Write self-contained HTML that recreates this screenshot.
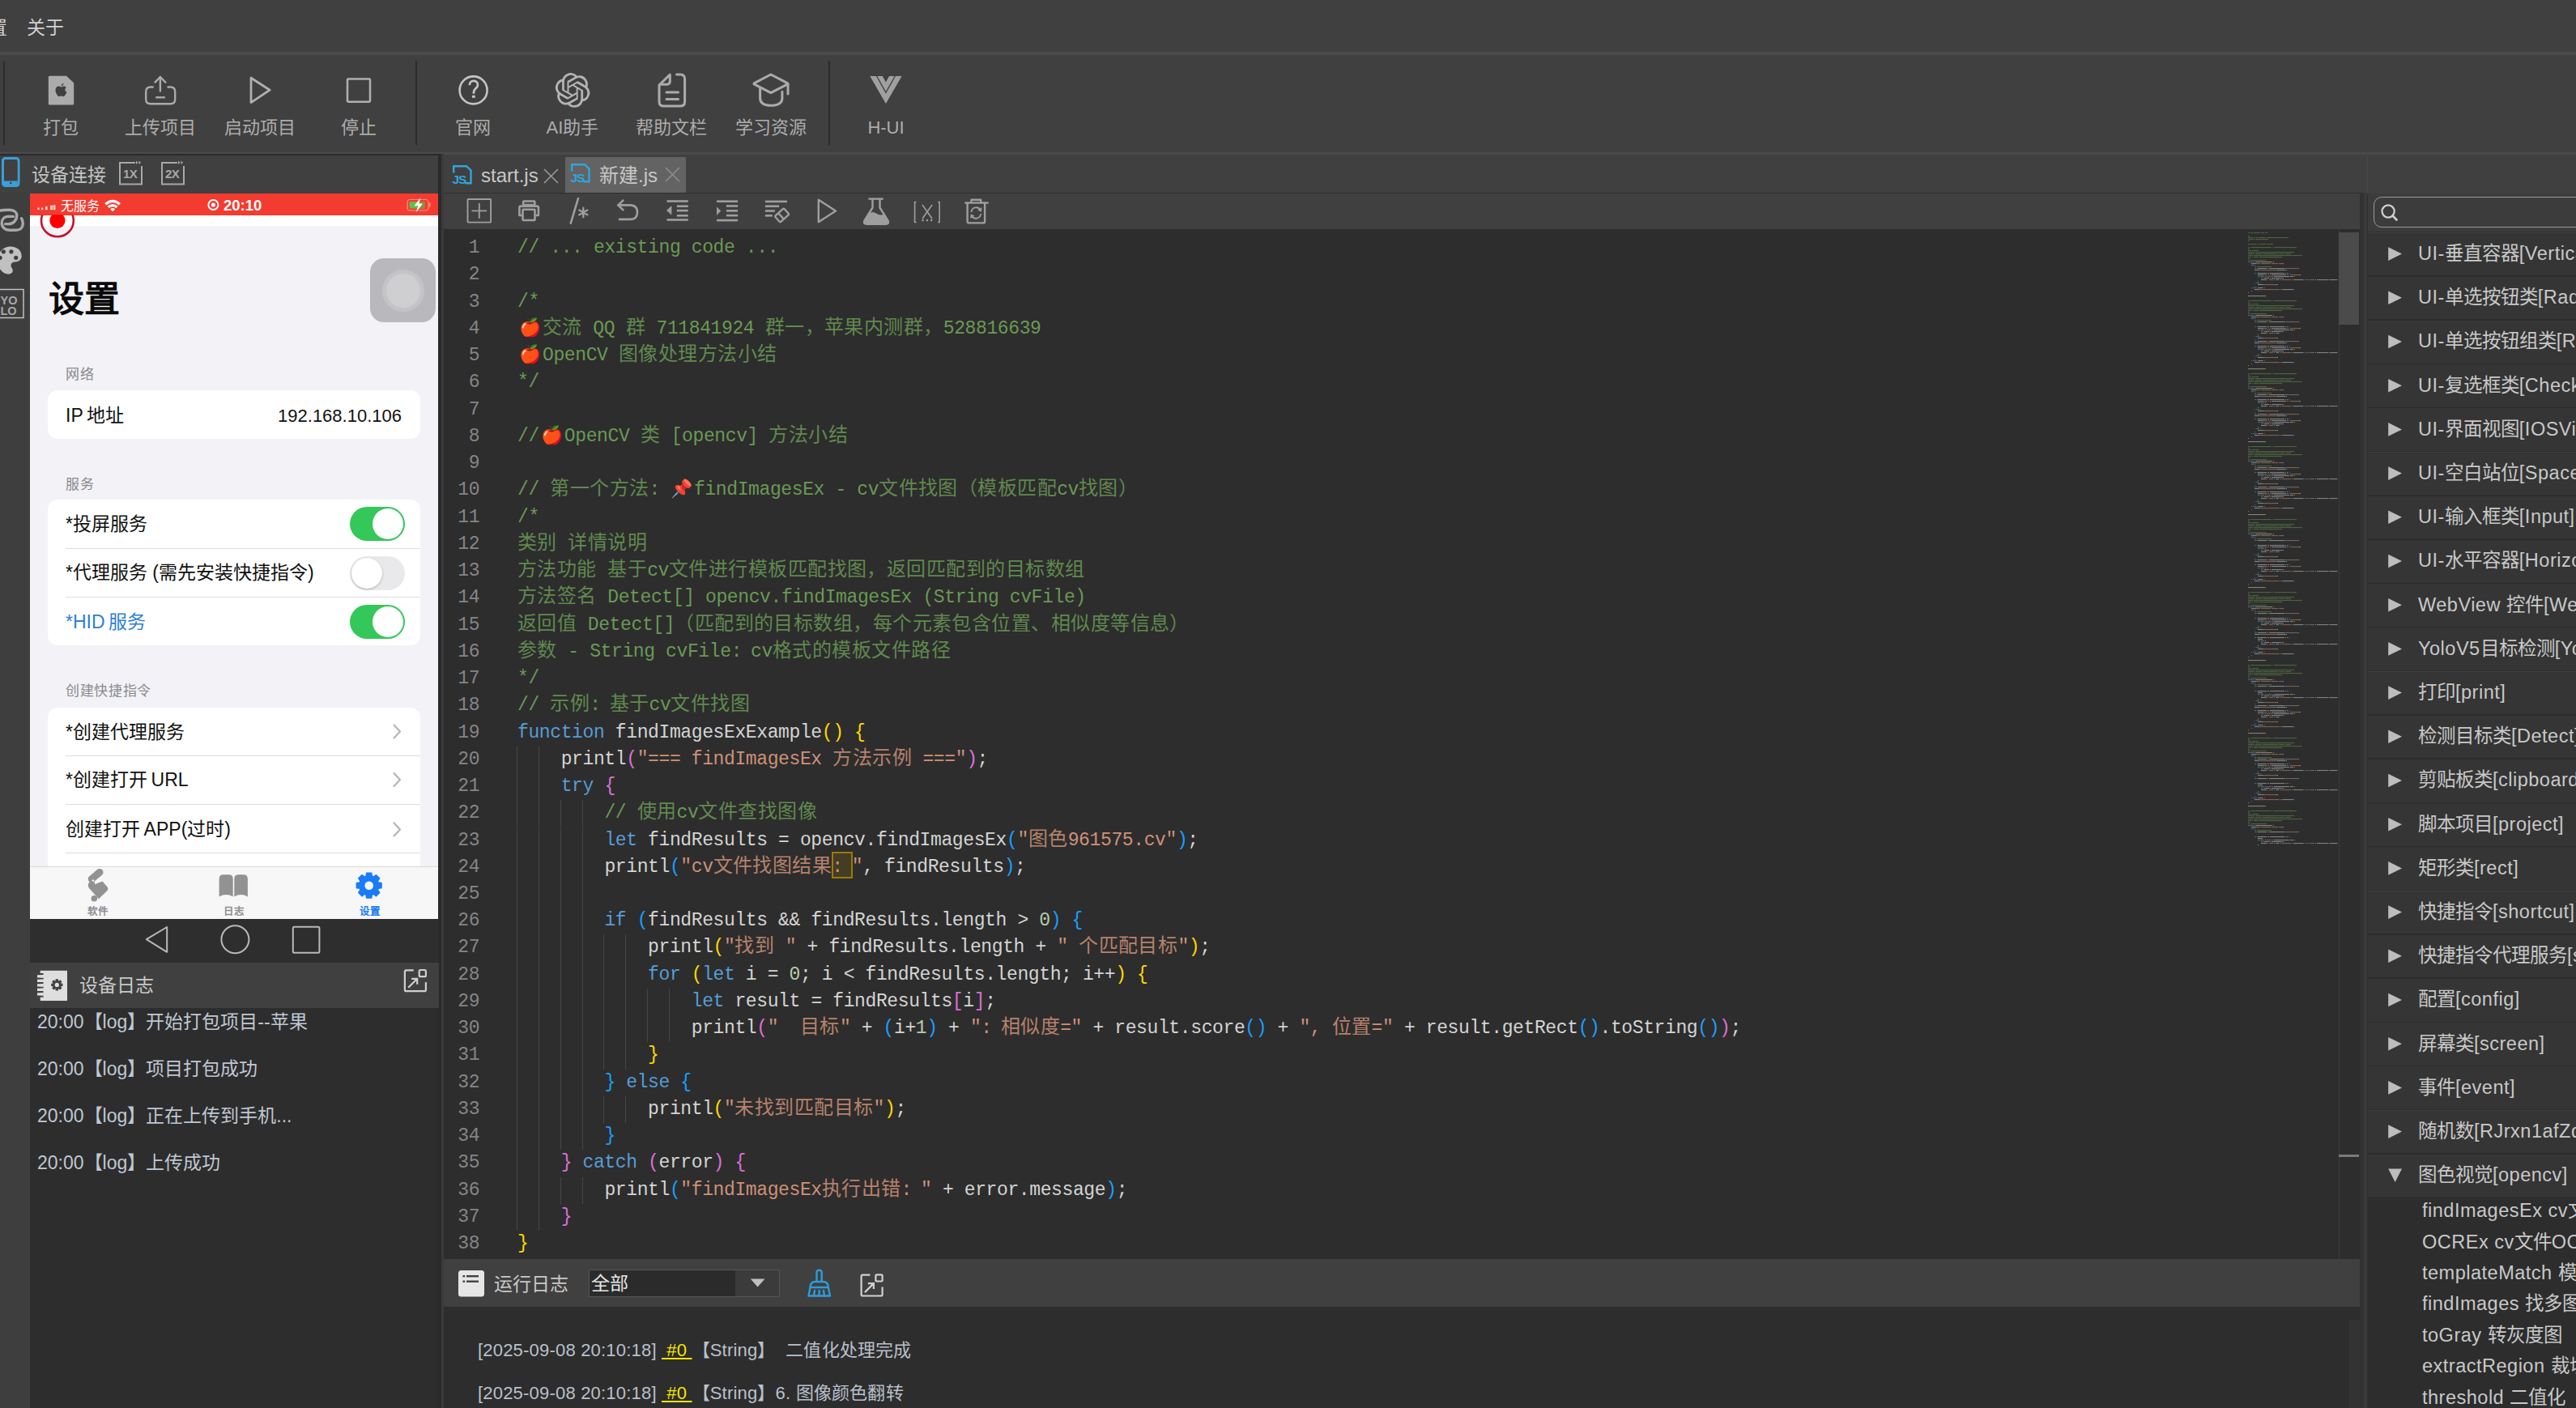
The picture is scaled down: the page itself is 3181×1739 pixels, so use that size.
<!DOCTYPE html>
<html lang="zh-CN"><head><meta charset="utf-8"><style>
*{margin:0;padding:0;box-sizing:border-box}
html,body{width:3181px;height:1739px;overflow:hidden;background:#404040}
body{position:relative;font-family:"Liberation Sans",sans-serif;color:#c8c8c8}
.a{position:absolute}
.cl{position:absolute;left:639px;height:33.2px;line-height:33.2px;white-space:pre;font-family:"Liberation Mono",monospace;font-size:23px;letter-spacing:-0.382px}
.cj{font-size:24px;letter-spacing:0.45px;font-family:"Liberation Sans",sans-serif;line-height:0;opacity:.85}
.fc{display:inline-block;width:24.45px;letter-spacing:0}
.em{display:inline-block;width:31px;font-size:22px;text-align:center;line-height:0}
.ln{position:absolute;left:541px;width:51px;text-align:right;height:33.2px;line-height:33.2px;font-family:"Liberation Mono",monospace;font-size:23px;letter-spacing:-0.48px;color:#858585}
.ig{position:absolute;width:1px;background:#464646}
.tb{position:absolute;text-align:center;font-size:22px;color:#adadad;line-height:30px;white-space:nowrap}
svg{position:absolute;overflow:visible}
</style></head>
<body>
<div class="a" style="left:0.0px;top:0.0px;width:3181.0px;height:64.0px;background:#404040;"></div>
<div class="a" style="left:-14.0px;top:23.2px;font-size:23.0px;color:#d0d0d0;white-space:nowrap;line-height:1;">置</div>
<div class="a" style="left:33.0px;top:23.2px;font-size:23.0px;color:#d0d0d0;white-space:nowrap;line-height:1;">关于</div>
<div class="a" style="left:0.0px;top:64.0px;width:3181.0px;height:4.0px;background:#4a4a4a;"></div>
<div class="a" style="left:0.0px;top:68.0px;width:3181.0px;height:120.0px;background:#404040;"></div>
<div class="a" style="left:4.0px;top:75.0px;width:2.0px;height:104.0px;background:#2c2c2c;"></div>
<div class="a" style="left:513.0px;top:75.0px;width:2.0px;height:104.0px;background:#2c2c2c;"></div>
<div class="a" style="left:1023.0px;top:75.0px;width:2.0px;height:104.0px;background:#2c2c2c;"></div>
<div class="a" style="left:0.0px;top:188.0px;width:3181.0px;height:3.0px;background:#4a4a4a;"></div>
<div class="tb" style="left:-5px;top:143px;width:160px">打包</div>
<div class="tb" style="left:118px;top:143px;width:160px">上传项目</div>
<div class="tb" style="left:241px;top:143px;width:160px">启动项目</div>
<div class="tb" style="left:363px;top:143px;width:160px">停止</div>
<div class="tb" style="left:504px;top:143px;width:160px">官网</div>
<div class="tb" style="left:627px;top:143px;width:160px">AI助手</div>
<div class="tb" style="left:749px;top:143px;width:160px">帮助文栏</div>
<div class="tb" style="left:872px;top:143px;width:160px">学习资源</div>
<div class="tb" style="left:1014px;top:143px;width:160px">H-UI</div>
<div class="a" style="left:0.0px;top:191.0px;width:541.0px;height:47.0px;background:#404040;"></div>
<div class="a" style="left:541.0px;top:190.0px;width:4.0px;height:1549.0px;background:#2a2a2a;"></div>
<div class="a" style="left:0.0px;top:190.0px;width:541.0px;height:2.0px;background:#2a2a2a;"></div>
<div class="a" style="left:545.0px;top:190.0px;width:3.0px;height:1549.0px;background:#3a3a3a;"></div>
<div class="a" style="left:0.0px;top:238.0px;width:37.0px;height:1501.0px;background:#3e3e3e;"></div>
<div class="a" style="left:39.0px;top:205.0px;font-size:23.0px;color:#c4c4c4;white-space:nowrap;line-height:1;">设备连接</div>
<div class="a" style="left:37.0px;top:239.0px;width:504.0px;height:831.0px;background:#f2f2f7;"></div>
<div class="a" style="left:37.0px;top:265.5px;width:504.0px;height:13.0px;background:#ffffff;"></div>
<div class="a" style="left:37.0px;top:239.0px;width:504.0px;height:26.5px;background:#f43b2f;"></div>
<div class="a" style="left:60.0px;top:348.0px;font-size:44.0px;color:#0a0a0a;white-space:nowrap;line-height:1;font-weight:bold">设置</div>
<div class="a" style="left:457px;top:319px;width:81px;height:79px;border-radius:17px;background:#b9b9bd"></div>
<div class="a" style="left:477px;top:338px;width:42px;height:42px;border-radius:50%;background:#cfcfd2;box-shadow:0 0 0 5px #c4c4c8"></div>
<div class="a" style="left:81.0px;top:454.0px;font-size:17.0px;color:#8a8a8e;white-space:nowrap;line-height:1;letter-spacing:0.7px">网络</div>
<div class="a" style="left:81.0px;top:589.5px;font-size:17.0px;color:#8a8a8e;white-space:nowrap;line-height:1;letter-spacing:0.7px">服务</div>
<div class="a" style="left:81.0px;top:845.0px;font-size:17.0px;color:#8a8a8e;white-space:nowrap;line-height:1;letter-spacing:0.7px">创建快捷指令</div>
<div class="a" style="left:59px;top:482px;width:460px;height:60px;border-radius:12px;background:#fff"></div>
<div class="a" style="left:81.0px;top:502.0px;font-size:23.0px;color:#111;white-space:nowrap;line-height:1;">IP&thinsp;地址</div>
<div class="a" style="left:200px;top:503px;width:296px;text-align:right;font-size:22px;color:#111;line-height:1">192.168.10.106</div>
<div class="a" style="left:59px;top:617px;width:460px;height:180px;border-radius:12px;background:#fff"></div>
<div class="a" style="left:81.0px;top:676.5px;width:438.0px;height:1.0px;background:#dcdcdc;"></div>
<div class="a" style="left:81.0px;top:736.5px;width:438.0px;height:1.0px;background:#dcdcdc;"></div>
<div class="a" style="left:81.0px;top:636.0px;font-size:23.0px;color:#111;white-space:nowrap;line-height:1;">*投屏服务</div>
<div class="a" style="left:81.0px;top:695.5px;font-size:23.0px;color:#111;white-space:nowrap;line-height:1;">*代理服务 (需先安装快捷指令)</div>
<div class="a" style="left:81.0px;top:756.5px;font-size:23.0px;color:#2d7fd9;white-space:nowrap;line-height:1;">*HID&thinsp;服务</div>
<div class="a" style="left:432px;top:626.0px;width:68px;height:42px;border-radius:21px;background:#34c759"></div>
<div class="a" style="left:460px;top:628.0px;width:38px;height:38px;border-radius:50%;background:#fff"></div>
<div class="a" style="left:432px;top:686.6px;width:68px;height:42px;border-radius:21px;background:#e9e9eb"></div>
<div class="a" style="left:434px;top:688.6px;width:38px;height:38px;border-radius:50%;background:#fff;box-shadow:0 1px 3px rgba(0,0,0,.25)"></div>
<div class="a" style="left:432px;top:747.0px;width:68px;height:42px;border-radius:21px;background:#34c759"></div>
<div class="a" style="left:460px;top:749.0px;width:38px;height:38px;border-radius:50%;background:#fff"></div>
<div class="a" style="left:59px;top:874px;width:460px;height:250px;border-radius:12px;background:#fff"></div>
<div class="a" style="left:81.0px;top:932.5px;width:438.0px;height:1.0px;background:#dcdcdc;"></div>
<div class="a" style="left:81.0px;top:993.0px;width:438.0px;height:1.0px;background:#dcdcdc;"></div>
<div class="a" style="left:81.0px;top:1053.0px;width:438.0px;height:1.0px;background:#dcdcdc;"></div>
<div class="a" style="left:81.0px;top:892.5px;font-size:23.0px;color:#111;white-space:nowrap;line-height:1;">*创建代理服务</div>
<div class="a" style="left:81.0px;top:952.0px;font-size:23.0px;color:#111;white-space:nowrap;line-height:1;">*创建打开&thinsp;URL</div>
<div class="a" style="left:81.0px;top:1012.5px;font-size:23.0px;color:#111;white-space:nowrap;line-height:1;">创建打开&thinsp;APP(过时)</div>
<div class="a" style="left:37.0px;top:1069.6px;width:504.0px;height:65.4px;background:#f7f7f7;"></div>
<div class="a" style="left:37.0px;top:1069.6px;width:504.0px;height:1.0px;background:#d8d8d8;"></div>
<div class="a" style="left:108.0px;top:1119.5px;font-size:12.5px;color:#8e8e93;white-space:nowrap;line-height:1;font-weight:bold">软件</div>
<div class="a" style="left:276.0px;top:1119.5px;font-size:12.5px;color:#8e8e93;white-space:nowrap;line-height:1;font-weight:bold">日志</div>
<div class="a" style="left:444.0px;top:1119.5px;font-size:12.5px;color:#1a7cf5;white-space:nowrap;line-height:1;font-weight:bold">设置</div>
<div class="a" style="left:37.0px;top:1135.0px;width:504.0px;height:54.0px;background:#2e2e2e;"></div>
<div class="a" style="left:38.0px;top:1190.0px;width:504.0px;height:55.0px;background:#404040;"></div>
<div class="a" style="left:98.0px;top:1206.0px;font-size:23.0px;color:#c8c8c8;white-space:nowrap;line-height:1;">设备日志</div>
<div class="a" style="left:37.0px;top:1245.0px;width:504.0px;height:494.0px;background:#2d2d2d;"></div>
<div class="a" style="left:46.0px;top:1250.5px;font-size:23.0px;color:#bfc7d2;white-space:nowrap;line-height:1;">20:00【log】开始打包项目--苹果</div>
<div class="a" style="left:46.0px;top:1308.6px;font-size:23.0px;color:#bfc7d2;white-space:nowrap;line-height:1;">20:00【log】项目打包成功</div>
<div class="a" style="left:46.0px;top:1366.7px;font-size:23.0px;color:#bfc7d2;white-space:nowrap;line-height:1;">20:00【log】正在上传到手机...</div>
<div class="a" style="left:46.0px;top:1424.8px;font-size:23.0px;color:#bfc7d2;white-space:nowrap;line-height:1;">20:00【log】上传成功</div>
<div class="a" style="left:548.0px;top:191.0px;width:2370.0px;height:47.0px;background:#404040;"></div>
<div class="a" style="left:548.0px;top:237.8px;width:2370.0px;height:1.5px;background:#2e2e2e;"></div>
<div class="a" style="left:698.0px;top:194.0px;width:149.0px;height:44.0px;background:#636363;"></div>
<div class="a" style="left:594.0px;top:205.0px;font-size:24.0px;color:#c8c8c8;white-space:nowrap;line-height:1;">start.js</div>
<div class="a" style="left:740.0px;top:205.0px;font-size:24.0px;color:#c8c8c8;white-space:nowrap;line-height:1;">新建.js</div>
<div class="a" style="left:548.0px;top:239.3px;width:2365.0px;height:43.5px;background:#404040;"></div>
<div class="a" style="left:548.0px;top:282.8px;width:2370.0px;height:1272.0px;background:#2d2d2d;"></div>
<div class="a" style="left:1027.3px;top:1051.8px;width:25.4px;height:33px;border:2px solid #9a7c00;background:#433d26"></div>
<div class="ln" style="top:290.2px">1</div>
<div class="ln" style="top:323.4px">2</div>
<div class="ln" style="top:356.7px">3</div>
<div class="ln" style="top:389.9px">4</div>
<div class="ln" style="top:423.2px">5</div>
<div class="ln" style="top:456.4px">6</div>
<div class="ln" style="top:489.6px">7</div>
<div class="ln" style="top:522.9px">8</div>
<div class="ln" style="top:556.1px">9</div>
<div class="ln" style="top:589.4px">10</div>
<div class="ln" style="top:622.6px">11</div>
<div class="ln" style="top:655.8px">12</div>
<div class="ln" style="top:689.1px">13</div>
<div class="ln" style="top:722.3px">14</div>
<div class="ln" style="top:755.6px">15</div>
<div class="ln" style="top:788.8px">16</div>
<div class="ln" style="top:822.0px">17</div>
<div class="ln" style="top:855.3px">18</div>
<div class="ln" style="top:888.5px">19</div>
<div class="ln" style="top:921.8px">20</div>
<div class="ln" style="top:955.0px">21</div>
<div class="ln" style="top:988.2px">22</div>
<div class="ln" style="top:1021.5px">23</div>
<div class="ln" style="top:1054.7px">24</div>
<div class="ln" style="top:1088.0px">25</div>
<div class="ln" style="top:1121.2px">26</div>
<div class="ln" style="top:1154.4px">27</div>
<div class="ln" style="top:1187.7px">28</div>
<div class="ln" style="top:1220.9px">29</div>
<div class="ln" style="top:1254.2px">30</div>
<div class="ln" style="top:1287.4px">31</div>
<div class="ln" style="top:1320.6px">32</div>
<div class="ln" style="top:1353.9px">33</div>
<div class="ln" style="top:1387.1px">34</div>
<div class="ln" style="top:1420.4px">35</div>
<div class="ln" style="top:1453.6px">36</div>
<div class="ln" style="top:1486.8px">37</div>
<div class="ln" style="top:1520.1px">38</div>
<div class="cl" style="top:290.2px"><span style="color:#6a9955">// ... existing code ...</span></div>
<div class="cl" style="top:323.4px"></div>
<div class="cl" style="top:356.7px"><span style="color:#6a9955">/*</span></div>
<div class="cl" style="top:389.9px"><span style="color:#6a9955"><span class="em">🍎</span><span class="cj">交流</span> QQ <span class="cj">群</span> 711841924 <span class="cj">群一，苹果内测群，</span>528816639</span></div>
<div class="cl" style="top:423.2px"><span style="color:#6a9955"><span class="em">🍎</span>OpenCV <span class="cj">图像处理方法小结</span></span></div>
<div class="cl" style="top:456.4px"><span style="color:#6a9955">*/</span></div>
<div class="cl" style="top:489.6px"></div>
<div class="cl" style="top:522.9px"><span style="color:#6a9955">//<span class="em">🍎</span>OpenCV <span class="cj">类</span> [opencv] <span class="cj">方法小结</span></span></div>
<div class="cl" style="top:556.1px"></div>
<div class="cl" style="top:589.4px"><span style="color:#6a9955">// <span class="cj">第一个方法</span><span class="fc">:</span><span class="em">📌</span>findImagesEx - cv<span class="cj">文件找图（模板匹配</span>cv<span class="cj">找图）</span></span></div>
<div class="cl" style="top:622.6px"><span style="color:#6a9955">/*</span></div>
<div class="cl" style="top:655.8px"><span style="color:#6a9955"><span class="cj">类别</span> <span class="cj">详情说明</span></span></div>
<div class="cl" style="top:689.1px"><span style="color:#6a9955"><span class="cj">方法功能</span> <span class="cj">基于</span>cv<span class="cj">文件进行模板匹配找图，返回匹配到的目标数组</span></span></div>
<div class="cl" style="top:722.3px"><span style="color:#6a9955"><span class="cj">方法签名</span> Detect[] opencv.findImagesEx (String cvFile)</span></div>
<div class="cl" style="top:755.6px"><span style="color:#6a9955"><span class="cj">返回值</span> Detect[]<span class="cj">（匹配到的目标数组，每个元素包含位置、相似度等信息）</span></span></div>
<div class="cl" style="top:788.8px"><span style="color:#6a9955"><span class="cj">参数</span> - String cvFile<span class="fc">:</span>cv<span class="cj">格式的模板文件路径</span></span></div>
<div class="cl" style="top:822.0px"><span style="color:#6a9955">*/</span></div>
<div class="cl" style="top:855.3px"><span style="color:#6a9955">// <span class="cj">示例</span><span class="fc">:</span><span class="cj">基于</span>cv<span class="cj">文件找图</span></span></div>
<div class="cl" style="top:888.5px"><span style="color:#569cd6">function</span><span style="color:#d4d4d4"> </span><span style="color:#d4d4d4">findImagesExExample</span><span style="color:#ffd700">(</span><span style="color:#ffd700">)</span><span style="color:#d4d4d4"> </span><span style="color:#ffd700">{</span></div>
<div class="cl" style="top:921.8px"><span style="color:#d4d4d4"> </span><span style="color:#d4d4d4"> </span><span style="color:#d4d4d4"> </span><span style="color:#d4d4d4"> </span><span style="color:#d4d4d4">printl</span><span style="color:#da70d6">(</span><span style="color:#ce9178">&quot;=== findImagesEx <span class="cj">方法示例</span> ===&quot;</span><span style="color:#da70d6">)</span><span style="color:#d4d4d4">;</span></div>
<div class="cl" style="top:955.0px"><span style="color:#d4d4d4"> </span><span style="color:#d4d4d4"> </span><span style="color:#d4d4d4"> </span><span style="color:#d4d4d4"> </span><span style="color:#569cd6">try</span><span style="color:#d4d4d4"> </span><span style="color:#da70d6">{</span></div>
<div class="cl" style="top:988.2px"><span style="color:#d4d4d4"> </span><span style="color:#d4d4d4"> </span><span style="color:#d4d4d4"> </span><span style="color:#d4d4d4"> </span><span style="color:#d4d4d4"> </span><span style="color:#d4d4d4"> </span><span style="color:#d4d4d4"> </span><span style="color:#d4d4d4"> </span><span style="color:#6a9955">// <span class="cj">使用</span>cv<span class="cj">文件查找图像</span></span></div>
<div class="cl" style="top:1021.5px"><span style="color:#d4d4d4"> </span><span style="color:#d4d4d4"> </span><span style="color:#d4d4d4"> </span><span style="color:#d4d4d4"> </span><span style="color:#d4d4d4"> </span><span style="color:#d4d4d4"> </span><span style="color:#d4d4d4"> </span><span style="color:#d4d4d4"> </span><span style="color:#569cd6">let</span><span style="color:#d4d4d4"> </span><span style="color:#d4d4d4">findResults</span><span style="color:#d4d4d4"> </span><span style="color:#d4d4d4">=</span><span style="color:#d4d4d4"> </span><span style="color:#d4d4d4">opencv</span><span style="color:#d4d4d4">.</span><span style="color:#d4d4d4">findImagesEx</span><span style="color:#179fff">(</span><span style="color:#ce9178">&quot;<span class="cj">图色</span>961575.cv&quot;</span><span style="color:#179fff">)</span><span style="color:#d4d4d4">;</span></div>
<div class="cl" style="top:1054.7px"><span style="color:#d4d4d4"> </span><span style="color:#d4d4d4"> </span><span style="color:#d4d4d4"> </span><span style="color:#d4d4d4"> </span><span style="color:#d4d4d4"> </span><span style="color:#d4d4d4"> </span><span style="color:#d4d4d4"> </span><span style="color:#d4d4d4"> </span><span style="color:#d4d4d4">printl</span><span style="color:#179fff">(</span><span style="color:#ce9178">&quot;cv<span class="cj">文件找图结果</span><span class="fc">:</span>&quot;</span><span style="color:#d4d4d4">,</span><span style="color:#d4d4d4"> </span><span style="color:#d4d4d4">findResults</span><span style="color:#179fff">)</span><span style="color:#d4d4d4">;</span></div>
<div class="cl" style="top:1088.0px"></div>
<div class="cl" style="top:1121.2px"><span style="color:#d4d4d4"> </span><span style="color:#d4d4d4"> </span><span style="color:#d4d4d4"> </span><span style="color:#d4d4d4"> </span><span style="color:#d4d4d4"> </span><span style="color:#d4d4d4"> </span><span style="color:#d4d4d4"> </span><span style="color:#d4d4d4"> </span><span style="color:#569cd6">if</span><span style="color:#d4d4d4"> </span><span style="color:#179fff">(</span><span style="color:#d4d4d4">findResults</span><span style="color:#d4d4d4"> </span><span style="color:#d4d4d4">&amp;</span><span style="color:#d4d4d4">&amp;</span><span style="color:#d4d4d4"> </span><span style="color:#d4d4d4">findResults</span><span style="color:#d4d4d4">.</span><span style="color:#d4d4d4">length</span><span style="color:#d4d4d4"> </span><span style="color:#d4d4d4">&gt;</span><span style="color:#d4d4d4"> </span><span style="color:#b5cea8">0</span><span style="color:#179fff">)</span><span style="color:#d4d4d4"> </span><span style="color:#179fff">{</span></div>
<div class="cl" style="top:1154.4px"><span style="color:#d4d4d4"> </span><span style="color:#d4d4d4"> </span><span style="color:#d4d4d4"> </span><span style="color:#d4d4d4"> </span><span style="color:#d4d4d4"> </span><span style="color:#d4d4d4"> </span><span style="color:#d4d4d4"> </span><span style="color:#d4d4d4"> </span><span style="color:#d4d4d4"> </span><span style="color:#d4d4d4"> </span><span style="color:#d4d4d4"> </span><span style="color:#d4d4d4"> </span><span style="color:#d4d4d4">printl</span><span style="color:#ffd700">(</span><span style="color:#ce9178">&quot;<span class="cj">找到</span> &quot;</span><span style="color:#d4d4d4"> </span><span style="color:#d4d4d4">+</span><span style="color:#d4d4d4"> </span><span style="color:#d4d4d4">findResults</span><span style="color:#d4d4d4">.</span><span style="color:#d4d4d4">length</span><span style="color:#d4d4d4"> </span><span style="color:#d4d4d4">+</span><span style="color:#d4d4d4"> </span><span style="color:#ce9178">&quot; <span class="cj">个匹配目标</span>&quot;</span><span style="color:#ffd700">)</span><span style="color:#d4d4d4">;</span></div>
<div class="cl" style="top:1187.7px"><span style="color:#d4d4d4"> </span><span style="color:#d4d4d4"> </span><span style="color:#d4d4d4"> </span><span style="color:#d4d4d4"> </span><span style="color:#d4d4d4"> </span><span style="color:#d4d4d4"> </span><span style="color:#d4d4d4"> </span><span style="color:#d4d4d4"> </span><span style="color:#d4d4d4"> </span><span style="color:#d4d4d4"> </span><span style="color:#d4d4d4"> </span><span style="color:#d4d4d4"> </span><span style="color:#569cd6">for</span><span style="color:#d4d4d4"> </span><span style="color:#ffd700">(</span><span style="color:#569cd6">let</span><span style="color:#d4d4d4"> </span><span style="color:#d4d4d4">i</span><span style="color:#d4d4d4"> </span><span style="color:#d4d4d4">=</span><span style="color:#d4d4d4"> </span><span style="color:#b5cea8">0</span><span style="color:#d4d4d4">;</span><span style="color:#d4d4d4"> </span><span style="color:#d4d4d4">i</span><span style="color:#d4d4d4"> </span><span style="color:#d4d4d4">&lt;</span><span style="color:#d4d4d4"> </span><span style="color:#d4d4d4">findResults</span><span style="color:#d4d4d4">.</span><span style="color:#d4d4d4">length</span><span style="color:#d4d4d4">;</span><span style="color:#d4d4d4"> </span><span style="color:#d4d4d4">i</span><span style="color:#d4d4d4">+</span><span style="color:#d4d4d4">+</span><span style="color:#ffd700">)</span><span style="color:#d4d4d4"> </span><span style="color:#ffd700">{</span></div>
<div class="cl" style="top:1220.9px"><span style="color:#d4d4d4"> </span><span style="color:#d4d4d4"> </span><span style="color:#d4d4d4"> </span><span style="color:#d4d4d4"> </span><span style="color:#d4d4d4"> </span><span style="color:#d4d4d4"> </span><span style="color:#d4d4d4"> </span><span style="color:#d4d4d4"> </span><span style="color:#d4d4d4"> </span><span style="color:#d4d4d4"> </span><span style="color:#d4d4d4"> </span><span style="color:#d4d4d4"> </span><span style="color:#d4d4d4"> </span><span style="color:#d4d4d4"> </span><span style="color:#d4d4d4"> </span><span style="color:#d4d4d4"> </span><span style="color:#569cd6">let</span><span style="color:#d4d4d4"> </span><span style="color:#d4d4d4">result</span><span style="color:#d4d4d4"> </span><span style="color:#d4d4d4">=</span><span style="color:#d4d4d4"> </span><span style="color:#d4d4d4">findResults</span><span style="color:#da70d6">[</span><span style="color:#d4d4d4">i</span><span style="color:#da70d6">]</span><span style="color:#d4d4d4">;</span></div>
<div class="cl" style="top:1254.2px"><span style="color:#d4d4d4"> </span><span style="color:#d4d4d4"> </span><span style="color:#d4d4d4"> </span><span style="color:#d4d4d4"> </span><span style="color:#d4d4d4"> </span><span style="color:#d4d4d4"> </span><span style="color:#d4d4d4"> </span><span style="color:#d4d4d4"> </span><span style="color:#d4d4d4"> </span><span style="color:#d4d4d4"> </span><span style="color:#d4d4d4"> </span><span style="color:#d4d4d4"> </span><span style="color:#d4d4d4"> </span><span style="color:#d4d4d4"> </span><span style="color:#d4d4d4"> </span><span style="color:#d4d4d4"> </span><span style="color:#d4d4d4">printl</span><span style="color:#da70d6">(</span><span style="color:#ce9178">&quot;  <span class="cj">目标</span>&quot;</span><span style="color:#d4d4d4"> </span><span style="color:#d4d4d4">+</span><span style="color:#d4d4d4"> </span><span style="color:#179fff">(</span><span style="color:#d4d4d4">i</span><span style="color:#d4d4d4">+</span><span style="color:#b5cea8">1</span><span style="color:#179fff">)</span><span style="color:#d4d4d4"> </span><span style="color:#d4d4d4">+</span><span style="color:#d4d4d4"> </span><span style="color:#ce9178">&quot;<span class="fc">:</span><span class="cj">相似度</span>=&quot;</span><span style="color:#d4d4d4"> </span><span style="color:#d4d4d4">+</span><span style="color:#d4d4d4"> </span><span style="color:#d4d4d4">result</span><span style="color:#d4d4d4">.</span><span style="color:#d4d4d4">score</span><span style="color:#179fff">(</span><span style="color:#179fff">)</span><span style="color:#d4d4d4"> </span><span style="color:#d4d4d4">+</span><span style="color:#d4d4d4"> </span><span style="color:#ce9178">&quot;, <span class="cj">位置</span>=&quot;</span><span style="color:#d4d4d4"> </span><span style="color:#d4d4d4">+</span><span style="color:#d4d4d4"> </span><span style="color:#d4d4d4">result</span><span style="color:#d4d4d4">.</span><span style="color:#d4d4d4">getRect</span><span style="color:#179fff">(</span><span style="color:#179fff">)</span><span style="color:#d4d4d4">.</span><span style="color:#d4d4d4">toString</span><span style="color:#179fff">(</span><span style="color:#179fff">)</span><span style="color:#da70d6">)</span><span style="color:#d4d4d4">;</span></div>
<div class="cl" style="top:1287.4px"><span style="color:#d4d4d4"> </span><span style="color:#d4d4d4"> </span><span style="color:#d4d4d4"> </span><span style="color:#d4d4d4"> </span><span style="color:#d4d4d4"> </span><span style="color:#d4d4d4"> </span><span style="color:#d4d4d4"> </span><span style="color:#d4d4d4"> </span><span style="color:#d4d4d4"> </span><span style="color:#d4d4d4"> </span><span style="color:#d4d4d4"> </span><span style="color:#d4d4d4"> </span><span style="color:#ffd700">}</span></div>
<div class="cl" style="top:1320.6px"><span style="color:#d4d4d4"> </span><span style="color:#d4d4d4"> </span><span style="color:#d4d4d4"> </span><span style="color:#d4d4d4"> </span><span style="color:#d4d4d4"> </span><span style="color:#d4d4d4"> </span><span style="color:#d4d4d4"> </span><span style="color:#d4d4d4"> </span><span style="color:#179fff">}</span><span style="color:#d4d4d4"> </span><span style="color:#569cd6">else</span><span style="color:#d4d4d4"> </span><span style="color:#179fff">{</span></div>
<div class="cl" style="top:1353.9px"><span style="color:#d4d4d4"> </span><span style="color:#d4d4d4"> </span><span style="color:#d4d4d4"> </span><span style="color:#d4d4d4"> </span><span style="color:#d4d4d4"> </span><span style="color:#d4d4d4"> </span><span style="color:#d4d4d4"> </span><span style="color:#d4d4d4"> </span><span style="color:#d4d4d4"> </span><span style="color:#d4d4d4"> </span><span style="color:#d4d4d4"> </span><span style="color:#d4d4d4"> </span><span style="color:#d4d4d4">printl</span><span style="color:#ffd700">(</span><span style="color:#ce9178">&quot;<span class="cj">未找到匹配目标</span>&quot;</span><span style="color:#ffd700">)</span><span style="color:#d4d4d4">;</span></div>
<div class="cl" style="top:1387.1px"><span style="color:#d4d4d4"> </span><span style="color:#d4d4d4"> </span><span style="color:#d4d4d4"> </span><span style="color:#d4d4d4"> </span><span style="color:#d4d4d4"> </span><span style="color:#d4d4d4"> </span><span style="color:#d4d4d4"> </span><span style="color:#d4d4d4"> </span><span style="color:#179fff">}</span></div>
<div class="cl" style="top:1420.4px"><span style="color:#d4d4d4"> </span><span style="color:#d4d4d4"> </span><span style="color:#d4d4d4"> </span><span style="color:#d4d4d4"> </span><span style="color:#da70d6">}</span><span style="color:#d4d4d4"> </span><span style="color:#569cd6">catch</span><span style="color:#d4d4d4"> </span><span style="color:#da70d6">(</span><span style="color:#d4d4d4">error</span><span style="color:#da70d6">)</span><span style="color:#d4d4d4"> </span><span style="color:#da70d6">{</span></div>
<div class="cl" style="top:1453.6px"><span style="color:#d4d4d4"> </span><span style="color:#d4d4d4"> </span><span style="color:#d4d4d4"> </span><span style="color:#d4d4d4"> </span><span style="color:#d4d4d4"> </span><span style="color:#d4d4d4"> </span><span style="color:#d4d4d4"> </span><span style="color:#d4d4d4"> </span><span style="color:#d4d4d4">printl</span><span style="color:#179fff">(</span><span style="color:#ce9178">&quot;findImagesEx<span class="cj">执行出错</span><span class="fc">:</span>&quot;</span><span style="color:#d4d4d4"> </span><span style="color:#d4d4d4">+</span><span style="color:#d4d4d4"> </span><span style="color:#d4d4d4">error</span><span style="color:#d4d4d4">.</span><span style="color:#d4d4d4">message</span><span style="color:#179fff">)</span><span style="color:#d4d4d4">;</span></div>
<div class="cl" style="top:1486.8px"><span style="color:#d4d4d4"> </span><span style="color:#d4d4d4"> </span><span style="color:#d4d4d4"> </span><span style="color:#d4d4d4"> </span><span style="color:#da70d6">}</span></div>
<div class="cl" style="top:1520.1px"><span style="color:#ffd700">}</span></div>
<div class="ig" style="left:638.0px;top:921.8px;height:33.2px"></div>
<div class="ig" style="left:664.8px;top:921.8px;height:33.2px"></div>
<div class="ig" style="left:638.0px;top:955.0px;height:33.2px"></div>
<div class="ig" style="left:664.8px;top:955.0px;height:33.2px"></div>
<div class="ig" style="left:638.0px;top:988.2px;height:33.2px"></div>
<div class="ig" style="left:664.8px;top:988.2px;height:33.2px"></div>
<div class="ig" style="left:691.7px;top:988.2px;height:33.2px"></div>
<div class="ig" style="left:718.5px;top:988.2px;height:33.2px"></div>
<div class="ig" style="left:638.0px;top:1021.5px;height:33.2px"></div>
<div class="ig" style="left:664.8px;top:1021.5px;height:33.2px"></div>
<div class="ig" style="left:691.7px;top:1021.5px;height:33.2px"></div>
<div class="ig" style="left:718.5px;top:1021.5px;height:33.2px"></div>
<div class="ig" style="left:638.0px;top:1054.7px;height:33.2px"></div>
<div class="ig" style="left:664.8px;top:1054.7px;height:33.2px"></div>
<div class="ig" style="left:691.7px;top:1054.7px;height:33.2px"></div>
<div class="ig" style="left:718.5px;top:1054.7px;height:33.2px"></div>
<div class="ig" style="left:638.0px;top:1088.0px;height:33.2px"></div>
<div class="ig" style="left:664.8px;top:1088.0px;height:33.2px"></div>
<div class="ig" style="left:691.7px;top:1088.0px;height:33.2px"></div>
<div class="ig" style="left:718.5px;top:1088.0px;height:33.2px"></div>
<div class="ig" style="left:638.0px;top:1121.2px;height:33.2px"></div>
<div class="ig" style="left:664.8px;top:1121.2px;height:33.2px"></div>
<div class="ig" style="left:691.7px;top:1121.2px;height:33.2px"></div>
<div class="ig" style="left:718.5px;top:1121.2px;height:33.2px"></div>
<div class="ig" style="left:638.0px;top:1154.4px;height:33.2px"></div>
<div class="ig" style="left:664.8px;top:1154.4px;height:33.2px"></div>
<div class="ig" style="left:691.7px;top:1154.4px;height:33.2px"></div>
<div class="ig" style="left:718.5px;top:1154.4px;height:33.2px"></div>
<div class="ig" style="left:745.4px;top:1154.4px;height:33.2px"></div>
<div class="ig" style="left:772.2px;top:1154.4px;height:33.2px"></div>
<div class="ig" style="left:638.0px;top:1187.7px;height:33.2px"></div>
<div class="ig" style="left:664.8px;top:1187.7px;height:33.2px"></div>
<div class="ig" style="left:691.7px;top:1187.7px;height:33.2px"></div>
<div class="ig" style="left:718.5px;top:1187.7px;height:33.2px"></div>
<div class="ig" style="left:745.4px;top:1187.7px;height:33.2px"></div>
<div class="ig" style="left:772.2px;top:1187.7px;height:33.2px"></div>
<div class="ig" style="left:638.0px;top:1220.9px;height:33.2px"></div>
<div class="ig" style="left:664.8px;top:1220.9px;height:33.2px"></div>
<div class="ig" style="left:691.7px;top:1220.9px;height:33.2px"></div>
<div class="ig" style="left:718.5px;top:1220.9px;height:33.2px"></div>
<div class="ig" style="left:745.4px;top:1220.9px;height:33.2px"></div>
<div class="ig" style="left:772.2px;top:1220.9px;height:33.2px"></div>
<div class="ig" style="left:799.0px;top:1220.9px;height:33.2px"></div>
<div class="ig" style="left:825.9px;top:1220.9px;height:33.2px"></div>
<div class="ig" style="left:638.0px;top:1254.2px;height:33.2px"></div>
<div class="ig" style="left:664.8px;top:1254.2px;height:33.2px"></div>
<div class="ig" style="left:691.7px;top:1254.2px;height:33.2px"></div>
<div class="ig" style="left:718.5px;top:1254.2px;height:33.2px"></div>
<div class="ig" style="left:745.4px;top:1254.2px;height:33.2px"></div>
<div class="ig" style="left:772.2px;top:1254.2px;height:33.2px"></div>
<div class="ig" style="left:799.0px;top:1254.2px;height:33.2px"></div>
<div class="ig" style="left:825.9px;top:1254.2px;height:33.2px"></div>
<div class="ig" style="left:638.0px;top:1287.4px;height:33.2px"></div>
<div class="ig" style="left:664.8px;top:1287.4px;height:33.2px"></div>
<div class="ig" style="left:691.7px;top:1287.4px;height:33.2px"></div>
<div class="ig" style="left:718.5px;top:1287.4px;height:33.2px"></div>
<div class="ig" style="left:745.4px;top:1287.4px;height:33.2px"></div>
<div class="ig" style="left:772.2px;top:1287.4px;height:33.2px"></div>
<div class="ig" style="left:638.0px;top:1320.6px;height:33.2px"></div>
<div class="ig" style="left:664.8px;top:1320.6px;height:33.2px"></div>
<div class="ig" style="left:691.7px;top:1320.6px;height:33.2px"></div>
<div class="ig" style="left:718.5px;top:1320.6px;height:33.2px"></div>
<div class="ig" style="left:638.0px;top:1353.9px;height:33.2px"></div>
<div class="ig" style="left:664.8px;top:1353.9px;height:33.2px"></div>
<div class="ig" style="left:691.7px;top:1353.9px;height:33.2px"></div>
<div class="ig" style="left:718.5px;top:1353.9px;height:33.2px"></div>
<div class="ig" style="left:745.4px;top:1353.9px;height:33.2px"></div>
<div class="ig" style="left:772.2px;top:1353.9px;height:33.2px"></div>
<div class="ig" style="left:638.0px;top:1387.1px;height:33.2px"></div>
<div class="ig" style="left:664.8px;top:1387.1px;height:33.2px"></div>
<div class="ig" style="left:691.7px;top:1387.1px;height:33.2px"></div>
<div class="ig" style="left:718.5px;top:1387.1px;height:33.2px"></div>
<div class="ig" style="left:638.0px;top:1420.4px;height:33.2px"></div>
<div class="ig" style="left:664.8px;top:1420.4px;height:33.2px"></div>
<div class="ig" style="left:638.0px;top:1453.6px;height:33.2px"></div>
<div class="ig" style="left:664.8px;top:1453.6px;height:33.2px"></div>
<div class="ig" style="left:691.7px;top:1453.6px;height:33.2px"></div>
<div class="ig" style="left:718.5px;top:1453.6px;height:33.2px"></div>
<div class="ig" style="left:638.0px;top:1486.8px;height:33.2px"></div>
<div class="ig" style="left:664.8px;top:1486.8px;height:33.2px"></div>
<div class="a" style="left:2887.5px;top:283.0px;width:1.0px;height:1272.0px;background:#3a3a3a;"></div>
<div class="a" style="left:2888.0px;top:287.0px;width:25.0px;height:114.0px;background:#4b4b4b;"></div>
<div class="a" style="left:2888.0px;top:1426.0px;width:25.0px;height:2.5px;background:#7a7a7a;"></div>
<div class="a" style="left:548.0px;top:1554.6px;width:2367.0px;height:59.4px;background:#404040;"></div>
<div class="a" style="left:610.0px;top:1575.0px;font-size:23.0px;color:#c8c8c8;white-space:nowrap;line-height:1;">运行日志</div>
<div class="a" style="left:726.5px;top:1567.5px;width:236px;height:34px;border:1px solid #555;background:#2b2b2b"></div>
<div class="a" style="left:908.0px;top:1568.5px;width:53.5px;height:32.0px;background:#3b3b3b;"></div>
<div class="a" style="left:730.0px;top:1574.0px;font-size:23.0px;color:#e6e6e6;white-space:nowrap;line-height:1;">全部</div>
<div class="a" style="left:548.0px;top:1614.0px;width:2367.0px;height:125.0px;background:#2d2d2d;"></div>
<div class="a" style="left:2901.0px;top:1630.0px;width:14.0px;height:109.0px;background:#333333;"></div>
<div class="a" style="left:590px;top:1657px;font-size:22px;color:#b8c0cb;white-space:nowrap;line-height:1;letter-spacing:0.2px">[2025-09-08 20:10:18] <span style="color:#f5e400;text-decoration:underline">&nbsp;#0&nbsp;</span>【String】&nbsp;&nbsp;二值化处理完成</div>
<div class="a" style="left:590px;top:1710px;font-size:22px;color:#b8c0cb;white-space:nowrap;line-height:1;letter-spacing:0.2px">[2025-09-08 20:10:18] <span style="color:#f5e400;text-decoration:underline">&nbsp;#0&nbsp;</span>【String】6. 图像颜色翻转</div>
<div class="a" style="left:2913.8px;top:239.0px;width:5.0px;height:1500.0px;background:#323232;"></div>
<div class="a" style="left:2918.8px;top:191.0px;width:3.8px;height:1548.0px;background:#3a3a3a;"></div>
<div class="a" style="left:2922.6px;top:239.0px;width:1.4px;height:1500.0px;background:#2e2e2e;"></div>
<div class="a" style="left:2918.0px;top:191.0px;width:263.0px;height:46.5px;background:#404040;"></div>
<div class="a" style="left:2922.7px;top:191.0px;width:1.0px;height:46.5px;background:#474747;"></div>
<div class="a" style="left:2924.0px;top:239.0px;width:257.0px;height:47.5px;background:#3c3c3c;"></div>
<div class="a" style="left:2924.0px;top:286.4px;width:257.0px;height:1.1px;background:#2e2e2e;"></div>
<div class="a" style="left:2931.2px;top:242.6px;width:300px;height:38.3px;border:1.6px solid #9a9a9a;border-radius:10px"></div>
<div class="a" style="left:2924.0px;top:287.5px;width:257.0px;height:54.2px;background:#353535;"></div>
<div class="a" style="left:2924.0px;top:340.1px;width:257.0px;height:1.6px;background:#2c2c2c;"></div>
<div class="a" style="left:2986.0px;top:302.0px;font-size:23.5px;color:#c8c8c8;white-space:nowrap;line-height:1;"><span style="letter-spacing:0.5px">UI-</span>垂直容器<span style="letter-spacing:0.5px">[VerticalLayout]</span></div>
<div class="a" style="left:2924.0px;top:341.7px;width:257.0px;height:54.2px;background:#353535;"></div>
<div class="a" style="left:2924.0px;top:394.3px;width:257.0px;height:1.6px;background:#2c2c2c;"></div>
<div class="a" style="left:2986.0px;top:356.2px;font-size:23.5px;color:#c8c8c8;white-space:nowrap;line-height:1;"><span style="letter-spacing:0.5px">UI-</span>单选按钮类<span style="letter-spacing:0.5px">[RadioButton]</span></div>
<div class="a" style="left:2924.0px;top:395.9px;width:257.0px;height:54.2px;background:#353535;"></div>
<div class="a" style="left:2924.0px;top:448.5px;width:257.0px;height:1.6px;background:#2c2c2c;"></div>
<div class="a" style="left:2986.0px;top:410.4px;font-size:23.5px;color:#c8c8c8;white-space:nowrap;line-height:1;"><span style="letter-spacing:0.5px">UI-</span>单选按钮组类<span style="letter-spacing:0.5px">[RadioGroup]</span></div>
<div class="a" style="left:2924.0px;top:450.1px;width:257.0px;height:54.2px;background:#353535;"></div>
<div class="a" style="left:2924.0px;top:502.7px;width:257.0px;height:1.6px;background:#2c2c2c;"></div>
<div class="a" style="left:2986.0px;top:464.6px;font-size:23.5px;color:#c8c8c8;white-space:nowrap;line-height:1;"><span style="letter-spacing:0.5px">UI-</span>复选框类<span style="letter-spacing:0.5px">[CheckBox]</span></div>
<div class="a" style="left:2924.0px;top:504.3px;width:257.0px;height:54.2px;background:#353535;"></div>
<div class="a" style="left:2924.0px;top:556.9px;width:257.0px;height:1.6px;background:#2c2c2c;"></div>
<div class="a" style="left:2986.0px;top:518.8px;font-size:23.5px;color:#c8c8c8;white-space:nowrap;line-height:1;"><span style="letter-spacing:0.5px">UI-</span>界面视图<span style="letter-spacing:0.5px">[IOSView]</span></div>
<div class="a" style="left:2924.0px;top:558.5px;width:257.0px;height:54.2px;background:#353535;"></div>
<div class="a" style="left:2924.0px;top:611.1px;width:257.0px;height:1.6px;background:#2c2c2c;"></div>
<div class="a" style="left:2986.0px;top:573.0px;font-size:23.5px;color:#c8c8c8;white-space:nowrap;line-height:1;"><span style="letter-spacing:0.5px">UI-</span>空白站位<span style="letter-spacing:0.5px">[Spacer]</span></div>
<div class="a" style="left:2924.0px;top:612.7px;width:257.0px;height:54.2px;background:#353535;"></div>
<div class="a" style="left:2924.0px;top:665.3px;width:257.0px;height:1.6px;background:#2c2c2c;"></div>
<div class="a" style="left:2986.0px;top:627.2px;font-size:23.5px;color:#c8c8c8;white-space:nowrap;line-height:1;"><span style="letter-spacing:0.5px">UI-</span>输入框类<span style="letter-spacing:0.5px">[Input]</span></div>
<div class="a" style="left:2924.0px;top:666.9px;width:257.0px;height:54.2px;background:#353535;"></div>
<div class="a" style="left:2924.0px;top:719.5px;width:257.0px;height:1.6px;background:#2c2c2c;"></div>
<div class="a" style="left:2986.0px;top:681.4px;font-size:23.5px;color:#c8c8c8;white-space:nowrap;line-height:1;"><span style="letter-spacing:0.5px">UI-</span>水平容器<span style="letter-spacing:0.5px">[HorizontalLayout]</span></div>
<div class="a" style="left:2924.0px;top:721.1px;width:257.0px;height:54.2px;background:#353535;"></div>
<div class="a" style="left:2924.0px;top:773.7px;width:257.0px;height:1.6px;background:#2c2c2c;"></div>
<div class="a" style="left:2986.0px;top:735.6px;font-size:23.5px;color:#c8c8c8;white-space:nowrap;line-height:1;"><span style="letter-spacing:0.5px">WebView </span>控件<span style="letter-spacing:0.5px">[WebView]</span></div>
<div class="a" style="left:2924.0px;top:775.3px;width:257.0px;height:54.2px;background:#353535;"></div>
<div class="a" style="left:2924.0px;top:827.9px;width:257.0px;height:1.6px;background:#2c2c2c;"></div>
<div class="a" style="left:2986.0px;top:789.8px;font-size:23.5px;color:#c8c8c8;white-space:nowrap;line-height:1;"><span style="letter-spacing:0.5px">YoloV5</span>目标检测<span style="letter-spacing:0.5px">[YoloV5]</span></div>
<div class="a" style="left:2924.0px;top:829.5px;width:257.0px;height:54.2px;background:#353535;"></div>
<div class="a" style="left:2924.0px;top:882.1px;width:257.0px;height:1.6px;background:#2c2c2c;"></div>
<div class="a" style="left:2986.0px;top:844.0px;font-size:23.5px;color:#c8c8c8;white-space:nowrap;line-height:1;">打印<span style="letter-spacing:0.5px">[print]</span></div>
<div class="a" style="left:2924.0px;top:883.7px;width:257.0px;height:54.2px;background:#353535;"></div>
<div class="a" style="left:2924.0px;top:936.3px;width:257.0px;height:1.6px;background:#2c2c2c;"></div>
<div class="a" style="left:2986.0px;top:898.2px;font-size:23.5px;color:#c8c8c8;white-space:nowrap;line-height:1;">检测目标类<span style="letter-spacing:0.5px">[Detect]</span></div>
<div class="a" style="left:2924.0px;top:937.9px;width:257.0px;height:54.2px;background:#353535;"></div>
<div class="a" style="left:2924.0px;top:990.5px;width:257.0px;height:1.6px;background:#2c2c2c;"></div>
<div class="a" style="left:2986.0px;top:952.4px;font-size:23.5px;color:#c8c8c8;white-space:nowrap;line-height:1;">剪贴板类<span style="letter-spacing:0.5px">[clipboard]</span></div>
<div class="a" style="left:2924.0px;top:992.1px;width:257.0px;height:54.2px;background:#353535;"></div>
<div class="a" style="left:2924.0px;top:1044.7px;width:257.0px;height:1.6px;background:#2c2c2c;"></div>
<div class="a" style="left:2986.0px;top:1006.6px;font-size:23.5px;color:#c8c8c8;white-space:nowrap;line-height:1;">脚本项目<span style="letter-spacing:0.5px">[project]</span></div>
<div class="a" style="left:2924.0px;top:1046.3px;width:257.0px;height:54.2px;background:#353535;"></div>
<div class="a" style="left:2924.0px;top:1098.9px;width:257.0px;height:1.6px;background:#2c2c2c;"></div>
<div class="a" style="left:2986.0px;top:1060.8px;font-size:23.5px;color:#c8c8c8;white-space:nowrap;line-height:1;">矩形类<span style="letter-spacing:0.5px">[rect]</span></div>
<div class="a" style="left:2924.0px;top:1100.5px;width:257.0px;height:54.2px;background:#353535;"></div>
<div class="a" style="left:2924.0px;top:1153.1px;width:257.0px;height:1.6px;background:#2c2c2c;"></div>
<div class="a" style="left:2986.0px;top:1115.0px;font-size:23.5px;color:#c8c8c8;white-space:nowrap;line-height:1;">快捷指令<span style="letter-spacing:0.5px">[shortcut]</span></div>
<div class="a" style="left:2924.0px;top:1154.7px;width:257.0px;height:54.2px;background:#353535;"></div>
<div class="a" style="left:2924.0px;top:1207.3px;width:257.0px;height:1.6px;background:#2c2c2c;"></div>
<div class="a" style="left:2986.0px;top:1169.2px;font-size:23.5px;color:#c8c8c8;white-space:nowrap;line-height:1;">快捷指令代理服务<span style="letter-spacing:0.5px">[shortcutAgent]</span></div>
<div class="a" style="left:2924.0px;top:1208.9px;width:257.0px;height:54.2px;background:#353535;"></div>
<div class="a" style="left:2924.0px;top:1261.5px;width:257.0px;height:1.6px;background:#2c2c2c;"></div>
<div class="a" style="left:2986.0px;top:1223.4px;font-size:23.5px;color:#c8c8c8;white-space:nowrap;line-height:1;">配置<span style="letter-spacing:0.5px">[config]</span></div>
<div class="a" style="left:2924.0px;top:1263.1px;width:257.0px;height:54.2px;background:#353535;"></div>
<div class="a" style="left:2924.0px;top:1315.7px;width:257.0px;height:1.6px;background:#2c2c2c;"></div>
<div class="a" style="left:2986.0px;top:1277.6px;font-size:23.5px;color:#c8c8c8;white-space:nowrap;line-height:1;">屏幕类<span style="letter-spacing:0.5px">[screen]</span></div>
<div class="a" style="left:2924.0px;top:1317.3px;width:257.0px;height:54.2px;background:#353535;"></div>
<div class="a" style="left:2924.0px;top:1369.9px;width:257.0px;height:1.6px;background:#2c2c2c;"></div>
<div class="a" style="left:2986.0px;top:1331.8px;font-size:23.5px;color:#c8c8c8;white-space:nowrap;line-height:1;">事件<span style="letter-spacing:0.5px">[event]</span></div>
<div class="a" style="left:2924.0px;top:1371.5px;width:257.0px;height:54.2px;background:#353535;"></div>
<div class="a" style="left:2924.0px;top:1424.1px;width:257.0px;height:1.6px;background:#2c2c2c;"></div>
<div class="a" style="left:2986.0px;top:1386.0px;font-size:23.5px;color:#c8c8c8;white-space:nowrap;line-height:1;">随机数<span style="letter-spacing:0.5px">[RJrxn1afZqW7yjr2]</span></div>
<div class="a" style="left:2924.0px;top:1425.7px;width:257.0px;height:54.2px;background:#353535;"></div>
<div class="a" style="left:2986.0px;top:1440.2px;font-size:23.5px;color:#c8c8c8;white-space:nowrap;line-height:1;">图色视觉<span style="letter-spacing:0.5px">[opencv]</span></div>
<div class="a" style="left:2924.0px;top:1477.5px;width:257.0px;height:261.5px;background:#2d2d2d;"></div>
<div class="a" style="left:2991.0px;top:1484.2px;font-size:23.5px;color:#c8c8c8;white-space:nowrap;line-height:1;"><span style="letter-spacing:0.5px">findImagesEx cv</span>文件找图</div>
<div class="a" style="left:2991.0px;top:1522.6px;font-size:23.5px;color:#c8c8c8;white-space:nowrap;line-height:1;"><span style="letter-spacing:0.5px">OCREx cv</span>文件<span style="letter-spacing:0.5px">OCR</span>识别</div>
<div class="a" style="left:2991.0px;top:1561.0px;font-size:23.5px;color:#c8c8c8;white-space:nowrap;line-height:1;"><span style="letter-spacing:0.5px">templateMatch </span>模板匹配</div>
<div class="a" style="left:2991.0px;top:1599.4px;font-size:23.5px;color:#c8c8c8;white-space:nowrap;line-height:1;"><span style="letter-spacing:0.5px">findImages </span>找多图</div>
<div class="a" style="left:2991.0px;top:1637.8px;font-size:23.5px;color:#c8c8c8;white-space:nowrap;line-height:1;"><span style="letter-spacing:0.5px">toGray </span>转灰度图</div>
<div class="a" style="left:2991.0px;top:1676.2px;font-size:23.5px;color:#c8c8c8;white-space:nowrap;line-height:1;"><span style="letter-spacing:0.5px">extractRegion </span>裁切区域</div>
<div class="a" style="left:2991.0px;top:1714.6px;font-size:23.5px;color:#c8c8c8;white-space:nowrap;line-height:1;"><span style="letter-spacing:0.5px">threshold </span>二值化</div>
<svg class="a" style="left:0;top:0" width="3181" height="1739" viewBox="0 0 3181 1739"><path d="M61.3,93.7 L82,93.7 L91.2,102.6 L91.2,127.9 Q91.2,129.4 89.7,129.4 L61.3,129.4 Q59.8,129.4 59.8,127.9 L59.8,95.2 Q59.8,93.7 61.3,93.7Z" fill="#ababab"/>
<g fill="#404040"><path d="M75.6,107.6 C73.6,106.3 71.5,106.3 70.2,107.3 C68.2,108.8 68,112.2 69.4,115.3 C70.4,117.5 71.8,119.3 73.2,119.2 C74.2,119.1 74.6,118.6 75.6,118.6 C76.6,118.6 77,119.1 78,119.2 C79.5,119.3 80.8,117.4 81.7,115.6 C82.1,114.8 82.3,114.4 82.5,113.8 C80.2,112.9 79.5,109.7 81.8,108.1 C80.6,106.5 78.6,106.2 77.4,106.9 C76.6,107.3 76.2,107.6 75.6,107.6Z"/>
<path d="M75.6,106.4 C75.6,104.6 76.9,103.1 78.5,102.7 C78.6,104.5 77.2,106.1 75.6,106.4Z"/></g>
<g fill="none" stroke="#ababab" stroke-width="2.4" stroke-linecap="round" stroke-linejoin="round">
<path d="M188.7,107.5 L186,107.5 Q180.2,107.5 180.2,113.3 L180.2,122.4 Q180.2,128.2 186,128.2 L210.4,128.2 Q216.2,128.2 216.2,122.4 L216.2,113.3 Q216.2,107.5 210.4,107.5 L207.5,107.5"/>
<path d="M197.9,112.6 L197.9,95"/><path d="M191.5,101.6 L197.9,95 L204.3,101.6"/>
<path d="M192.2,120.3 L203.8,120.3" stroke-linecap="butt"/></g>
<path d="M310,96.2 L333.2,111.2 L310,126.6 Z" fill="none" stroke="#b0b0b0" stroke-width="2.8" stroke-linejoin="round"/>
<rect x="429" y="97.4" width="28" height="28.3" rx="1.2" fill="none" stroke="#b0b0b0" stroke-width="2.5"/>
<circle cx="584.6" cy="111.4" r="17" fill="none" stroke="#c4c4c4" stroke-width="2.6"/>
<path d="M579.8,105.2 C579.8,101.8 582,99.9 584.9,99.9 C587.9,99.9 590,102 590,104.8 C590,107.5 588.2,108.6 586.7,110 C585.3,111.3 584.9,112.4 584.9,115.8" fill="none" stroke="#c4c4c4" stroke-width="2.7"/>
<rect x="583" y="117.8" width="3.8" height="3" fill="#c4c4c4"/>
<g transform="translate(685.7,90.1) scale(1.78)"><path fill="#b4b4b4" d="M22.2819 9.8211a5.9847 5.9847 0 0 0-.5157-4.9108 6.0462 6.0462 0 0 0-6.5098-2.9A6.0651 6.0651 0 0 0 4.9807 4.1818a5.9847 5.9847 0 0 0-3.9977 2.9 6.0462 6.0462 0 0 0 .7427 7.0966 5.98 5.98 0 0 0 .511 4.9107 6.051 6.051 0 0 0 6.5146 2.9001A5.9847 5.9847 0 0 0 13.2599 24a6.0557 6.0557 0 0 0 5.7718-4.2058 5.9894 5.9894 0 0 0 3.9977-2.9001 6.0557 6.0557 0 0 0-.7475-7.0729zm-9.022 12.6081a4.4755 4.4755 0 0 1-2.8764-1.0408l.1419-.0804 4.7783-2.7582a.7948.7948 0 0 0 .3927-.6813v-6.7369l2.02 1.1686a.071.071 0 0 1 .038.052v5.5826a4.504 4.504 0 0 1-4.4945 4.4944zm-9.6607-4.1254a4.4708 4.4708 0 0 1-.5346-3.0137l.142.0852 4.783 2.7582a.7712.7712 0 0 0 .7806 0l5.8428-3.3685v2.3324a.0804.0804 0 0 1-.0332.0615L9.74 19.9502a4.4992 4.4992 0 0 1-6.1408-1.6464zM2.3408 7.8956a4.485 4.485 0 0 1 2.3655-1.9728V11.6a.7664.7664 0 0 0 .3879.6765l5.8144 3.3543-2.0201 1.1685a.0757.0757 0 0 1-.071 0l-4.8303-2.7865A4.504 4.504 0 0 1 2.3408 7.872zm16.5963 3.8558L13.1038 8.364 15.1192 7.2a.0757.0757 0 0 1 .071 0l4.8303 2.7913a4.4944 4.4944 0 0 1-.6765 8.1042v-5.6772a.79.79 0 0 0-.407-.667zm2.0107-3.0231l-.142-.0852-4.7735-2.7818a.7759.7759 0 0 0-.7854 0L9.409 9.2297V6.8974a.0662.0662 0 0 1 .0284-.0615l4.8303-2.7866a4.4992 4.4992 0 0 1 6.6802 4.66zM8.3065 12.863l-2.02-1.1638a.0804.0804 0 0 1-.038-.0567V6.0742a4.4992 4.4992 0 0 1 7.3757-3.4537l-.142.0805L8.704 5.459a.7948.7948 0 0 0-.3927.6813zm1.0976-2.3654l2.602-1.4998 2.6069 1.4998v2.9994l-2.5974 1.4997-2.6067-1.4997Z"/></g>
<g fill="none" stroke="#ababab" stroke-width="3" stroke-linecap="round" stroke-linejoin="round">
<path d="M835.5,92 L840,92 Q845.6,92 845.6,97.6 L845.6,125.4 Q845.6,131 840,131 L819.6,131 Q814,131 814,125.4 L814,105 L827.3,92.2 L827.3,100.6 Q827.3,104.2 823.7,104.2 L815,104.2"/>
<path d="M823,114.1 L837.5,114.1"/><path d="M823,122.4 L837.5,122.4"/></g>
<g fill="none" stroke="#ababab" stroke-width="3" stroke-linecap="round" stroke-linejoin="round">
<path d="M951.9,92 L972.2,102.6 Q973.5,103.4 972.2,104.2 L951.9,114.6 L931.6,104.2 Q930.3,103.4 931.6,102.6 Z"/>
<path d="M973,104 L973,116"/><path d="M938.6,109 L938.6,121 Q938.6,130.3 951.9,130.3 Q965.9,130.3 965.9,121 L965.9,113.3"/></g>
<path d="M1074.3,94.1 L1113.6,94.1 L1093.9,128.1 Z" fill="#a0a0a0"/>
<path d="M1082.3,93.5 L1093.9,114.3 L1105.6,93.5" fill="none" stroke="#404040" stroke-width="1.3"/>
<path d="M1089.6,93.8 L1098.2,93.8 L1093.9,101.4 Z" fill="#404040"/>
<rect x="3.5" y="195.5" width="19.5" height="34" rx="3" fill="none" stroke="#3a9fd8" stroke-width="3"/>
<rect x="5" y="199.5" width="16.5" height="24" fill="#404040"/><rect x="5" y="223.5" width="16.5" height="5" fill="#3a9fd8"/><circle cx="13.2" cy="226" r="1.3" fill="#404040"/>

<path d="M167.0,201 L148.0,201 L148.0,227.5 L175.0,227.5 L175.0,205" fill="none" stroke="#a8a8a8" stroke-width="2"/>
<path d="M168.0,198.5 L170.5,200.8 L168.0,203 Z M171.5,198.5 L174.0,200.8 L171.5,203 Z" fill="#a8a8a8"/>
<text x="152.0" y="220" font-family="Liberation Sans" font-size="15" font-weight="bold" fill="#a8a8a8" letter-spacing="-0.5">1X</text>

<path d="M219.0,201 L200.0,201 L200.0,227.5 L227.0,227.5 L227.0,205" fill="none" stroke="#a8a8a8" stroke-width="2"/>
<path d="M220.0,198.5 L222.5,200.8 L220.0,203 Z M223.5,198.5 L226.0,200.8 L223.5,203 Z" fill="#a8a8a8"/>
<text x="204.0" y="220" font-family="Liberation Sans" font-size="15" font-weight="bold" fill="#a8a8a8" letter-spacing="-0.5">2X</text>
<g fill="none" stroke="#a8a8a8" stroke-width="3.4" stroke-linecap="round">
<path d="M-2,260.5 C3,259.2 8,259.2 12,259.3 C17.5,259.5 20.8,262.2 20.8,266.2 C20.8,271.2 17,276.6 10.5,276.6 L6.6,276.6"/>
<path d="M16.5,267.4 L10,267.4 C5,267.4 2.2,271 2.2,275.6 C2.2,280.6 6,284.3 12,284.3 L20,284.3 C25,284.3 28.3,281 28.3,276 C28.3,273.5 27.6,271.5 26.6,269.8"/></g>
<path d="M13,304.5 C21,304.5 26.7,309.5 26.7,316 C26.7,321.5 22.5,323.5 18.5,323.5 C15.5,323.5 13.5,325 13.5,328 C13.5,330.5 15.8,331.5 15.8,334 C15.8,336.8 13.5,338.5 10,338.5 C3,338.5 -3,331 -3,321.5 C-3,311.5 4,304.5 13,304.5Z" fill="#c0c0c0"/>
<g fill="#3e3e3e"><circle cx="4.3" cy="310.8" r="2.6"/><circle cx="13.9" cy="310.8" r="2.6"/><circle cx="19.7" cy="318.3" r="2.6"/><circle cx="0" cy="318.3" r="2.6"/></g>
<rect x="-2" y="357.5" width="31" height="35" fill="none" stroke="#c0c0c0" stroke-width="1.5"/>
<text x="0.5" y="375.5" font-family="Liberation Sans" font-weight="bold" font-size="14.5" fill="#a8a8a8">YO</text><text x="0.5" y="388.5" font-family="Liberation Sans" font-weight="bold" font-size="14.5" fill="#a8a8a8">LO</text>
<defs><clipPath id="clipbelow"><rect x="37" y="265.3" width="504" height="200"/></clipPath></defs>
<g clip-path="url(#clipbelow)"><circle cx="70.9" cy="272.4" r="19.9" fill="none" stroke="#c8102e" stroke-width="2.6"/><circle cx="70.9" cy="272.4" r="9.6" fill="#ff0000"/></g>
<g fill="#ffd6d2"><rect x="46.3" y="256.5" width="2.2" height="2.6"/><rect x="51" y="256.5" width="2.2" height="2.6"/><rect x="56" y="255" width="2.6" height="4.2"/><rect x="62" y="253.7" width="3" height="5.5"/><rect x="65.8" y="253.2" width="2.6" height="6"/></g>
<text x="74.5" y="259.5" font-family="Liberation Sans" font-size="16" fill="#fff">无服务</text>
<g fill="#fff"><path d="M129.3,251 Q139.1,242.5 149,251 L146.8,253.4 Q139.1,246.6 131.5,253.4Z"/><path d="M132.6,254.6 Q139.1,249.5 145.6,254.6 L143.4,256.9 Q139.1,253.6 134.8,256.9Z"/><path d="M136.1,258.2 Q139.1,255.8 142.1,258.2 L139.1,261.2Z"/></g>
<circle cx="263.4" cy="253" r="6" fill="none" stroke="#fff" stroke-width="2"/><circle cx="263.4" cy="253" r="2.6" fill="#fff"/>
<text x="276" y="259.8" font-family="Liberation Sans" font-size="18.5" font-weight="bold" fill="#fff">20:10</text>
<rect x="503" y="246.5" width="26" height="13.5" rx="3.5" fill="none" stroke="#ff8f86" stroke-width="1.2"/><rect x="505.5" y="249" width="19" height="8.5" rx="1.5" fill="#5fbf48"/><rect x="515" y="249" width="9.5" height="8.5" fill="#8b8f40"/><rect x="530" y="250.5" width="1.5" height="5" fill="#ff8f86"/>
<path d="M519.5,244 L511.5,254.2 L516.3,254.2 L513.5,262.5 L522,251.5 L517.3,251.5 Z" fill="#fff"/>
<path d="M486.5,895.6 L494,903.6 L486.5,911.6" fill="none" stroke="#b5b5b5" stroke-width="2.2" stroke-linecap="round" stroke-linejoin="round"/>
<path d="M486.5,955.0 L494,963.0 L486.5,971.0" fill="none" stroke="#b5b5b5" stroke-width="2.2" stroke-linecap="round" stroke-linejoin="round"/>
<path d="M486.5,1016.4 L494,1024.4 L486.5,1032.4" fill="none" stroke="#b5b5b5" stroke-width="2.2" stroke-linecap="round" stroke-linejoin="round"/>
<g fill="#929292"><path d="M113.2,1085.6 L123,1077.4" stroke="#929292" stroke-width="9" stroke-linecap="round"/><path d="M108.8,1093.5 C108.8,1089.5 111.5,1087.6 114.5,1088.3 C116.5,1088.8 117.5,1090.6 117,1092.3 L126.5,1088.4 L132.6,1095.5 C133.8,1097 133.6,1098.8 132.3,1100.2 L121.8,1110.3 L110.3,1097.2 C109.3,1096 108.8,1094.8 108.8,1093.5Z"/><circle cx="116.3" cy="1109.8" r="3.8"/></g>
<rect x="113.8" y="1086.4" width="2.2" height="2.2" fill="#f7f7f7" transform="rotate(-40 115 1087.5)"/>
<g fill="#929292"><path d="M270.6,1107.4 L270.6,1085.5 Q270.6,1080.2 276,1080.2 L282.3,1080.2 Q287.7,1080.2 287.7,1085.5 L287.7,1107.4 Q279.2,1102.8 270.6,1107.4Z"/><path d="M289.3,1107.4 L289.3,1085.5 Q289.3,1080.2 294.7,1080.2 L300.5,1080.2 Q305.9,1080.2 305.9,1085.5 L305.9,1107.4 Q297.6,1102.8 289.3,1107.4Z"/></g>
<path d="M467.40,1089.30 L471.80,1090.10 L471.80,1097.30 L467.40,1098.10 L467.09,1098.86 L469.63,1102.54 L464.54,1107.63 L460.86,1105.09 L460.10,1105.40 L459.30,1109.80 L452.10,1109.80 L451.30,1105.40 L450.54,1105.09 L446.86,1107.63 L441.77,1102.54 L444.31,1098.86 L444.00,1098.10 L439.60,1097.30 L439.60,1090.10 L444.00,1089.30 L444.31,1088.54 L441.77,1084.86 L446.86,1079.77 L450.54,1082.31 L451.30,1082.00 L452.10,1077.60 L459.30,1077.60 L460.10,1082.00 L460.86,1082.31 L464.54,1079.77 L469.63,1084.86 L467.09,1088.54Z" fill="#1a7cf7"/><circle cx="455.7" cy="1093.7" r="12.6" fill="#1a7cf7"/><circle cx="455.7" cy="1093.7" r="5.3" fill="#f7f7f7"/>
<g fill="none" stroke="#b8b8b8" stroke-width="2"><path d="M180.8,1160.2 L206.2,1145 L206.2,1175.8 Z" stroke-linejoin="round"/><circle cx="290.4" cy="1160.2" r="17"/><rect x="361.8" y="1144.7" width="32.6" height="32.1" rx="1.5"/></g>
<rect x="49.7" y="1198.8" width="33.3" height="37.2" fill="#dedede"/>
<g fill="#404040"><rect x="45.5" y="1202" width="8" height="2.2"/><rect x="45.5" y="1207.5" width="8" height="2.2"/><rect x="45.5" y="1213" width="8" height="2.2"/><rect x="45.5" y="1218.5" width="8" height="2.2"/><rect x="45.5" y="1224" width="8" height="2.2"/><rect x="45.5" y="1229.5" width="8" height="2.2"/></g>
<g fill="#dedede"><rect x="46" y="1204.2" width="7" height="3.3"/><rect x="46" y="1209.7" width="7" height="3.3"/><rect x="46" y="1215.2" width="7" height="3.3"/><rect x="46" y="1220.7" width="7" height="3.3"/><rect x="46" y="1226.2" width="7" height="3.3"/></g>
<path d="M75.17,1214.57 L77.42,1214.81 L77.42,1217.99 L75.17,1218.23 L75.04,1218.55 L76.46,1220.31 L74.21,1222.56 L72.45,1221.14 L72.13,1221.27 L71.89,1223.52 L68.71,1223.52 L68.47,1221.27 L68.15,1221.14 L66.39,1222.56 L64.14,1220.31 L65.56,1218.55 L65.43,1218.23 L63.18,1217.99 L63.18,1214.81 L65.43,1214.57 L65.56,1214.25 L64.14,1212.49 L66.39,1210.24 L68.15,1211.66 L68.47,1211.53 L68.71,1209.28 L71.89,1209.28 L72.13,1211.53 L72.45,1211.66 L74.21,1210.24 L76.46,1212.49 L75.04,1214.25Z" fill="#404040"/><circle cx="70.3" cy="1216.4" r="2.6" fill="#dedede"/>
<g fill="none" stroke="#d0d0d0" stroke-width="2.2" transform="translate(498.7,1196.8) scale(1.000)"><path d="M12,1.5 L3,1.5 Q1.2,1.5 1.2,3.3 L1.2,25.6 Q1.2,27.4 3,27.4 L25.4,27.4 Q27.2,27.4 27.2,25.6 L27.2,16.5"/><rect x="19" y="1.2" width="8.2" height="8.2" rx="1.5"/><path d="M5.5,23 L16.5,12 M9.5,12 L16.5,12 L16.5,19"/></g>
<g transform="translate(559.0,204.0)"><path d="M1.2,9.5 L1.2,1.2 L17,1.2 L22.5,6.5 L22.5,22.3 L15.5,22.3" fill="none" stroke="#2ea6de" stroke-width="2.4"/><text x="-0.5" y="22.5" font-family="Liberation Sans" font-weight="bold" font-size="15.5" fill="#2ea6de" letter-spacing="-1">JS</text></g>
<g transform="translate(705.0,202.0)"><path d="M1.2,9.5 L1.2,1.2 L17,1.2 L22.5,6.5 L22.5,22.3 L15.5,22.3" fill="none" stroke="#2ea6de" stroke-width="2.4"/><text x="-0.5" y="22.5" font-family="Liberation Sans" font-weight="bold" font-size="15.5" fill="#2ea6de" letter-spacing="-1">JS</text></g>
<path d="M672,209 L689,226 M689,209 L672,226" stroke="#9a9a9a" stroke-width="1.6"/>
<path d="M822,207 L839,224 M839,207 L822,224" stroke="#8e8e8e" stroke-width="1.6"/>
<g fill="none" stroke="#9e9e9e" stroke-width="1.9">
<rect x="577.5" y="246" width="28.6" height="28.6" rx="0.8"/><path d="M582.5,260.4 L601.1,260.4 M591.8,251 L591.8,269.7"/></g>
<g fill="none" stroke="#9e9e9e" stroke-width="2.6" stroke-linejoin="round">
<rect x="646.1" y="248.5" width="14.3" height="4.5" rx="0.8"/><path d="M644.5,266 L641.4,266 L641.4,256.3 Q641.4,254.6 643,254.6 L663.3,254.6 Q664.9,254.6 664.9,256.3 L664.9,266 L661.7,266"/><rect x="645.5" y="258.8" width="15" height="13.2" rx="0.8"/></g>
<path d="M714,245 L704.8,275.7" stroke="#9e9e9e" stroke-width="2.6" stroke-linecap="round"/>
<g stroke="#9e9e9e" stroke-width="2.3" stroke-linecap="round"><path d="M720.3,256.6 L720.3,268.2 M715.3,259.5 L725.3,265.3 M715.3,265.3 L725.3,259.5"/></g>
<g fill="none" stroke="#9e9e9e" stroke-width="2.6" stroke-linecap="round" stroke-linejoin="round"><path d="M763.5,253.4 L778,253.4 Q787,253.4 787,262.2 Q787,270.9 778,270.9 L765,270.9"/><path d="M769.4,247.6 L763.3,253.4 L769.4,259.2"/></g>
<g fill="#9e9e9e"><rect x="823.5" y="247.2" width="26.2" height="2.6"/><rect x="835.8" y="253.4" width="13.9" height="2.6"/><rect x="835.8" y="258.8" width="13.9" height="2.6"/><rect x="835.8" y="265" width="13.9" height="2.6"/><rect x="823.5" y="270.2" width="26.2" height="2.6"/><path d="M823,260 L829.4,254 L829.4,265.6Z"/></g>
<g fill="#9e9e9e"><rect x="885" y="247.4" width="26.1" height="2.6"/><rect x="896.9" y="253.1" width="14.2" height="2.6"/><rect x="896.9" y="259" width="14.2" height="2.6"/><rect x="896.9" y="264.8" width="14.2" height="2.6"/><rect x="885" y="270.8" width="26.1" height="2.6"/><path d="M885,255.4 L890.2,260.6 L885,265.9Z"/></g>
<g fill="#9e9e9e"><rect x="944.9" y="247.6" width="27" height="2.6"/><rect x="944.9" y="253.4" width="17.2" height="2.6"/><rect x="944.9" y="259.2" width="12" height="2.6"/><rect x="944.9" y="265" width="9" height="2.6"/></g>
<g transform="translate(965.6,265.9) rotate(-42)"><rect x="-7.5" y="-5" width="15" height="10" rx="1.5" fill="#404040" stroke="#9e9e9e" stroke-width="2.4"/><path d="M-1.5,-5 L-1.5,5" stroke="#9e9e9e" stroke-width="2.4"/></g>
<path d="M1010.8,246.8 L1032,260.5 L1010.8,274.2 Z" fill="none" stroke="#9e9e9e" stroke-width="2.4" stroke-linejoin="round"/>
<path d="M1072.5,245.6 L1090.7,245.6" stroke="#9e9e9e" stroke-width="2.4"/>
<path d="M1077.5,246 L1077.5,256.5 L1067.5,272.5 Q1065.8,276.8 1070.2,276.8 L1093.8,276.8 Q1098.2,276.8 1096.5,272.5 L1086.5,256.5 L1086.5,246" fill="none" stroke="#9e9e9e" stroke-width="2.4" stroke-linejoin="round"/>
<path d="M1072.2,264.5 Q1077,260 1082,263.5 Q1087,267 1091.8,264.5 L1096.5,272.5 Q1098.2,276.8 1093.8,276.8 L1070.2,276.8 Q1065.8,276.8 1067.5,272.5Z" fill="#9e9e9e"/>
<g fill="none" stroke="#9e9e9e" stroke-width="1.6"><path d="M1131.5,249.5 L1129.6,249.5 L1129.6,274.5 L1131.5,274.5"/><path d="M1158.2,249.5 L1160.1,249.5 L1160.1,274.5 L1158.2,274.5"/><path d="M1139,253 L1151,270 M1151,253 L1139,270"/></g>
<g fill="#9e9e9e"><rect x="1138.5" y="271" width="2.2" height="2.2"/><rect x="1143.8" y="271" width="2.2" height="2.2"/><rect x="1149" y="271" width="2.2" height="2.2"/></g>
<g fill="none" stroke="#9e9e9e" stroke-width="2.4" stroke-linejoin="round"><path d="M1191.3,250.5 L1220.6,250.5"/><path d="M1199.5,250 L1199.5,246.8 L1211.2,246.8 L1211.2,250"/><path d="M1194.6,250.5 L1194.6,273.5 Q1194.6,275.4 1196.5,275.4 L1214.2,275.4 Q1216.1,275.4 1216.1,273.5 L1216.1,250.5"/></g>
<g fill="none" stroke="#9e9e9e" stroke-width="1.8"><path d="M1199.5,262 A6,6 0 0 1 1210.8,259.5"/><path d="M1211.1,264 A6,6 0 0 1 1199.8,266.5"/></g><path d="M1212.5,256 L1211.8,261.8 L1207.2,259.5Z M1198.1,270 L1198.8,264.2 L1203.4,266.5Z" fill="#9e9e9e"/>
<rect x="566" y="1568.9" width="32" height="32.6" rx="3.5" fill="#e6e6e6"/>
<g fill="#404040"><rect x="571.5" y="1575" width="2.6" height="2.4"/><rect x="576" y="1575" width="15" height="2.4"/><rect x="571.5" y="1581.5" width="2.6" height="2.4"/><rect x="576" y="1581.5" width="15" height="2.4"/></g>
<path d="M926.8,1579.6 L944.5,1579.6 L935.6,1589.6Z" fill="#c0c0c0"/>
<g fill="none" stroke="#2f9ad8" stroke-width="2.4" stroke-linejoin="round" stroke-linecap="round"><path d="M1008.5,1583 L1008.5,1571.5 Q1008.5,1568.8 1011.6,1568.8 Q1014.7,1568.8 1014.7,1571.5 L1014.7,1583"/><path d="M1000.5,1590 Q1000.5,1583 1007,1583 L1016.2,1583 Q1022.8,1583 1022.8,1590 Z"/><path d="M1000.5,1590 L998.5,1600.5 L1025,1600.5 L1022.8,1590"/><path d="M1006,1594 L1005,1600.5 M1011.6,1594 L1011.6,1600.5 M1017,1594 L1018,1600.5"/></g>
<g fill="none" stroke="#d0d0d0" stroke-width="2.2" transform="translate(1062.4,1573.1) scale(1.000)"><path d="M12,1.5 L3,1.5 Q1.2,1.5 1.2,3.3 L1.2,25.6 Q1.2,27.4 3,27.4 L25.4,27.4 Q27.2,27.4 27.2,25.6 L27.2,16.5"/><rect x="19" y="1.2" width="8.2" height="8.2" rx="1.5"/><path d="M5.5,23 L16.5,12 M9.5,12 L16.5,12 L16.5,19"/></g>
<circle cx="2949.1" cy="261" r="7.6" fill="none" stroke="#d0d0d0" stroke-width="2.2"/><path d="M2954.6,266.5 L2959.5,271.5" stroke="#d0d0d0" stroke-width="2.6" stroke-linecap="round"/><path d="M2949.2,305.3 L2966,313.6 L2949.2,321.9 Z" fill="#bdbdbd"/><path d="M2949.2,359.5 L2966,367.8 L2949.2,376.1 Z" fill="#bdbdbd"/><path d="M2949.2,413.7 L2966,422.0 L2949.2,430.3 Z" fill="#bdbdbd"/><path d="M2949.2,467.9 L2966,476.2 L2949.2,484.5 Z" fill="#bdbdbd"/><path d="M2949.2,522.1 L2966,530.4 L2949.2,538.7 Z" fill="#bdbdbd"/><path d="M2949.2,576.3 L2966,584.6 L2949.2,592.9 Z" fill="#bdbdbd"/><path d="M2949.2,630.5 L2966,638.8 L2949.2,647.1 Z" fill="#bdbdbd"/><path d="M2949.2,684.7 L2966,693.0 L2949.2,701.3 Z" fill="#bdbdbd"/><path d="M2949.2,738.9 L2966,747.2 L2949.2,755.5 Z" fill="#bdbdbd"/><path d="M2949.2,793.1 L2966,801.4 L2949.2,809.7 Z" fill="#bdbdbd"/><path d="M2949.2,847.3 L2966,855.6 L2949.2,863.9 Z" fill="#bdbdbd"/><path d="M2949.2,901.5 L2966,909.8 L2949.2,918.1 Z" fill="#bdbdbd"/><path d="M2949.2,955.7 L2966,964.0 L2949.2,972.3 Z" fill="#bdbdbd"/><path d="M2949.2,1009.9 L2966,1018.2 L2949.2,1026.5 Z" fill="#bdbdbd"/><path d="M2949.2,1064.1 L2966,1072.4 L2949.2,1080.7 Z" fill="#bdbdbd"/><path d="M2949.2,1118.3 L2966,1126.6 L2949.2,1134.9 Z" fill="#bdbdbd"/><path d="M2949.2,1172.5 L2966,1180.8 L2949.2,1189.1 Z" fill="#bdbdbd"/><path d="M2949.2,1226.7 L2966,1235.0 L2949.2,1243.3 Z" fill="#bdbdbd"/><path d="M2949.2,1280.9 L2966,1289.2 L2949.2,1297.5 Z" fill="#bdbdbd"/><path d="M2949.2,1335.1 L2966,1343.4 L2949.2,1351.7 Z" fill="#bdbdbd"/><path d="M2949.2,1389.3 L2966,1397.6 L2949.2,1405.9 Z" fill="#bdbdbd"/><path d="M2949.2,1443.5 L2966,1443.5 L2957.6,1460.1 Z" fill="#bdbdbd"/><g opacity="0.5"><rect x="2776.0" y="287.0" width="2.0" height="1.1" fill="#6a9955"/><rect x="2779.0" y="287.0" width="3.0" height="1.1" fill="#6a9955"/><rect x="2783.0" y="287.0" width="8.0" height="1.1" fill="#6a9955"/><rect x="2792.0" y="287.0" width="4.0" height="1.1" fill="#6a9955"/><rect x="2797.0" y="287.0" width="3.0" height="1.1" fill="#6a9955"/><rect x="2776.0" y="291.0" width="2.0" height="1.1" fill="#6a9955"/><rect x="2776.0" y="293.0" width="6.0" height="1.1" fill="#6a9955"/><rect x="2783.0" y="293.0" width="2.0" height="1.1" fill="#6a9955"/><rect x="2786.0" y="293.0" width="2.0" height="1.1" fill="#6a9955"/><rect x="2789.0" y="293.0" width="9.0" height="1.1" fill="#6a9955"/><rect x="2799.0" y="293.0" width="27.0" height="1.1" fill="#6a9955"/><rect x="2776.0" y="295.0" width="8.0" height="1.1" fill="#6a9955"/><rect x="2785.0" y="295.0" width="16.0" height="1.1" fill="#6a9955"/><rect x="2776.0" y="297.0" width="2.0" height="1.1" fill="#6a9955"/><rect x="2776.0" y="301.0" width="10.0" height="1.1" fill="#6a9955"/><rect x="2787.0" y="301.0" width="2.0" height="1.1" fill="#6a9955"/><rect x="2790.0" y="301.0" width="8.0" height="1.1" fill="#6a9955"/><rect x="2799.0" y="301.0" width="8.0" height="1.1" fill="#6a9955"/><rect x="2776.0" y="305.0" width="2.0" height="1.1" fill="#6a9955"/><rect x="2779.0" y="305.0" width="26.0" height="1.1" fill="#6a9955"/><rect x="2806.0" y="305.0" width="1.0" height="1.1" fill="#6a9955"/><rect x="2808.0" y="305.0" width="28.0" height="1.1" fill="#6a9955"/><rect x="2776.0" y="307.0" width="2.0" height="1.1" fill="#6a9955"/><rect x="2776.0" y="309.0" width="4.0" height="1.1" fill="#6a9955"/><rect x="2781.0" y="309.0" width="8.0" height="1.1" fill="#6a9955"/><rect x="2776.0" y="311.0" width="8.0" height="1.1" fill="#6a9955"/><rect x="2785.0" y="311.0" width="48.0" height="1.1" fill="#6a9955"/><rect x="2776.0" y="313.0" width="8.0" height="1.1" fill="#6a9955"/><rect x="2785.0" y="313.0" width="8.0" height="1.1" fill="#6a9955"/><rect x="2794.0" y="313.0" width="19.0" height="1.1" fill="#6a9955"/><rect x="2814.0" y="313.0" width="7.0" height="1.1" fill="#6a9955"/><rect x="2822.0" y="313.0" width="7.0" height="1.1" fill="#6a9955"/><rect x="2776.0" y="315.0" width="6.0" height="1.1" fill="#6a9955"/><rect x="2783.0" y="315.0" width="60.0" height="1.1" fill="#6a9955"/><rect x="2776.0" y="317.0" width="4.0" height="1.1" fill="#6a9955"/><rect x="2781.0" y="317.0" width="1.0" height="1.1" fill="#6a9955"/><rect x="2783.0" y="317.0" width="6.0" height="1.1" fill="#6a9955"/><rect x="2790.0" y="317.0" width="28.0" height="1.1" fill="#6a9955"/><rect x="2776.0" y="319.0" width="2.0" height="1.1" fill="#6a9955"/><rect x="2776.0" y="321.0" width="2.0" height="1.1" fill="#6a9955"/><rect x="2779.0" y="321.0" width="20.0" height="1.1" fill="#6a9955"/><rect x="2776.0" y="323.0" width="8.0" height="1.1" fill="#569cd6"/><rect x="2785.0" y="323.0" width="19.0" height="1.1" fill="#d4d4d4"/><rect x="2804.0" y="323.0" width="1.0" height="1.1" fill="#ffd700"/><rect x="2805.0" y="323.0" width="1.0" height="1.1" fill="#ffd700"/><rect x="2807.0" y="323.0" width="1.0" height="1.1" fill="#ffd700"/><rect x="2780.0" y="325.0" width="6.0" height="1.1" fill="#d4d4d4"/><rect x="2786.0" y="325.0" width="1.0" height="1.1" fill="#da70d6"/><rect x="2787.0" y="325.0" width="4.0" height="1.1" fill="#ce9178"/><rect x="2792.0" y="325.0" width="12.0" height="1.1" fill="#ce9178"/><rect x="2805.0" y="325.0" width="8.0" height="1.1" fill="#ce9178"/><rect x="2814.0" y="325.0" width="4.0" height="1.1" fill="#ce9178"/><rect x="2818.0" y="325.0" width="1.0" height="1.1" fill="#da70d6"/><rect x="2819.0" y="325.0" width="1.0" height="1.1" fill="#d4d4d4"/><rect x="2780.0" y="327.0" width="3.0" height="1.1" fill="#569cd6"/><rect x="2784.0" y="327.0" width="1.0" height="1.1" fill="#da70d6"/><rect x="2784.0" y="329.0" width="2.0" height="1.1" fill="#6a9955"/><rect x="2787.0" y="329.0" width="18.0" height="1.1" fill="#6a9955"/><rect x="2784.0" y="331.0" width="3.0" height="1.1" fill="#569cd6"/><rect x="2788.0" y="331.0" width="11.0" height="1.1" fill="#d4d4d4"/><rect x="2800.0" y="331.0" width="1.0" height="1.1" fill="#d4d4d4"/><rect x="2802.0" y="331.0" width="6.0" height="1.1" fill="#d4d4d4"/><rect x="2808.0" y="331.0" width="1.0" height="1.1" fill="#d4d4d4"/><rect x="2809.0" y="331.0" width="12.0" height="1.1" fill="#d4d4d4"/><rect x="2821.0" y="331.0" width="1.0" height="1.1" fill="#179fff"/><rect x="2822.0" y="331.0" width="15.0" height="1.1" fill="#ce9178"/><rect x="2837.0" y="331.0" width="1.0" height="1.1" fill="#179fff"/><rect x="2838.0" y="331.0" width="1.0" height="1.1" fill="#d4d4d4"/><rect x="2784.0" y="333.0" width="6.0" height="1.1" fill="#d4d4d4"/><rect x="2790.0" y="333.0" width="1.0" height="1.1" fill="#179fff"/><rect x="2791.0" y="333.0" width="18.0" height="1.1" fill="#ce9178"/><rect x="2809.0" y="333.0" width="1.0" height="1.1" fill="#d4d4d4"/><rect x="2811.0" y="333.0" width="11.0" height="1.1" fill="#d4d4d4"/><rect x="2822.0" y="333.0" width="1.0" height="1.1" fill="#179fff"/><rect x="2823.0" y="333.0" width="1.0" height="1.1" fill="#d4d4d4"/><rect x="2784.0" y="337.0" width="2.0" height="1.1" fill="#569cd6"/><rect x="2787.0" y="337.0" width="1.0" height="1.1" fill="#179fff"/><rect x="2788.0" y="337.0" width="11.0" height="1.1" fill="#d4d4d4"/><rect x="2800.0" y="337.0" width="1.0" height="1.1" fill="#d4d4d4"/><rect x="2801.0" y="337.0" width="1.0" height="1.1" fill="#d4d4d4"/><rect x="2803.0" y="337.0" width="11.0" height="1.1" fill="#d4d4d4"/><rect x="2814.0" y="337.0" width="1.0" height="1.1" fill="#d4d4d4"/><rect x="2815.0" y="337.0" width="6.0" height="1.1" fill="#d4d4d4"/><rect x="2822.0" y="337.0" width="1.0" height="1.1" fill="#d4d4d4"/><rect x="2824.0" y="337.0" width="1.0" height="1.1" fill="#b5cea8"/><rect x="2825.0" y="337.0" width="1.0" height="1.1" fill="#179fff"/><rect x="2827.0" y="337.0" width="1.0" height="1.1" fill="#179fff"/><rect x="2788.0" y="339.0" width="6.0" height="1.1" fill="#d4d4d4"/><rect x="2794.0" y="339.0" width="1.0" height="1.1" fill="#ffd700"/><rect x="2795.0" y="339.0" width="5.0" height="1.1" fill="#ce9178"/><rect x="2801.0" y="339.0" width="1.0" height="1.1" fill="#ce9178"/><rect x="2803.0" y="339.0" width="1.0" height="1.1" fill="#d4d4d4"/><rect x="2805.0" y="339.0" width="11.0" height="1.1" fill="#d4d4d4"/><rect x="2816.0" y="339.0" width="1.0" height="1.1" fill="#d4d4d4"/><rect x="2817.0" y="339.0" width="6.0" height="1.1" fill="#d4d4d4"/><rect x="2824.0" y="339.0" width="1.0" height="1.1" fill="#d4d4d4"/><rect x="2826.0" y="339.0" width="1.0" height="1.1" fill="#ce9178"/><rect x="2828.0" y="339.0" width="11.0" height="1.1" fill="#ce9178"/><rect x="2839.0" y="339.0" width="1.0" height="1.1" fill="#ffd700"/><rect x="2840.0" y="339.0" width="1.0" height="1.1" fill="#d4d4d4"/><rect x="2788.0" y="341.0" width="3.0" height="1.1" fill="#569cd6"/><rect x="2792.0" y="341.0" width="1.0" height="1.1" fill="#ffd700"/><rect x="2793.0" y="341.0" width="3.0" height="1.1" fill="#569cd6"/><rect x="2797.0" y="341.0" width="1.0" height="1.1" fill="#d4d4d4"/><rect x="2799.0" y="341.0" width="1.0" height="1.1" fill="#d4d4d4"/><rect x="2801.0" y="341.0" width="1.0" height="1.1" fill="#b5cea8"/><rect x="2802.0" y="341.0" width="1.0" height="1.1" fill="#d4d4d4"/><rect x="2804.0" y="341.0" width="1.0" height="1.1" fill="#d4d4d4"/><rect x="2806.0" y="341.0" width="1.0" height="1.1" fill="#d4d4d4"/><rect x="2808.0" y="341.0" width="11.0" height="1.1" fill="#d4d4d4"/><rect x="2819.0" y="341.0" width="1.0" height="1.1" fill="#d4d4d4"/><rect x="2820.0" y="341.0" width="6.0" height="1.1" fill="#d4d4d4"/><rect x="2826.0" y="341.0" width="1.0" height="1.1" fill="#d4d4d4"/><rect x="2828.0" y="341.0" width="1.0" height="1.1" fill="#d4d4d4"/><rect x="2829.0" y="341.0" width="1.0" height="1.1" fill="#d4d4d4"/><rect x="2830.0" y="341.0" width="1.0" height="1.1" fill="#d4d4d4"/><rect x="2831.0" y="341.0" width="1.0" height="1.1" fill="#ffd700"/><rect x="2833.0" y="341.0" width="1.0" height="1.1" fill="#ffd700"/><rect x="2792.0" y="343.0" width="3.0" height="1.1" fill="#569cd6"/><rect x="2796.0" y="343.0" width="6.0" height="1.1" fill="#d4d4d4"/><rect x="2803.0" y="343.0" width="1.0" height="1.1" fill="#d4d4d4"/><rect x="2805.0" y="343.0" width="11.0" height="1.1" fill="#d4d4d4"/><rect x="2816.0" y="343.0" width="1.0" height="1.1" fill="#da70d6"/><rect x="2817.0" y="343.0" width="1.0" height="1.1" fill="#d4d4d4"/><rect x="2818.0" y="343.0" width="1.0" height="1.1" fill="#da70d6"/><rect x="2819.0" y="343.0" width="1.0" height="1.1" fill="#d4d4d4"/><rect x="2792.0" y="345.0" width="6.0" height="1.1" fill="#d4d4d4"/><rect x="2798.0" y="345.0" width="1.0" height="1.1" fill="#da70d6"/><rect x="2799.0" y="345.0" width="1.0" height="1.1" fill="#ce9178"/><rect x="2802.0" y="345.0" width="5.0" height="1.1" fill="#ce9178"/><rect x="2808.0" y="345.0" width="1.0" height="1.1" fill="#d4d4d4"/><rect x="2810.0" y="345.0" width="1.0" height="1.1" fill="#179fff"/><rect x="2811.0" y="345.0" width="1.0" height="1.1" fill="#d4d4d4"/><rect x="2812.0" y="345.0" width="1.0" height="1.1" fill="#d4d4d4"/><rect x="2813.0" y="345.0" width="1.0" height="1.1" fill="#b5cea8"/><rect x="2814.0" y="345.0" width="1.0" height="1.1" fill="#179fff"/><rect x="2816.0" y="345.0" width="1.0" height="1.1" fill="#d4d4d4"/><rect x="2818.0" y="345.0" width="11.0" height="1.1" fill="#ce9178"/><rect x="2830.0" y="345.0" width="1.0" height="1.1" fill="#d4d4d4"/><rect x="2832.0" y="345.0" width="6.0" height="1.1" fill="#d4d4d4"/><rect x="2838.0" y="345.0" width="1.0" height="1.1" fill="#d4d4d4"/><rect x="2839.0" y="345.0" width="5.0" height="1.1" fill="#d4d4d4"/><rect x="2844.0" y="345.0" width="1.0" height="1.1" fill="#179fff"/><rect x="2845.0" y="345.0" width="1.0" height="1.1" fill="#179fff"/><rect x="2847.0" y="345.0" width="1.0" height="1.1" fill="#d4d4d4"/><rect x="2849.0" y="345.0" width="2.0" height="1.1" fill="#ce9178"/><rect x="2852.0" y="345.0" width="6.0" height="1.1" fill="#ce9178"/><rect x="2859.0" y="345.0" width="1.0" height="1.1" fill="#d4d4d4"/><rect x="2861.0" y="345.0" width="6.0" height="1.1" fill="#d4d4d4"/><rect x="2867.0" y="345.0" width="1.0" height="1.1" fill="#d4d4d4"/><rect x="2868.0" y="345.0" width="7.0" height="1.1" fill="#d4d4d4"/><rect x="2875.0" y="345.0" width="1.0" height="1.1" fill="#179fff"/><rect x="2876.0" y="345.0" width="1.0" height="1.1" fill="#179fff"/><rect x="2877.0" y="345.0" width="1.0" height="1.1" fill="#d4d4d4"/><rect x="2878.0" y="345.0" width="8.0" height="1.1" fill="#d4d4d4"/><rect x="2886.0" y="345.0" width="1.0" height="1.1" fill="#179fff"/><rect x="2788.0" y="347.0" width="1.0" height="1.1" fill="#ffd700"/><rect x="2784.0" y="349.0" width="1.0" height="1.1" fill="#179fff"/><rect x="2786.0" y="349.0" width="4.0" height="1.1" fill="#569cd6"/><rect x="2791.0" y="349.0" width="1.0" height="1.1" fill="#179fff"/><rect x="2788.0" y="351.0" width="6.0" height="1.1" fill="#d4d4d4"/><rect x="2794.0" y="351.0" width="1.0" height="1.1" fill="#ffd700"/><rect x="2795.0" y="351.0" width="16.0" height="1.1" fill="#ce9178"/><rect x="2811.0" y="351.0" width="1.0" height="1.1" fill="#ffd700"/><rect x="2812.0" y="351.0" width="1.0" height="1.1" fill="#d4d4d4"/><rect x="2784.0" y="353.0" width="1.0" height="1.1" fill="#179fff"/><rect x="2780.0" y="355.0" width="1.0" height="1.1" fill="#da70d6"/><rect x="2782.0" y="355.0" width="5.0" height="1.1" fill="#569cd6"/><rect x="2788.0" y="355.0" width="1.0" height="1.1" fill="#da70d6"/><rect x="2789.0" y="355.0" width="5.0" height="1.1" fill="#d4d4d4"/><rect x="2794.0" y="355.0" width="1.0" height="1.1" fill="#da70d6"/><rect x="2796.0" y="355.0" width="1.0" height="1.1" fill="#da70d6"/><rect x="2784.0" y="357.0" width="6.0" height="1.1" fill="#d4d4d4"/><rect x="2790.0" y="357.0" width="1.0" height="1.1" fill="#179fff"/><rect x="2791.0" y="357.0" width="24.0" height="1.1" fill="#ce9178"/><rect x="2816.0" y="357.0" width="1.0" height="1.1" fill="#d4d4d4"/><rect x="2818.0" y="357.0" width="5.0" height="1.1" fill="#d4d4d4"/><rect x="2823.0" y="357.0" width="1.0" height="1.1" fill="#d4d4d4"/><rect x="2824.0" y="357.0" width="7.0" height="1.1" fill="#d4d4d4"/><rect x="2831.0" y="357.0" width="1.0" height="1.1" fill="#179fff"/><rect x="2832.0" y="357.0" width="1.0" height="1.1" fill="#d4d4d4"/><rect x="2780.0" y="359.0" width="1.0" height="1.1" fill="#da70d6"/><rect x="2776.0" y="361.0" width="1.0" height="1.1" fill="#ffd700"/><rect x="2776.0" y="365.0" width="19.0" height="1.1" fill="#d4d4d4"/><rect x="2795.0" y="365.0" width="1.0" height="1.1" fill="#ffd700"/><rect x="2796.0" y="365.0" width="1.0" height="1.1" fill="#ffd700"/><rect x="2797.0" y="365.0" width="1.0" height="1.1" fill="#d4d4d4"/><rect x="2776.0" y="371.0" width="2.0" height="1.1" fill="#6a9955"/><rect x="2779.0" y="371.0" width="26.0" height="1.1" fill="#6a9955"/><rect x="2806.0" y="371.0" width="1.0" height="1.1" fill="#6a9955"/><rect x="2808.0" y="371.0" width="28.0" height="1.1" fill="#6a9955"/><rect x="2776.0" y="373.0" width="2.0" height="1.1" fill="#6a9955"/><rect x="2776.0" y="375.0" width="4.0" height="1.1" fill="#6a9955"/><rect x="2781.0" y="375.0" width="8.0" height="1.1" fill="#6a9955"/><rect x="2776.0" y="377.0" width="8.0" height="1.1" fill="#6a9955"/><rect x="2785.0" y="377.0" width="48.0" height="1.1" fill="#6a9955"/><rect x="2776.0" y="379.0" width="8.0" height="1.1" fill="#6a9955"/><rect x="2785.0" y="379.0" width="8.0" height="1.1" fill="#6a9955"/><rect x="2794.0" y="379.0" width="19.0" height="1.1" fill="#6a9955"/><rect x="2814.0" y="379.0" width="7.0" height="1.1" fill="#6a9955"/><rect x="2822.0" y="379.0" width="7.0" height="1.1" fill="#6a9955"/><rect x="2776.0" y="381.0" width="6.0" height="1.1" fill="#6a9955"/><rect x="2783.0" y="381.0" width="60.0" height="1.1" fill="#6a9955"/><rect x="2776.0" y="383.0" width="4.0" height="1.1" fill="#6a9955"/><rect x="2781.0" y="383.0" width="1.0" height="1.1" fill="#6a9955"/><rect x="2783.0" y="383.0" width="6.0" height="1.1" fill="#6a9955"/><rect x="2790.0" y="383.0" width="28.0" height="1.1" fill="#6a9955"/><rect x="2776.0" y="385.0" width="2.0" height="1.1" fill="#6a9955"/><rect x="2776.0" y="387.0" width="2.0" height="1.1" fill="#6a9955"/><rect x="2779.0" y="387.0" width="20.0" height="1.1" fill="#6a9955"/><rect x="2776.0" y="389.0" width="8.0" height="1.1" fill="#569cd6"/><rect x="2785.0" y="389.0" width="19.0" height="1.1" fill="#d4d4d4"/><rect x="2804.0" y="389.0" width="1.0" height="1.1" fill="#ffd700"/><rect x="2805.0" y="389.0" width="1.0" height="1.1" fill="#ffd700"/><rect x="2807.0" y="389.0" width="1.0" height="1.1" fill="#ffd700"/><rect x="2780.0" y="391.0" width="6.0" height="1.1" fill="#d4d4d4"/><rect x="2786.0" y="391.0" width="1.0" height="1.1" fill="#da70d6"/><rect x="2787.0" y="391.0" width="4.0" height="1.1" fill="#ce9178"/><rect x="2792.0" y="391.0" width="12.0" height="1.1" fill="#ce9178"/><rect x="2805.0" y="391.0" width="8.0" height="1.1" fill="#ce9178"/><rect x="2814.0" y="391.0" width="4.0" height="1.1" fill="#ce9178"/><rect x="2818.0" y="391.0" width="1.0" height="1.1" fill="#da70d6"/><rect x="2819.0" y="391.0" width="1.0" height="1.1" fill="#d4d4d4"/><rect x="2780.0" y="393.0" width="3.0" height="1.1" fill="#569cd6"/><rect x="2784.0" y="393.0" width="1.0" height="1.1" fill="#da70d6"/><rect x="2784.0" y="395.0" width="2.0" height="1.1" fill="#6a9955"/><rect x="2787.0" y="395.0" width="18.0" height="1.1" fill="#6a9955"/><rect x="2784.0" y="397.0" width="3.0" height="1.1" fill="#569cd6"/><rect x="2788.0" y="397.0" width="11.0" height="1.1" fill="#d4d4d4"/><rect x="2800.0" y="397.0" width="1.0" height="1.1" fill="#d4d4d4"/><rect x="2802.0" y="397.0" width="6.0" height="1.1" fill="#d4d4d4"/><rect x="2808.0" y="397.0" width="1.0" height="1.1" fill="#d4d4d4"/><rect x="2809.0" y="397.0" width="12.0" height="1.1" fill="#d4d4d4"/><rect x="2821.0" y="397.0" width="1.0" height="1.1" fill="#179fff"/><rect x="2822.0" y="397.0" width="15.0" height="1.1" fill="#ce9178"/><rect x="2837.0" y="397.0" width="1.0" height="1.1" fill="#179fff"/><rect x="2838.0" y="397.0" width="1.0" height="1.1" fill="#d4d4d4"/><rect x="2784.0" y="403.0" width="2.0" height="1.1" fill="#569cd6"/><rect x="2787.0" y="403.0" width="1.0" height="1.1" fill="#179fff"/><rect x="2788.0" y="403.0" width="11.0" height="1.1" fill="#d4d4d4"/><rect x="2800.0" y="403.0" width="1.0" height="1.1" fill="#d4d4d4"/><rect x="2801.0" y="403.0" width="1.0" height="1.1" fill="#d4d4d4"/><rect x="2803.0" y="403.0" width="11.0" height="1.1" fill="#d4d4d4"/><rect x="2814.0" y="403.0" width="1.0" height="1.1" fill="#d4d4d4"/><rect x="2815.0" y="403.0" width="6.0" height="1.1" fill="#d4d4d4"/><rect x="2822.0" y="403.0" width="1.0" height="1.1" fill="#d4d4d4"/><rect x="2824.0" y="403.0" width="1.0" height="1.1" fill="#b5cea8"/><rect x="2825.0" y="403.0" width="1.0" height="1.1" fill="#179fff"/><rect x="2827.0" y="403.0" width="1.0" height="1.1" fill="#179fff"/><rect x="2788.0" y="405.0" width="6.0" height="1.1" fill="#d4d4d4"/><rect x="2794.0" y="405.0" width="1.0" height="1.1" fill="#ffd700"/><rect x="2795.0" y="405.0" width="5.0" height="1.1" fill="#ce9178"/><rect x="2801.0" y="405.0" width="1.0" height="1.1" fill="#ce9178"/><rect x="2803.0" y="405.0" width="1.0" height="1.1" fill="#d4d4d4"/><rect x="2805.0" y="405.0" width="11.0" height="1.1" fill="#d4d4d4"/><rect x="2816.0" y="405.0" width="1.0" height="1.1" fill="#d4d4d4"/><rect x="2817.0" y="405.0" width="6.0" height="1.1" fill="#d4d4d4"/><rect x="2824.0" y="405.0" width="1.0" height="1.1" fill="#d4d4d4"/><rect x="2826.0" y="405.0" width="1.0" height="1.1" fill="#ce9178"/><rect x="2828.0" y="405.0" width="11.0" height="1.1" fill="#ce9178"/><rect x="2839.0" y="405.0" width="1.0" height="1.1" fill="#ffd700"/><rect x="2840.0" y="405.0" width="1.0" height="1.1" fill="#d4d4d4"/><rect x="2788.0" y="407.0" width="3.0" height="1.1" fill="#569cd6"/><rect x="2792.0" y="407.0" width="1.0" height="1.1" fill="#ffd700"/><rect x="2793.0" y="407.0" width="3.0" height="1.1" fill="#569cd6"/><rect x="2797.0" y="407.0" width="1.0" height="1.1" fill="#d4d4d4"/><rect x="2799.0" y="407.0" width="1.0" height="1.1" fill="#d4d4d4"/><rect x="2801.0" y="407.0" width="1.0" height="1.1" fill="#b5cea8"/><rect x="2802.0" y="407.0" width="1.0" height="1.1" fill="#d4d4d4"/><rect x="2804.0" y="407.0" width="1.0" height="1.1" fill="#d4d4d4"/><rect x="2806.0" y="407.0" width="1.0" height="1.1" fill="#d4d4d4"/><rect x="2808.0" y="407.0" width="11.0" height="1.1" fill="#d4d4d4"/><rect x="2819.0" y="407.0" width="1.0" height="1.1" fill="#d4d4d4"/><rect x="2820.0" y="407.0" width="6.0" height="1.1" fill="#d4d4d4"/><rect x="2826.0" y="407.0" width="1.0" height="1.1" fill="#d4d4d4"/><rect x="2828.0" y="407.0" width="1.0" height="1.1" fill="#d4d4d4"/><rect x="2829.0" y="407.0" width="1.0" height="1.1" fill="#d4d4d4"/><rect x="2830.0" y="407.0" width="1.0" height="1.1" fill="#d4d4d4"/><rect x="2831.0" y="407.0" width="1.0" height="1.1" fill="#ffd700"/><rect x="2833.0" y="407.0" width="1.0" height="1.1" fill="#ffd700"/><rect x="2792.0" y="409.0" width="3.0" height="1.1" fill="#569cd6"/><rect x="2796.0" y="409.0" width="6.0" height="1.1" fill="#d4d4d4"/><rect x="2803.0" y="409.0" width="1.0" height="1.1" fill="#d4d4d4"/><rect x="2805.0" y="409.0" width="11.0" height="1.1" fill="#d4d4d4"/><rect x="2816.0" y="409.0" width="1.0" height="1.1" fill="#da70d6"/><rect x="2817.0" y="409.0" width="1.0" height="1.1" fill="#d4d4d4"/><rect x="2818.0" y="409.0" width="1.0" height="1.1" fill="#da70d6"/><rect x="2819.0" y="409.0" width="1.0" height="1.1" fill="#d4d4d4"/><rect x="2792.0" y="411.0" width="6.0" height="1.1" fill="#d4d4d4"/><rect x="2798.0" y="411.0" width="1.0" height="1.1" fill="#da70d6"/><rect x="2799.0" y="411.0" width="1.0" height="1.1" fill="#ce9178"/><rect x="2802.0" y="411.0" width="5.0" height="1.1" fill="#ce9178"/><rect x="2808.0" y="411.0" width="1.0" height="1.1" fill="#d4d4d4"/><rect x="2810.0" y="411.0" width="1.0" height="1.1" fill="#179fff"/><rect x="2811.0" y="411.0" width="1.0" height="1.1" fill="#d4d4d4"/><rect x="2812.0" y="411.0" width="1.0" height="1.1" fill="#d4d4d4"/><rect x="2813.0" y="411.0" width="1.0" height="1.1" fill="#b5cea8"/><rect x="2814.0" y="411.0" width="1.0" height="1.1" fill="#179fff"/><rect x="2788.0" y="413.0" width="1.0" height="1.1" fill="#ffd700"/><rect x="2784.0" y="415.0" width="1.0" height="1.1" fill="#179fff"/><rect x="2786.0" y="415.0" width="4.0" height="1.1" fill="#569cd6"/><rect x="2791.0" y="415.0" width="1.0" height="1.1" fill="#179fff"/><rect x="2788.0" y="417.0" width="6.0" height="1.1" fill="#d4d4d4"/><rect x="2794.0" y="417.0" width="1.0" height="1.1" fill="#ffd700"/><rect x="2795.0" y="417.0" width="16.0" height="1.1" fill="#ce9178"/><rect x="2811.0" y="417.0" width="1.0" height="1.1" fill="#ffd700"/><rect x="2812.0" y="417.0" width="1.0" height="1.1" fill="#d4d4d4"/><rect x="2784.0" y="419.0" width="1.0" height="1.1" fill="#179fff"/><rect x="2784.0" y="421.0" width="3.0" height="1.1" fill="#569cd6"/><rect x="2788.0" y="421.0" width="11.0" height="1.1" fill="#d4d4d4"/><rect x="2800.0" y="421.0" width="1.0" height="1.1" fill="#d4d4d4"/><rect x="2802.0" y="421.0" width="6.0" height="1.1" fill="#d4d4d4"/><rect x="2808.0" y="421.0" width="1.0" height="1.1" fill="#d4d4d4"/><rect x="2809.0" y="421.0" width="12.0" height="1.1" fill="#d4d4d4"/><rect x="2821.0" y="421.0" width="1.0" height="1.1" fill="#179fff"/><rect x="2822.0" y="421.0" width="15.0" height="1.1" fill="#ce9178"/><rect x="2837.0" y="421.0" width="1.0" height="1.1" fill="#179fff"/><rect x="2838.0" y="421.0" width="1.0" height="1.1" fill="#d4d4d4"/><rect x="2784.0" y="423.0" width="6.0" height="1.1" fill="#d4d4d4"/><rect x="2790.0" y="423.0" width="1.0" height="1.1" fill="#179fff"/><rect x="2791.0" y="423.0" width="18.0" height="1.1" fill="#ce9178"/><rect x="2809.0" y="423.0" width="1.0" height="1.1" fill="#d4d4d4"/><rect x="2811.0" y="423.0" width="11.0" height="1.1" fill="#d4d4d4"/><rect x="2822.0" y="423.0" width="1.0" height="1.1" fill="#179fff"/><rect x="2823.0" y="423.0" width="1.0" height="1.1" fill="#d4d4d4"/><rect x="2784.0" y="427.0" width="2.0" height="1.1" fill="#569cd6"/><rect x="2787.0" y="427.0" width="1.0" height="1.1" fill="#179fff"/><rect x="2788.0" y="427.0" width="11.0" height="1.1" fill="#d4d4d4"/><rect x="2800.0" y="427.0" width="1.0" height="1.1" fill="#d4d4d4"/><rect x="2801.0" y="427.0" width="1.0" height="1.1" fill="#d4d4d4"/><rect x="2803.0" y="427.0" width="11.0" height="1.1" fill="#d4d4d4"/><rect x="2814.0" y="427.0" width="1.0" height="1.1" fill="#d4d4d4"/><rect x="2815.0" y="427.0" width="6.0" height="1.1" fill="#d4d4d4"/><rect x="2822.0" y="427.0" width="1.0" height="1.1" fill="#d4d4d4"/><rect x="2824.0" y="427.0" width="1.0" height="1.1" fill="#b5cea8"/><rect x="2825.0" y="427.0" width="1.0" height="1.1" fill="#179fff"/><rect x="2827.0" y="427.0" width="1.0" height="1.1" fill="#179fff"/><rect x="2788.0" y="429.0" width="6.0" height="1.1" fill="#d4d4d4"/><rect x="2794.0" y="429.0" width="1.0" height="1.1" fill="#ffd700"/><rect x="2795.0" y="429.0" width="5.0" height="1.1" fill="#ce9178"/><rect x="2801.0" y="429.0" width="1.0" height="1.1" fill="#ce9178"/><rect x="2803.0" y="429.0" width="1.0" height="1.1" fill="#d4d4d4"/><rect x="2805.0" y="429.0" width="11.0" height="1.1" fill="#d4d4d4"/><rect x="2816.0" y="429.0" width="1.0" height="1.1" fill="#d4d4d4"/><rect x="2817.0" y="429.0" width="6.0" height="1.1" fill="#d4d4d4"/><rect x="2824.0" y="429.0" width="1.0" height="1.1" fill="#d4d4d4"/><rect x="2826.0" y="429.0" width="1.0" height="1.1" fill="#ce9178"/><rect x="2828.0" y="429.0" width="11.0" height="1.1" fill="#ce9178"/><rect x="2839.0" y="429.0" width="1.0" height="1.1" fill="#ffd700"/><rect x="2840.0" y="429.0" width="1.0" height="1.1" fill="#d4d4d4"/><rect x="2788.0" y="431.0" width="3.0" height="1.1" fill="#569cd6"/><rect x="2792.0" y="431.0" width="1.0" height="1.1" fill="#ffd700"/><rect x="2793.0" y="431.0" width="3.0" height="1.1" fill="#569cd6"/><rect x="2797.0" y="431.0" width="1.0" height="1.1" fill="#d4d4d4"/><rect x="2799.0" y="431.0" width="1.0" height="1.1" fill="#d4d4d4"/><rect x="2801.0" y="431.0" width="1.0" height="1.1" fill="#b5cea8"/><rect x="2802.0" y="431.0" width="1.0" height="1.1" fill="#d4d4d4"/><rect x="2804.0" y="431.0" width="1.0" height="1.1" fill="#d4d4d4"/><rect x="2806.0" y="431.0" width="1.0" height="1.1" fill="#d4d4d4"/><rect x="2808.0" y="431.0" width="11.0" height="1.1" fill="#d4d4d4"/><rect x="2819.0" y="431.0" width="1.0" height="1.1" fill="#d4d4d4"/><rect x="2820.0" y="431.0" width="6.0" height="1.1" fill="#d4d4d4"/><rect x="2826.0" y="431.0" width="1.0" height="1.1" fill="#d4d4d4"/><rect x="2828.0" y="431.0" width="1.0" height="1.1" fill="#d4d4d4"/><rect x="2829.0" y="431.0" width="1.0" height="1.1" fill="#d4d4d4"/><rect x="2830.0" y="431.0" width="1.0" height="1.1" fill="#d4d4d4"/><rect x="2831.0" y="431.0" width="1.0" height="1.1" fill="#ffd700"/><rect x="2833.0" y="431.0" width="1.0" height="1.1" fill="#ffd700"/><rect x="2792.0" y="433.0" width="3.0" height="1.1" fill="#569cd6"/><rect x="2796.0" y="433.0" width="6.0" height="1.1" fill="#d4d4d4"/><rect x="2803.0" y="433.0" width="1.0" height="1.1" fill="#d4d4d4"/><rect x="2805.0" y="433.0" width="11.0" height="1.1" fill="#d4d4d4"/><rect x="2816.0" y="433.0" width="1.0" height="1.1" fill="#da70d6"/><rect x="2817.0" y="433.0" width="1.0" height="1.1" fill="#d4d4d4"/><rect x="2818.0" y="433.0" width="1.0" height="1.1" fill="#da70d6"/><rect x="2819.0" y="433.0" width="1.0" height="1.1" fill="#d4d4d4"/><rect x="2792.0" y="435.0" width="6.0" height="1.1" fill="#d4d4d4"/><rect x="2798.0" y="435.0" width="1.0" height="1.1" fill="#da70d6"/><rect x="2799.0" y="435.0" width="1.0" height="1.1" fill="#ce9178"/><rect x="2802.0" y="435.0" width="5.0" height="1.1" fill="#ce9178"/><rect x="2808.0" y="435.0" width="1.0" height="1.1" fill="#d4d4d4"/><rect x="2810.0" y="435.0" width="1.0" height="1.1" fill="#179fff"/><rect x="2811.0" y="435.0" width="1.0" height="1.1" fill="#d4d4d4"/><rect x="2812.0" y="435.0" width="1.0" height="1.1" fill="#d4d4d4"/><rect x="2813.0" y="435.0" width="1.0" height="1.1" fill="#b5cea8"/><rect x="2814.0" y="435.0" width="1.0" height="1.1" fill="#179fff"/><rect x="2816.0" y="435.0" width="1.0" height="1.1" fill="#d4d4d4"/><rect x="2818.0" y="435.0" width="11.0" height="1.1" fill="#ce9178"/><rect x="2830.0" y="435.0" width="1.0" height="1.1" fill="#d4d4d4"/><rect x="2832.0" y="435.0" width="6.0" height="1.1" fill="#d4d4d4"/><rect x="2838.0" y="435.0" width="1.0" height="1.1" fill="#d4d4d4"/><rect x="2839.0" y="435.0" width="5.0" height="1.1" fill="#d4d4d4"/><rect x="2844.0" y="435.0" width="1.0" height="1.1" fill="#179fff"/><rect x="2845.0" y="435.0" width="1.0" height="1.1" fill="#179fff"/><rect x="2847.0" y="435.0" width="1.0" height="1.1" fill="#d4d4d4"/><rect x="2849.0" y="435.0" width="2.0" height="1.1" fill="#ce9178"/><rect x="2852.0" y="435.0" width="6.0" height="1.1" fill="#ce9178"/><rect x="2859.0" y="435.0" width="1.0" height="1.1" fill="#d4d4d4"/><rect x="2861.0" y="435.0" width="6.0" height="1.1" fill="#d4d4d4"/><rect x="2867.0" y="435.0" width="1.0" height="1.1" fill="#d4d4d4"/><rect x="2868.0" y="435.0" width="7.0" height="1.1" fill="#d4d4d4"/><rect x="2875.0" y="435.0" width="1.0" height="1.1" fill="#179fff"/><rect x="2876.0" y="435.0" width="1.0" height="1.1" fill="#179fff"/><rect x="2877.0" y="435.0" width="1.0" height="1.1" fill="#d4d4d4"/><rect x="2878.0" y="435.0" width="8.0" height="1.1" fill="#d4d4d4"/><rect x="2886.0" y="435.0" width="1.0" height="1.1" fill="#179fff"/><rect x="2788.0" y="437.0" width="1.0" height="1.1" fill="#ffd700"/><rect x="2784.0" y="439.0" width="1.0" height="1.1" fill="#179fff"/><rect x="2786.0" y="439.0" width="4.0" height="1.1" fill="#569cd6"/><rect x="2791.0" y="439.0" width="1.0" height="1.1" fill="#179fff"/><rect x="2788.0" y="441.0" width="6.0" height="1.1" fill="#d4d4d4"/><rect x="2794.0" y="441.0" width="1.0" height="1.1" fill="#ffd700"/><rect x="2795.0" y="441.0" width="16.0" height="1.1" fill="#ce9178"/><rect x="2811.0" y="441.0" width="1.0" height="1.1" fill="#ffd700"/><rect x="2812.0" y="441.0" width="1.0" height="1.1" fill="#d4d4d4"/><rect x="2784.0" y="443.0" width="1.0" height="1.1" fill="#179fff"/><rect x="2780.0" y="445.0" width="1.0" height="1.1" fill="#da70d6"/><rect x="2782.0" y="445.0" width="5.0" height="1.1" fill="#569cd6"/><rect x="2788.0" y="445.0" width="1.0" height="1.1" fill="#da70d6"/><rect x="2789.0" y="445.0" width="5.0" height="1.1" fill="#d4d4d4"/><rect x="2794.0" y="445.0" width="1.0" height="1.1" fill="#da70d6"/><rect x="2796.0" y="445.0" width="1.0" height="1.1" fill="#da70d6"/><rect x="2784.0" y="447.0" width="6.0" height="1.1" fill="#d4d4d4"/><rect x="2790.0" y="447.0" width="1.0" height="1.1" fill="#179fff"/><rect x="2791.0" y="447.0" width="24.0" height="1.1" fill="#ce9178"/><rect x="2816.0" y="447.0" width="1.0" height="1.1" fill="#d4d4d4"/><rect x="2818.0" y="447.0" width="5.0" height="1.1" fill="#d4d4d4"/><rect x="2823.0" y="447.0" width="1.0" height="1.1" fill="#d4d4d4"/><rect x="2824.0" y="447.0" width="7.0" height="1.1" fill="#d4d4d4"/><rect x="2831.0" y="447.0" width="1.0" height="1.1" fill="#179fff"/><rect x="2832.0" y="447.0" width="1.0" height="1.1" fill="#d4d4d4"/><rect x="2780.0" y="449.0" width="1.0" height="1.1" fill="#da70d6"/><rect x="2776.0" y="451.0" width="1.0" height="1.1" fill="#ffd700"/><rect x="2776.0" y="455.0" width="19.0" height="1.1" fill="#d4d4d4"/><rect x="2795.0" y="455.0" width="1.0" height="1.1" fill="#ffd700"/><rect x="2796.0" y="455.0" width="1.0" height="1.1" fill="#ffd700"/><rect x="2797.0" y="455.0" width="1.0" height="1.1" fill="#d4d4d4"/><rect x="2776.0" y="461.0" width="2.0" height="1.1" fill="#6a9955"/><rect x="2779.0" y="461.0" width="26.0" height="1.1" fill="#6a9955"/><rect x="2806.0" y="461.0" width="1.0" height="1.1" fill="#6a9955"/><rect x="2808.0" y="461.0" width="28.0" height="1.1" fill="#6a9955"/><rect x="2776.0" y="463.0" width="2.0" height="1.1" fill="#6a9955"/><rect x="2776.0" y="465.0" width="4.0" height="1.1" fill="#6a9955"/><rect x="2781.0" y="465.0" width="8.0" height="1.1" fill="#6a9955"/><rect x="2776.0" y="467.0" width="8.0" height="1.1" fill="#6a9955"/><rect x="2785.0" y="467.0" width="48.0" height="1.1" fill="#6a9955"/><rect x="2776.0" y="469.0" width="8.0" height="1.1" fill="#6a9955"/><rect x="2785.0" y="469.0" width="8.0" height="1.1" fill="#6a9955"/><rect x="2794.0" y="469.0" width="19.0" height="1.1" fill="#6a9955"/><rect x="2814.0" y="469.0" width="7.0" height="1.1" fill="#6a9955"/><rect x="2822.0" y="469.0" width="7.0" height="1.1" fill="#6a9955"/><rect x="2776.0" y="471.0" width="6.0" height="1.1" fill="#6a9955"/><rect x="2783.0" y="471.0" width="60.0" height="1.1" fill="#6a9955"/><rect x="2776.0" y="473.0" width="4.0" height="1.1" fill="#6a9955"/><rect x="2781.0" y="473.0" width="1.0" height="1.1" fill="#6a9955"/><rect x="2783.0" y="473.0" width="6.0" height="1.1" fill="#6a9955"/><rect x="2790.0" y="473.0" width="28.0" height="1.1" fill="#6a9955"/><rect x="2776.0" y="475.0" width="2.0" height="1.1" fill="#6a9955"/><rect x="2776.0" y="477.0" width="2.0" height="1.1" fill="#6a9955"/><rect x="2779.0" y="477.0" width="20.0" height="1.1" fill="#6a9955"/><rect x="2776.0" y="479.0" width="8.0" height="1.1" fill="#569cd6"/><rect x="2785.0" y="479.0" width="19.0" height="1.1" fill="#d4d4d4"/><rect x="2804.0" y="479.0" width="1.0" height="1.1" fill="#ffd700"/><rect x="2805.0" y="479.0" width="1.0" height="1.1" fill="#ffd700"/><rect x="2807.0" y="479.0" width="1.0" height="1.1" fill="#ffd700"/><rect x="2780.0" y="481.0" width="6.0" height="1.1" fill="#d4d4d4"/><rect x="2786.0" y="481.0" width="1.0" height="1.1" fill="#da70d6"/><rect x="2787.0" y="481.0" width="4.0" height="1.1" fill="#ce9178"/><rect x="2792.0" y="481.0" width="12.0" height="1.1" fill="#ce9178"/><rect x="2805.0" y="481.0" width="8.0" height="1.1" fill="#ce9178"/><rect x="2814.0" y="481.0" width="4.0" height="1.1" fill="#ce9178"/><rect x="2818.0" y="481.0" width="1.0" height="1.1" fill="#da70d6"/><rect x="2819.0" y="481.0" width="1.0" height="1.1" fill="#d4d4d4"/><rect x="2780.0" y="483.0" width="3.0" height="1.1" fill="#569cd6"/><rect x="2784.0" y="483.0" width="1.0" height="1.1" fill="#da70d6"/><rect x="2784.0" y="485.0" width="2.0" height="1.1" fill="#6a9955"/><rect x="2787.0" y="485.0" width="18.0" height="1.1" fill="#6a9955"/><rect x="2784.0" y="487.0" width="3.0" height="1.1" fill="#569cd6"/><rect x="2788.0" y="487.0" width="11.0" height="1.1" fill="#d4d4d4"/><rect x="2800.0" y="487.0" width="1.0" height="1.1" fill="#d4d4d4"/><rect x="2802.0" y="487.0" width="6.0" height="1.1" fill="#d4d4d4"/><rect x="2808.0" y="487.0" width="1.0" height="1.1" fill="#d4d4d4"/><rect x="2809.0" y="487.0" width="12.0" height="1.1" fill="#d4d4d4"/><rect x="2821.0" y="487.0" width="1.0" height="1.1" fill="#179fff"/><rect x="2822.0" y="487.0" width="15.0" height="1.1" fill="#ce9178"/><rect x="2837.0" y="487.0" width="1.0" height="1.1" fill="#179fff"/><rect x="2838.0" y="487.0" width="1.0" height="1.1" fill="#d4d4d4"/><rect x="2784.0" y="489.0" width="6.0" height="1.1" fill="#d4d4d4"/><rect x="2790.0" y="489.0" width="1.0" height="1.1" fill="#179fff"/><rect x="2791.0" y="489.0" width="18.0" height="1.1" fill="#ce9178"/><rect x="2809.0" y="489.0" width="1.0" height="1.1" fill="#d4d4d4"/><rect x="2811.0" y="489.0" width="11.0" height="1.1" fill="#d4d4d4"/><rect x="2822.0" y="489.0" width="1.0" height="1.1" fill="#179fff"/><rect x="2823.0" y="489.0" width="1.0" height="1.1" fill="#d4d4d4"/><rect x="2784.0" y="493.0" width="2.0" height="1.1" fill="#569cd6"/><rect x="2787.0" y="493.0" width="1.0" height="1.1" fill="#179fff"/><rect x="2788.0" y="493.0" width="11.0" height="1.1" fill="#d4d4d4"/><rect x="2800.0" y="493.0" width="1.0" height="1.1" fill="#d4d4d4"/><rect x="2801.0" y="493.0" width="1.0" height="1.1" fill="#d4d4d4"/><rect x="2803.0" y="493.0" width="11.0" height="1.1" fill="#d4d4d4"/><rect x="2814.0" y="493.0" width="1.0" height="1.1" fill="#d4d4d4"/><rect x="2815.0" y="493.0" width="6.0" height="1.1" fill="#d4d4d4"/><rect x="2822.0" y="493.0" width="1.0" height="1.1" fill="#d4d4d4"/><rect x="2824.0" y="493.0" width="1.0" height="1.1" fill="#b5cea8"/><rect x="2825.0" y="493.0" width="1.0" height="1.1" fill="#179fff"/><rect x="2827.0" y="493.0" width="1.0" height="1.1" fill="#179fff"/><rect x="2788.0" y="495.0" width="6.0" height="1.1" fill="#d4d4d4"/><rect x="2794.0" y="495.0" width="1.0" height="1.1" fill="#ffd700"/><rect x="2795.0" y="495.0" width="5.0" height="1.1" fill="#ce9178"/><rect x="2801.0" y="495.0" width="1.0" height="1.1" fill="#ce9178"/><rect x="2803.0" y="495.0" width="1.0" height="1.1" fill="#d4d4d4"/><rect x="2805.0" y="495.0" width="11.0" height="1.1" fill="#d4d4d4"/><rect x="2816.0" y="495.0" width="1.0" height="1.1" fill="#d4d4d4"/><rect x="2817.0" y="495.0" width="6.0" height="1.1" fill="#d4d4d4"/><rect x="2824.0" y="495.0" width="1.0" height="1.1" fill="#d4d4d4"/><rect x="2826.0" y="495.0" width="1.0" height="1.1" fill="#ce9178"/><rect x="2828.0" y="495.0" width="11.0" height="1.1" fill="#ce9178"/><rect x="2839.0" y="495.0" width="1.0" height="1.1" fill="#ffd700"/><rect x="2840.0" y="495.0" width="1.0" height="1.1" fill="#d4d4d4"/><rect x="2788.0" y="497.0" width="3.0" height="1.1" fill="#569cd6"/><rect x="2792.0" y="497.0" width="1.0" height="1.1" fill="#ffd700"/><rect x="2793.0" y="497.0" width="3.0" height="1.1" fill="#569cd6"/><rect x="2797.0" y="497.0" width="1.0" height="1.1" fill="#d4d4d4"/><rect x="2792.0" y="499.0" width="3.0" height="1.1" fill="#569cd6"/><rect x="2796.0" y="499.0" width="6.0" height="1.1" fill="#d4d4d4"/><rect x="2803.0" y="499.0" width="1.0" height="1.1" fill="#d4d4d4"/><rect x="2805.0" y="499.0" width="11.0" height="1.1" fill="#d4d4d4"/><rect x="2816.0" y="499.0" width="1.0" height="1.1" fill="#da70d6"/><rect x="2817.0" y="499.0" width="1.0" height="1.1" fill="#d4d4d4"/><rect x="2818.0" y="499.0" width="1.0" height="1.1" fill="#da70d6"/><rect x="2819.0" y="499.0" width="1.0" height="1.1" fill="#d4d4d4"/><rect x="2792.0" y="501.0" width="6.0" height="1.1" fill="#d4d4d4"/><rect x="2798.0" y="501.0" width="1.0" height="1.1" fill="#da70d6"/><rect x="2799.0" y="501.0" width="1.0" height="1.1" fill="#ce9178"/><rect x="2802.0" y="501.0" width="5.0" height="1.1" fill="#ce9178"/><rect x="2808.0" y="501.0" width="1.0" height="1.1" fill="#d4d4d4"/><rect x="2810.0" y="501.0" width="1.0" height="1.1" fill="#179fff"/><rect x="2811.0" y="501.0" width="1.0" height="1.1" fill="#d4d4d4"/><rect x="2812.0" y="501.0" width="1.0" height="1.1" fill="#d4d4d4"/><rect x="2813.0" y="501.0" width="1.0" height="1.1" fill="#b5cea8"/><rect x="2814.0" y="501.0" width="1.0" height="1.1" fill="#179fff"/><rect x="2816.0" y="501.0" width="1.0" height="1.1" fill="#d4d4d4"/><rect x="2818.0" y="501.0" width="11.0" height="1.1" fill="#ce9178"/><rect x="2830.0" y="501.0" width="1.0" height="1.1" fill="#d4d4d4"/><rect x="2832.0" y="501.0" width="6.0" height="1.1" fill="#d4d4d4"/><rect x="2838.0" y="501.0" width="1.0" height="1.1" fill="#d4d4d4"/><rect x="2839.0" y="501.0" width="5.0" height="1.1" fill="#d4d4d4"/><rect x="2844.0" y="501.0" width="1.0" height="1.1" fill="#179fff"/><rect x="2845.0" y="501.0" width="1.0" height="1.1" fill="#179fff"/><rect x="2847.0" y="501.0" width="1.0" height="1.1" fill="#d4d4d4"/><rect x="2849.0" y="501.0" width="2.0" height="1.1" fill="#ce9178"/><rect x="2852.0" y="501.0" width="6.0" height="1.1" fill="#ce9178"/><rect x="2859.0" y="501.0" width="1.0" height="1.1" fill="#d4d4d4"/><rect x="2861.0" y="501.0" width="6.0" height="1.1" fill="#d4d4d4"/><rect x="2867.0" y="501.0" width="1.0" height="1.1" fill="#d4d4d4"/><rect x="2868.0" y="501.0" width="7.0" height="1.1" fill="#d4d4d4"/><rect x="2875.0" y="501.0" width="1.0" height="1.1" fill="#179fff"/><rect x="2876.0" y="501.0" width="1.0" height="1.1" fill="#179fff"/><rect x="2877.0" y="501.0" width="1.0" height="1.1" fill="#d4d4d4"/><rect x="2878.0" y="501.0" width="8.0" height="1.1" fill="#d4d4d4"/><rect x="2886.0" y="501.0" width="1.0" height="1.1" fill="#179fff"/><rect x="2788.0" y="503.0" width="1.0" height="1.1" fill="#ffd700"/><rect x="2784.0" y="505.0" width="1.0" height="1.1" fill="#179fff"/><rect x="2786.0" y="505.0" width="4.0" height="1.1" fill="#569cd6"/><rect x="2791.0" y="505.0" width="1.0" height="1.1" fill="#179fff"/><rect x="2788.0" y="507.0" width="6.0" height="1.1" fill="#d4d4d4"/><rect x="2794.0" y="507.0" width="1.0" height="1.1" fill="#ffd700"/><rect x="2795.0" y="507.0" width="16.0" height="1.1" fill="#ce9178"/><rect x="2811.0" y="507.0" width="1.0" height="1.1" fill="#ffd700"/><rect x="2812.0" y="507.0" width="1.0" height="1.1" fill="#d4d4d4"/><rect x="2784.0" y="509.0" width="1.0" height="1.1" fill="#179fff"/><rect x="2784.0" y="511.0" width="3.0" height="1.1" fill="#569cd6"/><rect x="2788.0" y="511.0" width="11.0" height="1.1" fill="#d4d4d4"/><rect x="2800.0" y="511.0" width="1.0" height="1.1" fill="#d4d4d4"/><rect x="2802.0" y="511.0" width="6.0" height="1.1" fill="#d4d4d4"/><rect x="2808.0" y="511.0" width="1.0" height="1.1" fill="#d4d4d4"/><rect x="2809.0" y="511.0" width="12.0" height="1.1" fill="#d4d4d4"/><rect x="2821.0" y="511.0" width="1.0" height="1.1" fill="#179fff"/><rect x="2822.0" y="511.0" width="15.0" height="1.1" fill="#ce9178"/><rect x="2837.0" y="511.0" width="1.0" height="1.1" fill="#179fff"/><rect x="2838.0" y="511.0" width="1.0" height="1.1" fill="#d4d4d4"/><rect x="2784.0" y="513.0" width="6.0" height="1.1" fill="#d4d4d4"/><rect x="2790.0" y="513.0" width="1.0" height="1.1" fill="#179fff"/><rect x="2791.0" y="513.0" width="18.0" height="1.1" fill="#ce9178"/><rect x="2809.0" y="513.0" width="1.0" height="1.1" fill="#d4d4d4"/><rect x="2811.0" y="513.0" width="11.0" height="1.1" fill="#d4d4d4"/><rect x="2822.0" y="513.0" width="1.0" height="1.1" fill="#179fff"/><rect x="2823.0" y="513.0" width="1.0" height="1.1" fill="#d4d4d4"/><rect x="2784.0" y="517.0" width="2.0" height="1.1" fill="#569cd6"/><rect x="2787.0" y="517.0" width="1.0" height="1.1" fill="#179fff"/><rect x="2788.0" y="517.0" width="11.0" height="1.1" fill="#d4d4d4"/><rect x="2800.0" y="517.0" width="1.0" height="1.1" fill="#d4d4d4"/><rect x="2801.0" y="517.0" width="1.0" height="1.1" fill="#d4d4d4"/><rect x="2803.0" y="517.0" width="11.0" height="1.1" fill="#d4d4d4"/><rect x="2814.0" y="517.0" width="1.0" height="1.1" fill="#d4d4d4"/><rect x="2815.0" y="517.0" width="6.0" height="1.1" fill="#d4d4d4"/><rect x="2822.0" y="517.0" width="1.0" height="1.1" fill="#d4d4d4"/><rect x="2824.0" y="517.0" width="1.0" height="1.1" fill="#b5cea8"/><rect x="2825.0" y="517.0" width="1.0" height="1.1" fill="#179fff"/><rect x="2827.0" y="517.0" width="1.0" height="1.1" fill="#179fff"/><rect x="2788.0" y="519.0" width="6.0" height="1.1" fill="#d4d4d4"/><rect x="2794.0" y="519.0" width="1.0" height="1.1" fill="#ffd700"/><rect x="2795.0" y="519.0" width="5.0" height="1.1" fill="#ce9178"/><rect x="2801.0" y="519.0" width="1.0" height="1.1" fill="#ce9178"/><rect x="2803.0" y="519.0" width="1.0" height="1.1" fill="#d4d4d4"/><rect x="2805.0" y="519.0" width="11.0" height="1.1" fill="#d4d4d4"/><rect x="2816.0" y="519.0" width="1.0" height="1.1" fill="#d4d4d4"/><rect x="2817.0" y="519.0" width="6.0" height="1.1" fill="#d4d4d4"/><rect x="2824.0" y="519.0" width="1.0" height="1.1" fill="#d4d4d4"/><rect x="2826.0" y="519.0" width="1.0" height="1.1" fill="#ce9178"/><rect x="2828.0" y="519.0" width="11.0" height="1.1" fill="#ce9178"/><rect x="2839.0" y="519.0" width="1.0" height="1.1" fill="#ffd700"/><rect x="2840.0" y="519.0" width="1.0" height="1.1" fill="#d4d4d4"/><rect x="2788.0" y="521.0" width="3.0" height="1.1" fill="#569cd6"/><rect x="2792.0" y="521.0" width="1.0" height="1.1" fill="#ffd700"/><rect x="2793.0" y="521.0" width="3.0" height="1.1" fill="#569cd6"/><rect x="2797.0" y="521.0" width="1.0" height="1.1" fill="#d4d4d4"/><rect x="2799.0" y="521.0" width="1.0" height="1.1" fill="#d4d4d4"/><rect x="2801.0" y="521.0" width="1.0" height="1.1" fill="#b5cea8"/><rect x="2802.0" y="521.0" width="1.0" height="1.1" fill="#d4d4d4"/><rect x="2804.0" y="521.0" width="1.0" height="1.1" fill="#d4d4d4"/><rect x="2806.0" y="521.0" width="1.0" height="1.1" fill="#d4d4d4"/><rect x="2808.0" y="521.0" width="11.0" height="1.1" fill="#d4d4d4"/><rect x="2819.0" y="521.0" width="1.0" height="1.1" fill="#d4d4d4"/><rect x="2820.0" y="521.0" width="6.0" height="1.1" fill="#d4d4d4"/><rect x="2826.0" y="521.0" width="1.0" height="1.1" fill="#d4d4d4"/><rect x="2828.0" y="521.0" width="1.0" height="1.1" fill="#d4d4d4"/><rect x="2829.0" y="521.0" width="1.0" height="1.1" fill="#d4d4d4"/><rect x="2830.0" y="521.0" width="1.0" height="1.1" fill="#d4d4d4"/><rect x="2831.0" y="521.0" width="1.0" height="1.1" fill="#ffd700"/><rect x="2833.0" y="521.0" width="1.0" height="1.1" fill="#ffd700"/><rect x="2792.0" y="523.0" width="3.0" height="1.1" fill="#569cd6"/><rect x="2796.0" y="523.0" width="6.0" height="1.1" fill="#d4d4d4"/><rect x="2803.0" y="523.0" width="1.0" height="1.1" fill="#d4d4d4"/><rect x="2805.0" y="523.0" width="11.0" height="1.1" fill="#d4d4d4"/><rect x="2816.0" y="523.0" width="1.0" height="1.1" fill="#da70d6"/><rect x="2817.0" y="523.0" width="1.0" height="1.1" fill="#d4d4d4"/><rect x="2818.0" y="523.0" width="1.0" height="1.1" fill="#da70d6"/><rect x="2819.0" y="523.0" width="1.0" height="1.1" fill="#d4d4d4"/><rect x="2792.0" y="525.0" width="6.0" height="1.1" fill="#d4d4d4"/><rect x="2798.0" y="525.0" width="1.0" height="1.1" fill="#da70d6"/><rect x="2799.0" y="525.0" width="1.0" height="1.1" fill="#ce9178"/><rect x="2802.0" y="525.0" width="5.0" height="1.1" fill="#ce9178"/><rect x="2808.0" y="525.0" width="1.0" height="1.1" fill="#d4d4d4"/><rect x="2810.0" y="525.0" width="1.0" height="1.1" fill="#179fff"/><rect x="2811.0" y="525.0" width="1.0" height="1.1" fill="#d4d4d4"/><rect x="2812.0" y="525.0" width="1.0" height="1.1" fill="#d4d4d4"/><rect x="2813.0" y="525.0" width="1.0" height="1.1" fill="#b5cea8"/><rect x="2814.0" y="525.0" width="1.0" height="1.1" fill="#179fff"/><rect x="2788.0" y="527.0" width="1.0" height="1.1" fill="#ffd700"/><rect x="2784.0" y="529.0" width="1.0" height="1.1" fill="#179fff"/><rect x="2786.0" y="529.0" width="4.0" height="1.1" fill="#569cd6"/><rect x="2791.0" y="529.0" width="1.0" height="1.1" fill="#179fff"/><rect x="2788.0" y="531.0" width="6.0" height="1.1" fill="#d4d4d4"/><rect x="2794.0" y="531.0" width="1.0" height="1.1" fill="#ffd700"/><rect x="2795.0" y="531.0" width="16.0" height="1.1" fill="#ce9178"/><rect x="2811.0" y="531.0" width="1.0" height="1.1" fill="#ffd700"/><rect x="2812.0" y="531.0" width="1.0" height="1.1" fill="#d4d4d4"/><rect x="2784.0" y="533.0" width="1.0" height="1.1" fill="#179fff"/><rect x="2780.0" y="535.0" width="1.0" height="1.1" fill="#da70d6"/><rect x="2782.0" y="535.0" width="5.0" height="1.1" fill="#569cd6"/><rect x="2788.0" y="535.0" width="1.0" height="1.1" fill="#da70d6"/><rect x="2789.0" y="535.0" width="5.0" height="1.1" fill="#d4d4d4"/><rect x="2794.0" y="535.0" width="1.0" height="1.1" fill="#da70d6"/><rect x="2796.0" y="535.0" width="1.0" height="1.1" fill="#da70d6"/><rect x="2784.0" y="537.0" width="6.0" height="1.1" fill="#d4d4d4"/><rect x="2790.0" y="537.0" width="1.0" height="1.1" fill="#179fff"/><rect x="2791.0" y="537.0" width="24.0" height="1.1" fill="#ce9178"/><rect x="2816.0" y="537.0" width="1.0" height="1.1" fill="#d4d4d4"/><rect x="2818.0" y="537.0" width="5.0" height="1.1" fill="#d4d4d4"/><rect x="2823.0" y="537.0" width="1.0" height="1.1" fill="#d4d4d4"/><rect x="2824.0" y="537.0" width="7.0" height="1.1" fill="#d4d4d4"/><rect x="2831.0" y="537.0" width="1.0" height="1.1" fill="#179fff"/><rect x="2832.0" y="537.0" width="1.0" height="1.1" fill="#d4d4d4"/><rect x="2780.0" y="539.0" width="1.0" height="1.1" fill="#da70d6"/><rect x="2776.0" y="541.0" width="1.0" height="1.1" fill="#ffd700"/><rect x="2776.0" y="545.0" width="19.0" height="1.1" fill="#d4d4d4"/><rect x="2795.0" y="545.0" width="1.0" height="1.1" fill="#ffd700"/><rect x="2796.0" y="545.0" width="1.0" height="1.1" fill="#ffd700"/><rect x="2797.0" y="545.0" width="1.0" height="1.1" fill="#d4d4d4"/><rect x="2776.0" y="551.0" width="2.0" height="1.1" fill="#6a9955"/><rect x="2779.0" y="551.0" width="26.0" height="1.1" fill="#6a9955"/><rect x="2806.0" y="551.0" width="1.0" height="1.1" fill="#6a9955"/><rect x="2808.0" y="551.0" width="28.0" height="1.1" fill="#6a9955"/><rect x="2776.0" y="553.0" width="2.0" height="1.1" fill="#6a9955"/><rect x="2776.0" y="555.0" width="4.0" height="1.1" fill="#6a9955"/><rect x="2781.0" y="555.0" width="8.0" height="1.1" fill="#6a9955"/><rect x="2776.0" y="557.0" width="8.0" height="1.1" fill="#6a9955"/><rect x="2785.0" y="557.0" width="48.0" height="1.1" fill="#6a9955"/><rect x="2776.0" y="559.0" width="8.0" height="1.1" fill="#6a9955"/><rect x="2785.0" y="559.0" width="8.0" height="1.1" fill="#6a9955"/><rect x="2794.0" y="559.0" width="19.0" height="1.1" fill="#6a9955"/><rect x="2814.0" y="559.0" width="7.0" height="1.1" fill="#6a9955"/><rect x="2822.0" y="559.0" width="7.0" height="1.1" fill="#6a9955"/><rect x="2776.0" y="561.0" width="6.0" height="1.1" fill="#6a9955"/><rect x="2783.0" y="561.0" width="60.0" height="1.1" fill="#6a9955"/><rect x="2776.0" y="563.0" width="4.0" height="1.1" fill="#6a9955"/><rect x="2781.0" y="563.0" width="1.0" height="1.1" fill="#6a9955"/><rect x="2783.0" y="563.0" width="6.0" height="1.1" fill="#6a9955"/><rect x="2790.0" y="563.0" width="28.0" height="1.1" fill="#6a9955"/><rect x="2776.0" y="565.0" width="2.0" height="1.1" fill="#6a9955"/><rect x="2776.0" y="567.0" width="2.0" height="1.1" fill="#6a9955"/><rect x="2779.0" y="567.0" width="20.0" height="1.1" fill="#6a9955"/><rect x="2776.0" y="569.0" width="8.0" height="1.1" fill="#569cd6"/><rect x="2785.0" y="569.0" width="19.0" height="1.1" fill="#d4d4d4"/><rect x="2804.0" y="569.0" width="1.0" height="1.1" fill="#ffd700"/><rect x="2805.0" y="569.0" width="1.0" height="1.1" fill="#ffd700"/><rect x="2807.0" y="569.0" width="1.0" height="1.1" fill="#ffd700"/><rect x="2780.0" y="571.0" width="6.0" height="1.1" fill="#d4d4d4"/><rect x="2786.0" y="571.0" width="1.0" height="1.1" fill="#da70d6"/><rect x="2787.0" y="571.0" width="4.0" height="1.1" fill="#ce9178"/><rect x="2792.0" y="571.0" width="12.0" height="1.1" fill="#ce9178"/><rect x="2805.0" y="571.0" width="8.0" height="1.1" fill="#ce9178"/><rect x="2814.0" y="571.0" width="4.0" height="1.1" fill="#ce9178"/><rect x="2818.0" y="571.0" width="1.0" height="1.1" fill="#da70d6"/><rect x="2819.0" y="571.0" width="1.0" height="1.1" fill="#d4d4d4"/><rect x="2780.0" y="573.0" width="3.0" height="1.1" fill="#569cd6"/><rect x="2784.0" y="573.0" width="1.0" height="1.1" fill="#da70d6"/><rect x="2784.0" y="575.0" width="2.0" height="1.1" fill="#6a9955"/><rect x="2787.0" y="575.0" width="18.0" height="1.1" fill="#6a9955"/><rect x="2784.0" y="577.0" width="3.0" height="1.1" fill="#569cd6"/><rect x="2788.0" y="577.0" width="11.0" height="1.1" fill="#d4d4d4"/><rect x="2800.0" y="577.0" width="1.0" height="1.1" fill="#d4d4d4"/><rect x="2802.0" y="577.0" width="6.0" height="1.1" fill="#d4d4d4"/><rect x="2808.0" y="577.0" width="1.0" height="1.1" fill="#d4d4d4"/><rect x="2809.0" y="577.0" width="12.0" height="1.1" fill="#d4d4d4"/><rect x="2821.0" y="577.0" width="1.0" height="1.1" fill="#179fff"/><rect x="2822.0" y="577.0" width="15.0" height="1.1" fill="#ce9178"/><rect x="2837.0" y="577.0" width="1.0" height="1.1" fill="#179fff"/><rect x="2838.0" y="577.0" width="1.0" height="1.1" fill="#d4d4d4"/><rect x="2784.0" y="579.0" width="6.0" height="1.1" fill="#d4d4d4"/><rect x="2790.0" y="579.0" width="1.0" height="1.1" fill="#179fff"/><rect x="2791.0" y="579.0" width="18.0" height="1.1" fill="#ce9178"/><rect x="2809.0" y="579.0" width="1.0" height="1.1" fill="#d4d4d4"/><rect x="2811.0" y="579.0" width="11.0" height="1.1" fill="#d4d4d4"/><rect x="2822.0" y="579.0" width="1.0" height="1.1" fill="#179fff"/><rect x="2823.0" y="579.0" width="1.0" height="1.1" fill="#d4d4d4"/><rect x="2784.0" y="583.0" width="2.0" height="1.1" fill="#569cd6"/><rect x="2787.0" y="583.0" width="1.0" height="1.1" fill="#179fff"/><rect x="2788.0" y="583.0" width="11.0" height="1.1" fill="#d4d4d4"/><rect x="2800.0" y="583.0" width="1.0" height="1.1" fill="#d4d4d4"/><rect x="2801.0" y="583.0" width="1.0" height="1.1" fill="#d4d4d4"/><rect x="2803.0" y="583.0" width="11.0" height="1.1" fill="#d4d4d4"/><rect x="2814.0" y="583.0" width="1.0" height="1.1" fill="#d4d4d4"/><rect x="2815.0" y="583.0" width="6.0" height="1.1" fill="#d4d4d4"/><rect x="2822.0" y="583.0" width="1.0" height="1.1" fill="#d4d4d4"/><rect x="2824.0" y="583.0" width="1.0" height="1.1" fill="#b5cea8"/><rect x="2825.0" y="583.0" width="1.0" height="1.1" fill="#179fff"/><rect x="2827.0" y="583.0" width="1.0" height="1.1" fill="#179fff"/><rect x="2788.0" y="585.0" width="6.0" height="1.1" fill="#d4d4d4"/><rect x="2794.0" y="585.0" width="1.0" height="1.1" fill="#ffd700"/><rect x="2795.0" y="585.0" width="5.0" height="1.1" fill="#ce9178"/><rect x="2801.0" y="585.0" width="1.0" height="1.1" fill="#ce9178"/><rect x="2803.0" y="585.0" width="1.0" height="1.1" fill="#d4d4d4"/><rect x="2805.0" y="585.0" width="11.0" height="1.1" fill="#d4d4d4"/><rect x="2816.0" y="585.0" width="1.0" height="1.1" fill="#d4d4d4"/><rect x="2817.0" y="585.0" width="6.0" height="1.1" fill="#d4d4d4"/><rect x="2824.0" y="585.0" width="1.0" height="1.1" fill="#d4d4d4"/><rect x="2826.0" y="585.0" width="1.0" height="1.1" fill="#ce9178"/><rect x="2828.0" y="585.0" width="11.0" height="1.1" fill="#ce9178"/><rect x="2839.0" y="585.0" width="1.0" height="1.1" fill="#ffd700"/><rect x="2840.0" y="585.0" width="1.0" height="1.1" fill="#d4d4d4"/><rect x="2788.0" y="587.0" width="3.0" height="1.1" fill="#569cd6"/><rect x="2792.0" y="587.0" width="1.0" height="1.1" fill="#ffd700"/><rect x="2793.0" y="587.0" width="3.0" height="1.1" fill="#569cd6"/><rect x="2797.0" y="587.0" width="1.0" height="1.1" fill="#d4d4d4"/><rect x="2799.0" y="587.0" width="1.0" height="1.1" fill="#d4d4d4"/><rect x="2801.0" y="587.0" width="1.0" height="1.1" fill="#b5cea8"/><rect x="2802.0" y="587.0" width="1.0" height="1.1" fill="#d4d4d4"/><rect x="2804.0" y="587.0" width="1.0" height="1.1" fill="#d4d4d4"/><rect x="2806.0" y="587.0" width="1.0" height="1.1" fill="#d4d4d4"/><rect x="2808.0" y="587.0" width="11.0" height="1.1" fill="#d4d4d4"/><rect x="2819.0" y="587.0" width="1.0" height="1.1" fill="#d4d4d4"/><rect x="2820.0" y="587.0" width="6.0" height="1.1" fill="#d4d4d4"/><rect x="2826.0" y="587.0" width="1.0" height="1.1" fill="#d4d4d4"/><rect x="2828.0" y="587.0" width="1.0" height="1.1" fill="#d4d4d4"/><rect x="2829.0" y="587.0" width="1.0" height="1.1" fill="#d4d4d4"/><rect x="2830.0" y="587.0" width="1.0" height="1.1" fill="#d4d4d4"/><rect x="2831.0" y="587.0" width="1.0" height="1.1" fill="#ffd700"/><rect x="2833.0" y="587.0" width="1.0" height="1.1" fill="#ffd700"/><rect x="2792.0" y="589.0" width="3.0" height="1.1" fill="#569cd6"/><rect x="2796.0" y="589.0" width="6.0" height="1.1" fill="#d4d4d4"/><rect x="2803.0" y="589.0" width="1.0" height="1.1" fill="#d4d4d4"/><rect x="2805.0" y="589.0" width="11.0" height="1.1" fill="#d4d4d4"/><rect x="2816.0" y="589.0" width="1.0" height="1.1" fill="#da70d6"/><rect x="2817.0" y="589.0" width="1.0" height="1.1" fill="#d4d4d4"/><rect x="2818.0" y="589.0" width="1.0" height="1.1" fill="#da70d6"/><rect x="2819.0" y="589.0" width="1.0" height="1.1" fill="#d4d4d4"/><rect x="2792.0" y="591.0" width="6.0" height="1.1" fill="#d4d4d4"/><rect x="2798.0" y="591.0" width="1.0" height="1.1" fill="#da70d6"/><rect x="2799.0" y="591.0" width="1.0" height="1.1" fill="#ce9178"/><rect x="2802.0" y="591.0" width="5.0" height="1.1" fill="#ce9178"/><rect x="2808.0" y="591.0" width="1.0" height="1.1" fill="#d4d4d4"/><rect x="2810.0" y="591.0" width="1.0" height="1.1" fill="#179fff"/><rect x="2811.0" y="591.0" width="1.0" height="1.1" fill="#d4d4d4"/><rect x="2812.0" y="591.0" width="1.0" height="1.1" fill="#d4d4d4"/><rect x="2813.0" y="591.0" width="1.0" height="1.1" fill="#b5cea8"/><rect x="2814.0" y="591.0" width="1.0" height="1.1" fill="#179fff"/><rect x="2816.0" y="591.0" width="1.0" height="1.1" fill="#d4d4d4"/><rect x="2818.0" y="591.0" width="11.0" height="1.1" fill="#ce9178"/><rect x="2830.0" y="591.0" width="1.0" height="1.1" fill="#d4d4d4"/><rect x="2832.0" y="591.0" width="6.0" height="1.1" fill="#d4d4d4"/><rect x="2838.0" y="591.0" width="1.0" height="1.1" fill="#d4d4d4"/><rect x="2839.0" y="591.0" width="5.0" height="1.1" fill="#d4d4d4"/><rect x="2844.0" y="591.0" width="1.0" height="1.1" fill="#179fff"/><rect x="2845.0" y="591.0" width="1.0" height="1.1" fill="#179fff"/><rect x="2847.0" y="591.0" width="1.0" height="1.1" fill="#d4d4d4"/><rect x="2849.0" y="591.0" width="2.0" height="1.1" fill="#ce9178"/><rect x="2852.0" y="591.0" width="6.0" height="1.1" fill="#ce9178"/><rect x="2859.0" y="591.0" width="1.0" height="1.1" fill="#d4d4d4"/><rect x="2861.0" y="591.0" width="6.0" height="1.1" fill="#d4d4d4"/><rect x="2867.0" y="591.0" width="1.0" height="1.1" fill="#d4d4d4"/><rect x="2868.0" y="591.0" width="7.0" height="1.1" fill="#d4d4d4"/><rect x="2875.0" y="591.0" width="1.0" height="1.1" fill="#179fff"/><rect x="2876.0" y="591.0" width="1.0" height="1.1" fill="#179fff"/><rect x="2877.0" y="591.0" width="1.0" height="1.1" fill="#d4d4d4"/><rect x="2878.0" y="591.0" width="8.0" height="1.1" fill="#d4d4d4"/><rect x="2886.0" y="591.0" width="1.0" height="1.1" fill="#179fff"/><rect x="2788.0" y="593.0" width="1.0" height="1.1" fill="#ffd700"/><rect x="2784.0" y="595.0" width="1.0" height="1.1" fill="#179fff"/><rect x="2786.0" y="595.0" width="4.0" height="1.1" fill="#569cd6"/><rect x="2791.0" y="595.0" width="1.0" height="1.1" fill="#179fff"/><rect x="2788.0" y="597.0" width="6.0" height="1.1" fill="#d4d4d4"/><rect x="2794.0" y="597.0" width="1.0" height="1.1" fill="#ffd700"/><rect x="2795.0" y="597.0" width="16.0" height="1.1" fill="#ce9178"/><rect x="2811.0" y="597.0" width="1.0" height="1.1" fill="#ffd700"/><rect x="2812.0" y="597.0" width="1.0" height="1.1" fill="#d4d4d4"/><rect x="2784.0" y="599.0" width="1.0" height="1.1" fill="#179fff"/><rect x="2784.0" y="601.0" width="3.0" height="1.1" fill="#569cd6"/><rect x="2788.0" y="601.0" width="11.0" height="1.1" fill="#d4d4d4"/><rect x="2800.0" y="601.0" width="1.0" height="1.1" fill="#d4d4d4"/><rect x="2802.0" y="601.0" width="6.0" height="1.1" fill="#d4d4d4"/><rect x="2808.0" y="601.0" width="1.0" height="1.1" fill="#d4d4d4"/><rect x="2809.0" y="601.0" width="12.0" height="1.1" fill="#d4d4d4"/><rect x="2821.0" y="601.0" width="1.0" height="1.1" fill="#179fff"/><rect x="2822.0" y="601.0" width="15.0" height="1.1" fill="#ce9178"/><rect x="2837.0" y="601.0" width="1.0" height="1.1" fill="#179fff"/><rect x="2838.0" y="601.0" width="1.0" height="1.1" fill="#d4d4d4"/><rect x="2784.0" y="603.0" width="6.0" height="1.1" fill="#d4d4d4"/><rect x="2790.0" y="603.0" width="1.0" height="1.1" fill="#179fff"/><rect x="2791.0" y="603.0" width="18.0" height="1.1" fill="#ce9178"/><rect x="2809.0" y="603.0" width="1.0" height="1.1" fill="#d4d4d4"/><rect x="2811.0" y="603.0" width="11.0" height="1.1" fill="#d4d4d4"/><rect x="2822.0" y="603.0" width="1.0" height="1.1" fill="#179fff"/><rect x="2823.0" y="603.0" width="1.0" height="1.1" fill="#d4d4d4"/><rect x="2784.0" y="607.0" width="2.0" height="1.1" fill="#569cd6"/><rect x="2787.0" y="607.0" width="1.0" height="1.1" fill="#179fff"/><rect x="2788.0" y="607.0" width="11.0" height="1.1" fill="#d4d4d4"/><rect x="2800.0" y="607.0" width="1.0" height="1.1" fill="#d4d4d4"/><rect x="2801.0" y="607.0" width="1.0" height="1.1" fill="#d4d4d4"/><rect x="2803.0" y="607.0" width="11.0" height="1.1" fill="#d4d4d4"/><rect x="2814.0" y="607.0" width="1.0" height="1.1" fill="#d4d4d4"/><rect x="2815.0" y="607.0" width="6.0" height="1.1" fill="#d4d4d4"/><rect x="2822.0" y="607.0" width="1.0" height="1.1" fill="#d4d4d4"/><rect x="2824.0" y="607.0" width="1.0" height="1.1" fill="#b5cea8"/><rect x="2825.0" y="607.0" width="1.0" height="1.1" fill="#179fff"/><rect x="2827.0" y="607.0" width="1.0" height="1.1" fill="#179fff"/><rect x="2788.0" y="609.0" width="6.0" height="1.1" fill="#d4d4d4"/><rect x="2794.0" y="609.0" width="1.0" height="1.1" fill="#ffd700"/><rect x="2795.0" y="609.0" width="5.0" height="1.1" fill="#ce9178"/><rect x="2801.0" y="609.0" width="1.0" height="1.1" fill="#ce9178"/><rect x="2803.0" y="609.0" width="1.0" height="1.1" fill="#d4d4d4"/><rect x="2805.0" y="609.0" width="11.0" height="1.1" fill="#d4d4d4"/><rect x="2816.0" y="609.0" width="1.0" height="1.1" fill="#d4d4d4"/><rect x="2817.0" y="609.0" width="6.0" height="1.1" fill="#d4d4d4"/><rect x="2824.0" y="609.0" width="1.0" height="1.1" fill="#d4d4d4"/><rect x="2826.0" y="609.0" width="1.0" height="1.1" fill="#ce9178"/><rect x="2828.0" y="609.0" width="11.0" height="1.1" fill="#ce9178"/><rect x="2839.0" y="609.0" width="1.0" height="1.1" fill="#ffd700"/><rect x="2840.0" y="609.0" width="1.0" height="1.1" fill="#d4d4d4"/><rect x="2788.0" y="611.0" width="3.0" height="1.1" fill="#569cd6"/><rect x="2792.0" y="611.0" width="1.0" height="1.1" fill="#ffd700"/><rect x="2793.0" y="611.0" width="3.0" height="1.1" fill="#569cd6"/><rect x="2797.0" y="611.0" width="1.0" height="1.1" fill="#d4d4d4"/><rect x="2799.0" y="611.0" width="1.0" height="1.1" fill="#d4d4d4"/><rect x="2801.0" y="611.0" width="1.0" height="1.1" fill="#b5cea8"/><rect x="2802.0" y="611.0" width="1.0" height="1.1" fill="#d4d4d4"/><rect x="2804.0" y="611.0" width="1.0" height="1.1" fill="#d4d4d4"/><rect x="2806.0" y="611.0" width="1.0" height="1.1" fill="#d4d4d4"/><rect x="2808.0" y="611.0" width="11.0" height="1.1" fill="#d4d4d4"/><rect x="2819.0" y="611.0" width="1.0" height="1.1" fill="#d4d4d4"/><rect x="2820.0" y="611.0" width="6.0" height="1.1" fill="#d4d4d4"/><rect x="2826.0" y="611.0" width="1.0" height="1.1" fill="#d4d4d4"/><rect x="2828.0" y="611.0" width="1.0" height="1.1" fill="#d4d4d4"/><rect x="2829.0" y="611.0" width="1.0" height="1.1" fill="#d4d4d4"/><rect x="2830.0" y="611.0" width="1.0" height="1.1" fill="#d4d4d4"/><rect x="2831.0" y="611.0" width="1.0" height="1.1" fill="#ffd700"/><rect x="2833.0" y="611.0" width="1.0" height="1.1" fill="#ffd700"/><rect x="2792.0" y="613.0" width="3.0" height="1.1" fill="#569cd6"/><rect x="2796.0" y="613.0" width="6.0" height="1.1" fill="#d4d4d4"/><rect x="2803.0" y="613.0" width="1.0" height="1.1" fill="#d4d4d4"/><rect x="2805.0" y="613.0" width="11.0" height="1.1" fill="#d4d4d4"/><rect x="2816.0" y="613.0" width="1.0" height="1.1" fill="#da70d6"/><rect x="2817.0" y="613.0" width="1.0" height="1.1" fill="#d4d4d4"/><rect x="2818.0" y="613.0" width="1.0" height="1.1" fill="#da70d6"/><rect x="2819.0" y="613.0" width="1.0" height="1.1" fill="#d4d4d4"/><rect x="2792.0" y="615.0" width="6.0" height="1.1" fill="#d4d4d4"/><rect x="2798.0" y="615.0" width="1.0" height="1.1" fill="#da70d6"/><rect x="2799.0" y="615.0" width="1.0" height="1.1" fill="#ce9178"/><rect x="2802.0" y="615.0" width="5.0" height="1.1" fill="#ce9178"/><rect x="2808.0" y="615.0" width="1.0" height="1.1" fill="#d4d4d4"/><rect x="2810.0" y="615.0" width="1.0" height="1.1" fill="#179fff"/><rect x="2811.0" y="615.0" width="1.0" height="1.1" fill="#d4d4d4"/><rect x="2812.0" y="615.0" width="1.0" height="1.1" fill="#d4d4d4"/><rect x="2813.0" y="615.0" width="1.0" height="1.1" fill="#b5cea8"/><rect x="2814.0" y="615.0" width="1.0" height="1.1" fill="#179fff"/><rect x="2816.0" y="615.0" width="1.0" height="1.1" fill="#d4d4d4"/><rect x="2818.0" y="615.0" width="11.0" height="1.1" fill="#ce9178"/><rect x="2830.0" y="615.0" width="1.0" height="1.1" fill="#d4d4d4"/><rect x="2832.0" y="615.0" width="6.0" height="1.1" fill="#d4d4d4"/><rect x="2838.0" y="615.0" width="1.0" height="1.1" fill="#d4d4d4"/><rect x="2839.0" y="615.0" width="5.0" height="1.1" fill="#d4d4d4"/><rect x="2844.0" y="615.0" width="1.0" height="1.1" fill="#179fff"/><rect x="2845.0" y="615.0" width="1.0" height="1.1" fill="#179fff"/><rect x="2847.0" y="615.0" width="1.0" height="1.1" fill="#d4d4d4"/><rect x="2849.0" y="615.0" width="2.0" height="1.1" fill="#ce9178"/><rect x="2852.0" y="615.0" width="6.0" height="1.1" fill="#ce9178"/><rect x="2859.0" y="615.0" width="1.0" height="1.1" fill="#d4d4d4"/><rect x="2861.0" y="615.0" width="6.0" height="1.1" fill="#d4d4d4"/><rect x="2867.0" y="615.0" width="1.0" height="1.1" fill="#d4d4d4"/><rect x="2868.0" y="615.0" width="7.0" height="1.1" fill="#d4d4d4"/><rect x="2875.0" y="615.0" width="1.0" height="1.1" fill="#179fff"/><rect x="2876.0" y="615.0" width="1.0" height="1.1" fill="#179fff"/><rect x="2877.0" y="615.0" width="1.0" height="1.1" fill="#d4d4d4"/><rect x="2878.0" y="615.0" width="8.0" height="1.1" fill="#d4d4d4"/><rect x="2886.0" y="615.0" width="1.0" height="1.1" fill="#179fff"/><rect x="2788.0" y="617.0" width="1.0" height="1.1" fill="#ffd700"/><rect x="2784.0" y="619.0" width="1.0" height="1.1" fill="#179fff"/><rect x="2786.0" y="619.0" width="4.0" height="1.1" fill="#569cd6"/><rect x="2791.0" y="619.0" width="1.0" height="1.1" fill="#179fff"/><rect x="2788.0" y="621.0" width="6.0" height="1.1" fill="#d4d4d4"/><rect x="2794.0" y="621.0" width="1.0" height="1.1" fill="#ffd700"/><rect x="2795.0" y="621.0" width="16.0" height="1.1" fill="#ce9178"/><rect x="2811.0" y="621.0" width="1.0" height="1.1" fill="#ffd700"/><rect x="2812.0" y="621.0" width="1.0" height="1.1" fill="#d4d4d4"/><rect x="2784.0" y="623.0" width="1.0" height="1.1" fill="#179fff"/><rect x="2780.0" y="625.0" width="1.0" height="1.1" fill="#da70d6"/><rect x="2782.0" y="625.0" width="5.0" height="1.1" fill="#569cd6"/><rect x="2788.0" y="625.0" width="1.0" height="1.1" fill="#da70d6"/><rect x="2789.0" y="625.0" width="5.0" height="1.1" fill="#d4d4d4"/><rect x="2794.0" y="625.0" width="1.0" height="1.1" fill="#da70d6"/><rect x="2796.0" y="625.0" width="1.0" height="1.1" fill="#da70d6"/><rect x="2784.0" y="627.0" width="6.0" height="1.1" fill="#d4d4d4"/><rect x="2790.0" y="627.0" width="1.0" height="1.1" fill="#179fff"/><rect x="2791.0" y="627.0" width="24.0" height="1.1" fill="#ce9178"/><rect x="2816.0" y="627.0" width="1.0" height="1.1" fill="#d4d4d4"/><rect x="2818.0" y="627.0" width="5.0" height="1.1" fill="#d4d4d4"/><rect x="2823.0" y="627.0" width="1.0" height="1.1" fill="#d4d4d4"/><rect x="2824.0" y="627.0" width="7.0" height="1.1" fill="#d4d4d4"/><rect x="2831.0" y="627.0" width="1.0" height="1.1" fill="#179fff"/><rect x="2832.0" y="627.0" width="1.0" height="1.1" fill="#d4d4d4"/><rect x="2780.0" y="629.0" width="1.0" height="1.1" fill="#da70d6"/><rect x="2776.0" y="631.0" width="1.0" height="1.1" fill="#ffd700"/><rect x="2776.0" y="635.0" width="19.0" height="1.1" fill="#d4d4d4"/><rect x="2795.0" y="635.0" width="1.0" height="1.1" fill="#ffd700"/><rect x="2796.0" y="635.0" width="1.0" height="1.1" fill="#ffd700"/><rect x="2797.0" y="635.0" width="1.0" height="1.1" fill="#d4d4d4"/><rect x="2776.0" y="641.0" width="2.0" height="1.1" fill="#6a9955"/><rect x="2779.0" y="641.0" width="26.0" height="1.1" fill="#6a9955"/><rect x="2806.0" y="641.0" width="1.0" height="1.1" fill="#6a9955"/><rect x="2808.0" y="641.0" width="28.0" height="1.1" fill="#6a9955"/><rect x="2776.0" y="643.0" width="2.0" height="1.1" fill="#6a9955"/><rect x="2776.0" y="645.0" width="4.0" height="1.1" fill="#6a9955"/><rect x="2781.0" y="645.0" width="8.0" height="1.1" fill="#6a9955"/><rect x="2776.0" y="647.0" width="8.0" height="1.1" fill="#6a9955"/><rect x="2785.0" y="647.0" width="48.0" height="1.1" fill="#6a9955"/><rect x="2776.0" y="649.0" width="8.0" height="1.1" fill="#6a9955"/><rect x="2785.0" y="649.0" width="8.0" height="1.1" fill="#6a9955"/><rect x="2794.0" y="649.0" width="19.0" height="1.1" fill="#6a9955"/><rect x="2814.0" y="649.0" width="7.0" height="1.1" fill="#6a9955"/><rect x="2822.0" y="649.0" width="7.0" height="1.1" fill="#6a9955"/><rect x="2776.0" y="651.0" width="6.0" height="1.1" fill="#6a9955"/><rect x="2783.0" y="651.0" width="60.0" height="1.1" fill="#6a9955"/><rect x="2776.0" y="653.0" width="4.0" height="1.1" fill="#6a9955"/><rect x="2781.0" y="653.0" width="1.0" height="1.1" fill="#6a9955"/><rect x="2783.0" y="653.0" width="6.0" height="1.1" fill="#6a9955"/><rect x="2790.0" y="653.0" width="28.0" height="1.1" fill="#6a9955"/><rect x="2776.0" y="655.0" width="2.0" height="1.1" fill="#6a9955"/><rect x="2776.0" y="657.0" width="2.0" height="1.1" fill="#6a9955"/><rect x="2779.0" y="657.0" width="20.0" height="1.1" fill="#6a9955"/><rect x="2776.0" y="659.0" width="8.0" height="1.1" fill="#569cd6"/><rect x="2785.0" y="659.0" width="19.0" height="1.1" fill="#d4d4d4"/><rect x="2804.0" y="659.0" width="1.0" height="1.1" fill="#ffd700"/><rect x="2805.0" y="659.0" width="1.0" height="1.1" fill="#ffd700"/><rect x="2807.0" y="659.0" width="1.0" height="1.1" fill="#ffd700"/><rect x="2780.0" y="661.0" width="6.0" height="1.1" fill="#d4d4d4"/><rect x="2786.0" y="661.0" width="1.0" height="1.1" fill="#da70d6"/><rect x="2787.0" y="661.0" width="4.0" height="1.1" fill="#ce9178"/><rect x="2792.0" y="661.0" width="12.0" height="1.1" fill="#ce9178"/><rect x="2805.0" y="661.0" width="8.0" height="1.1" fill="#ce9178"/><rect x="2814.0" y="661.0" width="4.0" height="1.1" fill="#ce9178"/><rect x="2818.0" y="661.0" width="1.0" height="1.1" fill="#da70d6"/><rect x="2819.0" y="661.0" width="1.0" height="1.1" fill="#d4d4d4"/><rect x="2780.0" y="663.0" width="3.0" height="1.1" fill="#569cd6"/><rect x="2784.0" y="663.0" width="1.0" height="1.1" fill="#da70d6"/><rect x="2784.0" y="665.0" width="2.0" height="1.1" fill="#6a9955"/><rect x="2787.0" y="665.0" width="18.0" height="1.1" fill="#6a9955"/><rect x="2784.0" y="667.0" width="3.0" height="1.1" fill="#569cd6"/><rect x="2788.0" y="667.0" width="11.0" height="1.1" fill="#d4d4d4"/><rect x="2800.0" y="667.0" width="1.0" height="1.1" fill="#d4d4d4"/><rect x="2802.0" y="667.0" width="6.0" height="1.1" fill="#d4d4d4"/><rect x="2808.0" y="667.0" width="1.0" height="1.1" fill="#d4d4d4"/><rect x="2809.0" y="667.0" width="12.0" height="1.1" fill="#d4d4d4"/><rect x="2821.0" y="667.0" width="1.0" height="1.1" fill="#179fff"/><rect x="2822.0" y="667.0" width="15.0" height="1.1" fill="#ce9178"/><rect x="2837.0" y="667.0" width="1.0" height="1.1" fill="#179fff"/><rect x="2838.0" y="667.0" width="1.0" height="1.1" fill="#d4d4d4"/><rect x="2784.0" y="673.0" width="2.0" height="1.1" fill="#569cd6"/><rect x="2787.0" y="673.0" width="1.0" height="1.1" fill="#179fff"/><rect x="2788.0" y="673.0" width="11.0" height="1.1" fill="#d4d4d4"/><rect x="2800.0" y="673.0" width="1.0" height="1.1" fill="#d4d4d4"/><rect x="2801.0" y="673.0" width="1.0" height="1.1" fill="#d4d4d4"/><rect x="2803.0" y="673.0" width="11.0" height="1.1" fill="#d4d4d4"/><rect x="2814.0" y="673.0" width="1.0" height="1.1" fill="#d4d4d4"/><rect x="2815.0" y="673.0" width="6.0" height="1.1" fill="#d4d4d4"/><rect x="2822.0" y="673.0" width="1.0" height="1.1" fill="#d4d4d4"/><rect x="2824.0" y="673.0" width="1.0" height="1.1" fill="#b5cea8"/><rect x="2825.0" y="673.0" width="1.0" height="1.1" fill="#179fff"/><rect x="2827.0" y="673.0" width="1.0" height="1.1" fill="#179fff"/><rect x="2788.0" y="675.0" width="6.0" height="1.1" fill="#d4d4d4"/><rect x="2794.0" y="675.0" width="1.0" height="1.1" fill="#ffd700"/><rect x="2795.0" y="675.0" width="5.0" height="1.1" fill="#ce9178"/><rect x="2801.0" y="675.0" width="1.0" height="1.1" fill="#ce9178"/><rect x="2803.0" y="675.0" width="1.0" height="1.1" fill="#d4d4d4"/><rect x="2805.0" y="675.0" width="11.0" height="1.1" fill="#d4d4d4"/><rect x="2816.0" y="675.0" width="1.0" height="1.1" fill="#d4d4d4"/><rect x="2817.0" y="675.0" width="6.0" height="1.1" fill="#d4d4d4"/><rect x="2824.0" y="675.0" width="1.0" height="1.1" fill="#d4d4d4"/><rect x="2826.0" y="675.0" width="1.0" height="1.1" fill="#ce9178"/><rect x="2828.0" y="675.0" width="11.0" height="1.1" fill="#ce9178"/><rect x="2839.0" y="675.0" width="1.0" height="1.1" fill="#ffd700"/><rect x="2840.0" y="675.0" width="1.0" height="1.1" fill="#d4d4d4"/><rect x="2788.0" y="677.0" width="3.0" height="1.1" fill="#569cd6"/><rect x="2792.0" y="677.0" width="1.0" height="1.1" fill="#ffd700"/><rect x="2793.0" y="677.0" width="3.0" height="1.1" fill="#569cd6"/><rect x="2797.0" y="677.0" width="1.0" height="1.1" fill="#d4d4d4"/><rect x="2792.0" y="679.0" width="3.0" height="1.1" fill="#569cd6"/><rect x="2796.0" y="679.0" width="6.0" height="1.1" fill="#d4d4d4"/><rect x="2803.0" y="679.0" width="1.0" height="1.1" fill="#d4d4d4"/><rect x="2805.0" y="679.0" width="11.0" height="1.1" fill="#d4d4d4"/><rect x="2816.0" y="679.0" width="1.0" height="1.1" fill="#da70d6"/><rect x="2817.0" y="679.0" width="1.0" height="1.1" fill="#d4d4d4"/><rect x="2818.0" y="679.0" width="1.0" height="1.1" fill="#da70d6"/><rect x="2819.0" y="679.0" width="1.0" height="1.1" fill="#d4d4d4"/><rect x="2792.0" y="681.0" width="6.0" height="1.1" fill="#d4d4d4"/><rect x="2798.0" y="681.0" width="1.0" height="1.1" fill="#da70d6"/><rect x="2799.0" y="681.0" width="1.0" height="1.1" fill="#ce9178"/><rect x="2802.0" y="681.0" width="5.0" height="1.1" fill="#ce9178"/><rect x="2808.0" y="681.0" width="1.0" height="1.1" fill="#d4d4d4"/><rect x="2810.0" y="681.0" width="1.0" height="1.1" fill="#179fff"/><rect x="2811.0" y="681.0" width="1.0" height="1.1" fill="#d4d4d4"/><rect x="2812.0" y="681.0" width="1.0" height="1.1" fill="#d4d4d4"/><rect x="2813.0" y="681.0" width="1.0" height="1.1" fill="#b5cea8"/><rect x="2814.0" y="681.0" width="1.0" height="1.1" fill="#179fff"/><rect x="2788.0" y="683.0" width="1.0" height="1.1" fill="#ffd700"/><rect x="2784.0" y="685.0" width="1.0" height="1.1" fill="#179fff"/><rect x="2786.0" y="685.0" width="4.0" height="1.1" fill="#569cd6"/><rect x="2791.0" y="685.0" width="1.0" height="1.1" fill="#179fff"/><rect x="2788.0" y="687.0" width="6.0" height="1.1" fill="#d4d4d4"/><rect x="2794.0" y="687.0" width="1.0" height="1.1" fill="#ffd700"/><rect x="2795.0" y="687.0" width="16.0" height="1.1" fill="#ce9178"/><rect x="2811.0" y="687.0" width="1.0" height="1.1" fill="#ffd700"/><rect x="2812.0" y="687.0" width="1.0" height="1.1" fill="#d4d4d4"/><rect x="2784.0" y="689.0" width="1.0" height="1.1" fill="#179fff"/><rect x="2784.0" y="691.0" width="3.0" height="1.1" fill="#569cd6"/><rect x="2788.0" y="691.0" width="11.0" height="1.1" fill="#d4d4d4"/><rect x="2800.0" y="691.0" width="1.0" height="1.1" fill="#d4d4d4"/><rect x="2802.0" y="691.0" width="6.0" height="1.1" fill="#d4d4d4"/><rect x="2808.0" y="691.0" width="1.0" height="1.1" fill="#d4d4d4"/><rect x="2809.0" y="691.0" width="12.0" height="1.1" fill="#d4d4d4"/><rect x="2821.0" y="691.0" width="1.0" height="1.1" fill="#179fff"/><rect x="2822.0" y="691.0" width="15.0" height="1.1" fill="#ce9178"/><rect x="2837.0" y="691.0" width="1.0" height="1.1" fill="#179fff"/><rect x="2838.0" y="691.0" width="1.0" height="1.1" fill="#d4d4d4"/><rect x="2784.0" y="693.0" width="6.0" height="1.1" fill="#d4d4d4"/><rect x="2790.0" y="693.0" width="1.0" height="1.1" fill="#179fff"/><rect x="2791.0" y="693.0" width="18.0" height="1.1" fill="#ce9178"/><rect x="2809.0" y="693.0" width="1.0" height="1.1" fill="#d4d4d4"/><rect x="2811.0" y="693.0" width="11.0" height="1.1" fill="#d4d4d4"/><rect x="2822.0" y="693.0" width="1.0" height="1.1" fill="#179fff"/><rect x="2823.0" y="693.0" width="1.0" height="1.1" fill="#d4d4d4"/><rect x="2784.0" y="697.0" width="2.0" height="1.1" fill="#569cd6"/><rect x="2787.0" y="697.0" width="1.0" height="1.1" fill="#179fff"/><rect x="2788.0" y="697.0" width="11.0" height="1.1" fill="#d4d4d4"/><rect x="2800.0" y="697.0" width="1.0" height="1.1" fill="#d4d4d4"/><rect x="2801.0" y="697.0" width="1.0" height="1.1" fill="#d4d4d4"/><rect x="2803.0" y="697.0" width="11.0" height="1.1" fill="#d4d4d4"/><rect x="2814.0" y="697.0" width="1.0" height="1.1" fill="#d4d4d4"/><rect x="2815.0" y="697.0" width="6.0" height="1.1" fill="#d4d4d4"/><rect x="2822.0" y="697.0" width="1.0" height="1.1" fill="#d4d4d4"/><rect x="2824.0" y="697.0" width="1.0" height="1.1" fill="#b5cea8"/><rect x="2825.0" y="697.0" width="1.0" height="1.1" fill="#179fff"/><rect x="2827.0" y="697.0" width="1.0" height="1.1" fill="#179fff"/><rect x="2788.0" y="699.0" width="6.0" height="1.1" fill="#d4d4d4"/><rect x="2794.0" y="699.0" width="1.0" height="1.1" fill="#ffd700"/><rect x="2795.0" y="699.0" width="5.0" height="1.1" fill="#ce9178"/><rect x="2801.0" y="699.0" width="1.0" height="1.1" fill="#ce9178"/><rect x="2803.0" y="699.0" width="1.0" height="1.1" fill="#d4d4d4"/><rect x="2805.0" y="699.0" width="11.0" height="1.1" fill="#d4d4d4"/><rect x="2816.0" y="699.0" width="1.0" height="1.1" fill="#d4d4d4"/><rect x="2817.0" y="699.0" width="6.0" height="1.1" fill="#d4d4d4"/><rect x="2824.0" y="699.0" width="1.0" height="1.1" fill="#d4d4d4"/><rect x="2826.0" y="699.0" width="1.0" height="1.1" fill="#ce9178"/><rect x="2828.0" y="699.0" width="11.0" height="1.1" fill="#ce9178"/><rect x="2839.0" y="699.0" width="1.0" height="1.1" fill="#ffd700"/><rect x="2840.0" y="699.0" width="1.0" height="1.1" fill="#d4d4d4"/><rect x="2788.0" y="701.0" width="3.0" height="1.1" fill="#569cd6"/><rect x="2792.0" y="701.0" width="1.0" height="1.1" fill="#ffd700"/><rect x="2793.0" y="701.0" width="3.0" height="1.1" fill="#569cd6"/><rect x="2797.0" y="701.0" width="1.0" height="1.1" fill="#d4d4d4"/><rect x="2792.0" y="703.0" width="3.0" height="1.1" fill="#569cd6"/><rect x="2796.0" y="703.0" width="6.0" height="1.1" fill="#d4d4d4"/><rect x="2803.0" y="703.0" width="1.0" height="1.1" fill="#d4d4d4"/><rect x="2805.0" y="703.0" width="11.0" height="1.1" fill="#d4d4d4"/><rect x="2816.0" y="703.0" width="1.0" height="1.1" fill="#da70d6"/><rect x="2817.0" y="703.0" width="1.0" height="1.1" fill="#d4d4d4"/><rect x="2818.0" y="703.0" width="1.0" height="1.1" fill="#da70d6"/><rect x="2819.0" y="703.0" width="1.0" height="1.1" fill="#d4d4d4"/><rect x="2792.0" y="705.0" width="6.0" height="1.1" fill="#d4d4d4"/><rect x="2798.0" y="705.0" width="1.0" height="1.1" fill="#da70d6"/><rect x="2799.0" y="705.0" width="1.0" height="1.1" fill="#ce9178"/><rect x="2802.0" y="705.0" width="5.0" height="1.1" fill="#ce9178"/><rect x="2808.0" y="705.0" width="1.0" height="1.1" fill="#d4d4d4"/><rect x="2810.0" y="705.0" width="1.0" height="1.1" fill="#179fff"/><rect x="2811.0" y="705.0" width="1.0" height="1.1" fill="#d4d4d4"/><rect x="2812.0" y="705.0" width="1.0" height="1.1" fill="#d4d4d4"/><rect x="2813.0" y="705.0" width="1.0" height="1.1" fill="#b5cea8"/><rect x="2814.0" y="705.0" width="1.0" height="1.1" fill="#179fff"/><rect x="2816.0" y="705.0" width="1.0" height="1.1" fill="#d4d4d4"/><rect x="2818.0" y="705.0" width="11.0" height="1.1" fill="#ce9178"/><rect x="2830.0" y="705.0" width="1.0" height="1.1" fill="#d4d4d4"/><rect x="2832.0" y="705.0" width="6.0" height="1.1" fill="#d4d4d4"/><rect x="2838.0" y="705.0" width="1.0" height="1.1" fill="#d4d4d4"/><rect x="2839.0" y="705.0" width="5.0" height="1.1" fill="#d4d4d4"/><rect x="2844.0" y="705.0" width="1.0" height="1.1" fill="#179fff"/><rect x="2845.0" y="705.0" width="1.0" height="1.1" fill="#179fff"/><rect x="2847.0" y="705.0" width="1.0" height="1.1" fill="#d4d4d4"/><rect x="2849.0" y="705.0" width="2.0" height="1.1" fill="#ce9178"/><rect x="2852.0" y="705.0" width="6.0" height="1.1" fill="#ce9178"/><rect x="2859.0" y="705.0" width="1.0" height="1.1" fill="#d4d4d4"/><rect x="2861.0" y="705.0" width="6.0" height="1.1" fill="#d4d4d4"/><rect x="2867.0" y="705.0" width="1.0" height="1.1" fill="#d4d4d4"/><rect x="2868.0" y="705.0" width="7.0" height="1.1" fill="#d4d4d4"/><rect x="2875.0" y="705.0" width="1.0" height="1.1" fill="#179fff"/><rect x="2876.0" y="705.0" width="1.0" height="1.1" fill="#179fff"/><rect x="2877.0" y="705.0" width="1.0" height="1.1" fill="#d4d4d4"/><rect x="2878.0" y="705.0" width="8.0" height="1.1" fill="#d4d4d4"/><rect x="2886.0" y="705.0" width="1.0" height="1.1" fill="#179fff"/><rect x="2788.0" y="707.0" width="1.0" height="1.1" fill="#ffd700"/><rect x="2784.0" y="709.0" width="1.0" height="1.1" fill="#179fff"/><rect x="2786.0" y="709.0" width="4.0" height="1.1" fill="#569cd6"/><rect x="2791.0" y="709.0" width="1.0" height="1.1" fill="#179fff"/><rect x="2788.0" y="711.0" width="6.0" height="1.1" fill="#d4d4d4"/><rect x="2794.0" y="711.0" width="1.0" height="1.1" fill="#ffd700"/><rect x="2795.0" y="711.0" width="16.0" height="1.1" fill="#ce9178"/><rect x="2811.0" y="711.0" width="1.0" height="1.1" fill="#ffd700"/><rect x="2812.0" y="711.0" width="1.0" height="1.1" fill="#d4d4d4"/><rect x="2784.0" y="713.0" width="1.0" height="1.1" fill="#179fff"/><rect x="2780.0" y="715.0" width="1.0" height="1.1" fill="#da70d6"/><rect x="2782.0" y="715.0" width="5.0" height="1.1" fill="#569cd6"/><rect x="2788.0" y="715.0" width="1.0" height="1.1" fill="#da70d6"/><rect x="2789.0" y="715.0" width="5.0" height="1.1" fill="#d4d4d4"/><rect x="2794.0" y="715.0" width="1.0" height="1.1" fill="#da70d6"/><rect x="2796.0" y="715.0" width="1.0" height="1.1" fill="#da70d6"/><rect x="2784.0" y="717.0" width="6.0" height="1.1" fill="#d4d4d4"/><rect x="2790.0" y="717.0" width="1.0" height="1.1" fill="#179fff"/><rect x="2791.0" y="717.0" width="24.0" height="1.1" fill="#ce9178"/><rect x="2816.0" y="717.0" width="1.0" height="1.1" fill="#d4d4d4"/><rect x="2818.0" y="717.0" width="5.0" height="1.1" fill="#d4d4d4"/><rect x="2823.0" y="717.0" width="1.0" height="1.1" fill="#d4d4d4"/><rect x="2824.0" y="717.0" width="7.0" height="1.1" fill="#d4d4d4"/><rect x="2831.0" y="717.0" width="1.0" height="1.1" fill="#179fff"/><rect x="2832.0" y="717.0" width="1.0" height="1.1" fill="#d4d4d4"/><rect x="2780.0" y="719.0" width="1.0" height="1.1" fill="#da70d6"/><rect x="2776.0" y="721.0" width="1.0" height="1.1" fill="#ffd700"/><rect x="2776.0" y="725.0" width="19.0" height="1.1" fill="#d4d4d4"/><rect x="2795.0" y="725.0" width="1.0" height="1.1" fill="#ffd700"/><rect x="2796.0" y="725.0" width="1.0" height="1.1" fill="#ffd700"/><rect x="2797.0" y="725.0" width="1.0" height="1.1" fill="#d4d4d4"/><rect x="2776.0" y="731.0" width="2.0" height="1.1" fill="#6a9955"/><rect x="2779.0" y="731.0" width="26.0" height="1.1" fill="#6a9955"/><rect x="2806.0" y="731.0" width="1.0" height="1.1" fill="#6a9955"/><rect x="2808.0" y="731.0" width="28.0" height="1.1" fill="#6a9955"/><rect x="2776.0" y="733.0" width="2.0" height="1.1" fill="#6a9955"/><rect x="2776.0" y="735.0" width="4.0" height="1.1" fill="#6a9955"/><rect x="2781.0" y="735.0" width="8.0" height="1.1" fill="#6a9955"/><rect x="2776.0" y="737.0" width="8.0" height="1.1" fill="#6a9955"/><rect x="2785.0" y="737.0" width="48.0" height="1.1" fill="#6a9955"/><rect x="2776.0" y="739.0" width="8.0" height="1.1" fill="#6a9955"/><rect x="2785.0" y="739.0" width="8.0" height="1.1" fill="#6a9955"/><rect x="2794.0" y="739.0" width="19.0" height="1.1" fill="#6a9955"/><rect x="2814.0" y="739.0" width="7.0" height="1.1" fill="#6a9955"/><rect x="2822.0" y="739.0" width="7.0" height="1.1" fill="#6a9955"/><rect x="2776.0" y="741.0" width="6.0" height="1.1" fill="#6a9955"/><rect x="2783.0" y="741.0" width="60.0" height="1.1" fill="#6a9955"/><rect x="2776.0" y="743.0" width="4.0" height="1.1" fill="#6a9955"/><rect x="2781.0" y="743.0" width="1.0" height="1.1" fill="#6a9955"/><rect x="2783.0" y="743.0" width="6.0" height="1.1" fill="#6a9955"/><rect x="2790.0" y="743.0" width="28.0" height="1.1" fill="#6a9955"/><rect x="2776.0" y="745.0" width="2.0" height="1.1" fill="#6a9955"/><rect x="2776.0" y="747.0" width="2.0" height="1.1" fill="#6a9955"/><rect x="2779.0" y="747.0" width="20.0" height="1.1" fill="#6a9955"/><rect x="2776.0" y="749.0" width="8.0" height="1.1" fill="#569cd6"/><rect x="2785.0" y="749.0" width="19.0" height="1.1" fill="#d4d4d4"/><rect x="2804.0" y="749.0" width="1.0" height="1.1" fill="#ffd700"/><rect x="2805.0" y="749.0" width="1.0" height="1.1" fill="#ffd700"/><rect x="2807.0" y="749.0" width="1.0" height="1.1" fill="#ffd700"/><rect x="2780.0" y="751.0" width="6.0" height="1.1" fill="#d4d4d4"/><rect x="2786.0" y="751.0" width="1.0" height="1.1" fill="#da70d6"/><rect x="2787.0" y="751.0" width="4.0" height="1.1" fill="#ce9178"/><rect x="2792.0" y="751.0" width="12.0" height="1.1" fill="#ce9178"/><rect x="2805.0" y="751.0" width="8.0" height="1.1" fill="#ce9178"/><rect x="2814.0" y="751.0" width="4.0" height="1.1" fill="#ce9178"/><rect x="2818.0" y="751.0" width="1.0" height="1.1" fill="#da70d6"/><rect x="2819.0" y="751.0" width="1.0" height="1.1" fill="#d4d4d4"/><rect x="2780.0" y="753.0" width="3.0" height="1.1" fill="#569cd6"/><rect x="2784.0" y="753.0" width="1.0" height="1.1" fill="#da70d6"/><rect x="2784.0" y="755.0" width="2.0" height="1.1" fill="#6a9955"/><rect x="2787.0" y="755.0" width="18.0" height="1.1" fill="#6a9955"/><rect x="2784.0" y="757.0" width="3.0" height="1.1" fill="#569cd6"/><rect x="2788.0" y="757.0" width="11.0" height="1.1" fill="#d4d4d4"/><rect x="2800.0" y="757.0" width="1.0" height="1.1" fill="#d4d4d4"/><rect x="2802.0" y="757.0" width="6.0" height="1.1" fill="#d4d4d4"/><rect x="2808.0" y="757.0" width="1.0" height="1.1" fill="#d4d4d4"/><rect x="2809.0" y="757.0" width="12.0" height="1.1" fill="#d4d4d4"/><rect x="2821.0" y="757.0" width="1.0" height="1.1" fill="#179fff"/><rect x="2822.0" y="757.0" width="15.0" height="1.1" fill="#ce9178"/><rect x="2837.0" y="757.0" width="1.0" height="1.1" fill="#179fff"/><rect x="2838.0" y="757.0" width="1.0" height="1.1" fill="#d4d4d4"/><rect x="2784.0" y="763.0" width="2.0" height="1.1" fill="#569cd6"/><rect x="2787.0" y="763.0" width="1.0" height="1.1" fill="#179fff"/><rect x="2788.0" y="763.0" width="11.0" height="1.1" fill="#d4d4d4"/><rect x="2800.0" y="763.0" width="1.0" height="1.1" fill="#d4d4d4"/><rect x="2801.0" y="763.0" width="1.0" height="1.1" fill="#d4d4d4"/><rect x="2803.0" y="763.0" width="11.0" height="1.1" fill="#d4d4d4"/><rect x="2814.0" y="763.0" width="1.0" height="1.1" fill="#d4d4d4"/><rect x="2815.0" y="763.0" width="6.0" height="1.1" fill="#d4d4d4"/><rect x="2822.0" y="763.0" width="1.0" height="1.1" fill="#d4d4d4"/><rect x="2824.0" y="763.0" width="1.0" height="1.1" fill="#b5cea8"/><rect x="2825.0" y="763.0" width="1.0" height="1.1" fill="#179fff"/><rect x="2827.0" y="763.0" width="1.0" height="1.1" fill="#179fff"/><rect x="2788.0" y="765.0" width="6.0" height="1.1" fill="#d4d4d4"/><rect x="2794.0" y="765.0" width="1.0" height="1.1" fill="#ffd700"/><rect x="2795.0" y="765.0" width="5.0" height="1.1" fill="#ce9178"/><rect x="2801.0" y="765.0" width="1.0" height="1.1" fill="#ce9178"/><rect x="2803.0" y="765.0" width="1.0" height="1.1" fill="#d4d4d4"/><rect x="2805.0" y="765.0" width="11.0" height="1.1" fill="#d4d4d4"/><rect x="2816.0" y="765.0" width="1.0" height="1.1" fill="#d4d4d4"/><rect x="2817.0" y="765.0" width="6.0" height="1.1" fill="#d4d4d4"/><rect x="2824.0" y="765.0" width="1.0" height="1.1" fill="#d4d4d4"/><rect x="2826.0" y="765.0" width="1.0" height="1.1" fill="#ce9178"/><rect x="2828.0" y="765.0" width="11.0" height="1.1" fill="#ce9178"/><rect x="2839.0" y="765.0" width="1.0" height="1.1" fill="#ffd700"/><rect x="2840.0" y="765.0" width="1.0" height="1.1" fill="#d4d4d4"/><rect x="2788.0" y="767.0" width="3.0" height="1.1" fill="#569cd6"/><rect x="2792.0" y="767.0" width="1.0" height="1.1" fill="#ffd700"/><rect x="2793.0" y="767.0" width="3.0" height="1.1" fill="#569cd6"/><rect x="2797.0" y="767.0" width="1.0" height="1.1" fill="#d4d4d4"/><rect x="2799.0" y="767.0" width="1.0" height="1.1" fill="#d4d4d4"/><rect x="2801.0" y="767.0" width="1.0" height="1.1" fill="#b5cea8"/><rect x="2802.0" y="767.0" width="1.0" height="1.1" fill="#d4d4d4"/><rect x="2804.0" y="767.0" width="1.0" height="1.1" fill="#d4d4d4"/><rect x="2806.0" y="767.0" width="1.0" height="1.1" fill="#d4d4d4"/><rect x="2808.0" y="767.0" width="11.0" height="1.1" fill="#d4d4d4"/><rect x="2819.0" y="767.0" width="1.0" height="1.1" fill="#d4d4d4"/><rect x="2820.0" y="767.0" width="6.0" height="1.1" fill="#d4d4d4"/><rect x="2826.0" y="767.0" width="1.0" height="1.1" fill="#d4d4d4"/><rect x="2828.0" y="767.0" width="1.0" height="1.1" fill="#d4d4d4"/><rect x="2829.0" y="767.0" width="1.0" height="1.1" fill="#d4d4d4"/><rect x="2830.0" y="767.0" width="1.0" height="1.1" fill="#d4d4d4"/><rect x="2831.0" y="767.0" width="1.0" height="1.1" fill="#ffd700"/><rect x="2833.0" y="767.0" width="1.0" height="1.1" fill="#ffd700"/><rect x="2792.0" y="769.0" width="3.0" height="1.1" fill="#569cd6"/><rect x="2796.0" y="769.0" width="6.0" height="1.1" fill="#d4d4d4"/><rect x="2803.0" y="769.0" width="1.0" height="1.1" fill="#d4d4d4"/><rect x="2805.0" y="769.0" width="11.0" height="1.1" fill="#d4d4d4"/><rect x="2816.0" y="769.0" width="1.0" height="1.1" fill="#da70d6"/><rect x="2817.0" y="769.0" width="1.0" height="1.1" fill="#d4d4d4"/><rect x="2818.0" y="769.0" width="1.0" height="1.1" fill="#da70d6"/><rect x="2819.0" y="769.0" width="1.0" height="1.1" fill="#d4d4d4"/><rect x="2792.0" y="771.0" width="6.0" height="1.1" fill="#d4d4d4"/><rect x="2798.0" y="771.0" width="1.0" height="1.1" fill="#da70d6"/><rect x="2799.0" y="771.0" width="1.0" height="1.1" fill="#ce9178"/><rect x="2802.0" y="771.0" width="5.0" height="1.1" fill="#ce9178"/><rect x="2808.0" y="771.0" width="1.0" height="1.1" fill="#d4d4d4"/><rect x="2810.0" y="771.0" width="1.0" height="1.1" fill="#179fff"/><rect x="2811.0" y="771.0" width="1.0" height="1.1" fill="#d4d4d4"/><rect x="2812.0" y="771.0" width="1.0" height="1.1" fill="#d4d4d4"/><rect x="2813.0" y="771.0" width="1.0" height="1.1" fill="#b5cea8"/><rect x="2814.0" y="771.0" width="1.0" height="1.1" fill="#179fff"/><rect x="2816.0" y="771.0" width="1.0" height="1.1" fill="#d4d4d4"/><rect x="2818.0" y="771.0" width="11.0" height="1.1" fill="#ce9178"/><rect x="2830.0" y="771.0" width="1.0" height="1.1" fill="#d4d4d4"/><rect x="2832.0" y="771.0" width="6.0" height="1.1" fill="#d4d4d4"/><rect x="2838.0" y="771.0" width="1.0" height="1.1" fill="#d4d4d4"/><rect x="2839.0" y="771.0" width="5.0" height="1.1" fill="#d4d4d4"/><rect x="2844.0" y="771.0" width="1.0" height="1.1" fill="#179fff"/><rect x="2845.0" y="771.0" width="1.0" height="1.1" fill="#179fff"/><rect x="2847.0" y="771.0" width="1.0" height="1.1" fill="#d4d4d4"/><rect x="2849.0" y="771.0" width="2.0" height="1.1" fill="#ce9178"/><rect x="2852.0" y="771.0" width="6.0" height="1.1" fill="#ce9178"/><rect x="2859.0" y="771.0" width="1.0" height="1.1" fill="#d4d4d4"/><rect x="2861.0" y="771.0" width="6.0" height="1.1" fill="#d4d4d4"/><rect x="2867.0" y="771.0" width="1.0" height="1.1" fill="#d4d4d4"/><rect x="2868.0" y="771.0" width="7.0" height="1.1" fill="#d4d4d4"/><rect x="2875.0" y="771.0" width="1.0" height="1.1" fill="#179fff"/><rect x="2876.0" y="771.0" width="1.0" height="1.1" fill="#179fff"/><rect x="2877.0" y="771.0" width="1.0" height="1.1" fill="#d4d4d4"/><rect x="2878.0" y="771.0" width="8.0" height="1.1" fill="#d4d4d4"/><rect x="2886.0" y="771.0" width="1.0" height="1.1" fill="#179fff"/><rect x="2788.0" y="773.0" width="1.0" height="1.1" fill="#ffd700"/><rect x="2784.0" y="775.0" width="1.0" height="1.1" fill="#179fff"/><rect x="2786.0" y="775.0" width="4.0" height="1.1" fill="#569cd6"/><rect x="2791.0" y="775.0" width="1.0" height="1.1" fill="#179fff"/><rect x="2788.0" y="777.0" width="6.0" height="1.1" fill="#d4d4d4"/><rect x="2794.0" y="777.0" width="1.0" height="1.1" fill="#ffd700"/><rect x="2795.0" y="777.0" width="16.0" height="1.1" fill="#ce9178"/><rect x="2811.0" y="777.0" width="1.0" height="1.1" fill="#ffd700"/><rect x="2812.0" y="777.0" width="1.0" height="1.1" fill="#d4d4d4"/><rect x="2784.0" y="779.0" width="1.0" height="1.1" fill="#179fff"/><rect x="2784.0" y="781.0" width="3.0" height="1.1" fill="#569cd6"/><rect x="2788.0" y="781.0" width="11.0" height="1.1" fill="#d4d4d4"/><rect x="2800.0" y="781.0" width="1.0" height="1.1" fill="#d4d4d4"/><rect x="2802.0" y="781.0" width="6.0" height="1.1" fill="#d4d4d4"/><rect x="2808.0" y="781.0" width="1.0" height="1.1" fill="#d4d4d4"/><rect x="2809.0" y="781.0" width="12.0" height="1.1" fill="#d4d4d4"/><rect x="2821.0" y="781.0" width="1.0" height="1.1" fill="#179fff"/><rect x="2822.0" y="781.0" width="15.0" height="1.1" fill="#ce9178"/><rect x="2837.0" y="781.0" width="1.0" height="1.1" fill="#179fff"/><rect x="2838.0" y="781.0" width="1.0" height="1.1" fill="#d4d4d4"/><rect x="2784.0" y="783.0" width="6.0" height="1.1" fill="#d4d4d4"/><rect x="2790.0" y="783.0" width="1.0" height="1.1" fill="#179fff"/><rect x="2791.0" y="783.0" width="18.0" height="1.1" fill="#ce9178"/><rect x="2809.0" y="783.0" width="1.0" height="1.1" fill="#d4d4d4"/><rect x="2811.0" y="783.0" width="11.0" height="1.1" fill="#d4d4d4"/><rect x="2822.0" y="783.0" width="1.0" height="1.1" fill="#179fff"/><rect x="2823.0" y="783.0" width="1.0" height="1.1" fill="#d4d4d4"/><rect x="2784.0" y="787.0" width="2.0" height="1.1" fill="#569cd6"/><rect x="2787.0" y="787.0" width="1.0" height="1.1" fill="#179fff"/><rect x="2788.0" y="787.0" width="11.0" height="1.1" fill="#d4d4d4"/><rect x="2800.0" y="787.0" width="1.0" height="1.1" fill="#d4d4d4"/><rect x="2801.0" y="787.0" width="1.0" height="1.1" fill="#d4d4d4"/><rect x="2803.0" y="787.0" width="11.0" height="1.1" fill="#d4d4d4"/><rect x="2814.0" y="787.0" width="1.0" height="1.1" fill="#d4d4d4"/><rect x="2815.0" y="787.0" width="6.0" height="1.1" fill="#d4d4d4"/><rect x="2822.0" y="787.0" width="1.0" height="1.1" fill="#d4d4d4"/><rect x="2824.0" y="787.0" width="1.0" height="1.1" fill="#b5cea8"/><rect x="2825.0" y="787.0" width="1.0" height="1.1" fill="#179fff"/><rect x="2827.0" y="787.0" width="1.0" height="1.1" fill="#179fff"/><rect x="2788.0" y="789.0" width="6.0" height="1.1" fill="#d4d4d4"/><rect x="2788.0" y="791.0" width="3.0" height="1.1" fill="#569cd6"/><rect x="2792.0" y="791.0" width="1.0" height="1.1" fill="#ffd700"/><rect x="2793.0" y="791.0" width="3.0" height="1.1" fill="#569cd6"/><rect x="2797.0" y="791.0" width="1.0" height="1.1" fill="#d4d4d4"/><rect x="2792.0" y="793.0" width="3.0" height="1.1" fill="#569cd6"/><rect x="2796.0" y="793.0" width="6.0" height="1.1" fill="#d4d4d4"/><rect x="2803.0" y="793.0" width="1.0" height="1.1" fill="#d4d4d4"/><rect x="2805.0" y="793.0" width="11.0" height="1.1" fill="#d4d4d4"/><rect x="2816.0" y="793.0" width="1.0" height="1.1" fill="#da70d6"/><rect x="2817.0" y="793.0" width="1.0" height="1.1" fill="#d4d4d4"/><rect x="2818.0" y="793.0" width="1.0" height="1.1" fill="#da70d6"/><rect x="2819.0" y="793.0" width="1.0" height="1.1" fill="#d4d4d4"/><rect x="2792.0" y="795.0" width="6.0" height="1.1" fill="#d4d4d4"/><rect x="2798.0" y="795.0" width="1.0" height="1.1" fill="#da70d6"/><rect x="2799.0" y="795.0" width="1.0" height="1.1" fill="#ce9178"/><rect x="2802.0" y="795.0" width="5.0" height="1.1" fill="#ce9178"/><rect x="2808.0" y="795.0" width="1.0" height="1.1" fill="#d4d4d4"/><rect x="2810.0" y="795.0" width="1.0" height="1.1" fill="#179fff"/><rect x="2811.0" y="795.0" width="1.0" height="1.1" fill="#d4d4d4"/><rect x="2812.0" y="795.0" width="1.0" height="1.1" fill="#d4d4d4"/><rect x="2813.0" y="795.0" width="1.0" height="1.1" fill="#b5cea8"/><rect x="2814.0" y="795.0" width="1.0" height="1.1" fill="#179fff"/><rect x="2816.0" y="795.0" width="1.0" height="1.1" fill="#d4d4d4"/><rect x="2818.0" y="795.0" width="11.0" height="1.1" fill="#ce9178"/><rect x="2830.0" y="795.0" width="1.0" height="1.1" fill="#d4d4d4"/><rect x="2832.0" y="795.0" width="6.0" height="1.1" fill="#d4d4d4"/><rect x="2838.0" y="795.0" width="1.0" height="1.1" fill="#d4d4d4"/><rect x="2839.0" y="795.0" width="5.0" height="1.1" fill="#d4d4d4"/><rect x="2844.0" y="795.0" width="1.0" height="1.1" fill="#179fff"/><rect x="2845.0" y="795.0" width="1.0" height="1.1" fill="#179fff"/><rect x="2847.0" y="795.0" width="1.0" height="1.1" fill="#d4d4d4"/><rect x="2849.0" y="795.0" width="2.0" height="1.1" fill="#ce9178"/><rect x="2852.0" y="795.0" width="6.0" height="1.1" fill="#ce9178"/><rect x="2859.0" y="795.0" width="1.0" height="1.1" fill="#d4d4d4"/><rect x="2861.0" y="795.0" width="6.0" height="1.1" fill="#d4d4d4"/><rect x="2867.0" y="795.0" width="1.0" height="1.1" fill="#d4d4d4"/><rect x="2868.0" y="795.0" width="7.0" height="1.1" fill="#d4d4d4"/><rect x="2875.0" y="795.0" width="1.0" height="1.1" fill="#179fff"/><rect x="2876.0" y="795.0" width="1.0" height="1.1" fill="#179fff"/><rect x="2877.0" y="795.0" width="1.0" height="1.1" fill="#d4d4d4"/><rect x="2878.0" y="795.0" width="8.0" height="1.1" fill="#d4d4d4"/><rect x="2886.0" y="795.0" width="1.0" height="1.1" fill="#179fff"/><rect x="2788.0" y="797.0" width="1.0" height="1.1" fill="#ffd700"/><rect x="2784.0" y="799.0" width="1.0" height="1.1" fill="#179fff"/><rect x="2786.0" y="799.0" width="4.0" height="1.1" fill="#569cd6"/><rect x="2791.0" y="799.0" width="1.0" height="1.1" fill="#179fff"/><rect x="2788.0" y="801.0" width="6.0" height="1.1" fill="#d4d4d4"/><rect x="2794.0" y="801.0" width="1.0" height="1.1" fill="#ffd700"/><rect x="2795.0" y="801.0" width="16.0" height="1.1" fill="#ce9178"/><rect x="2811.0" y="801.0" width="1.0" height="1.1" fill="#ffd700"/><rect x="2812.0" y="801.0" width="1.0" height="1.1" fill="#d4d4d4"/><rect x="2784.0" y="803.0" width="1.0" height="1.1" fill="#179fff"/><rect x="2780.0" y="805.0" width="1.0" height="1.1" fill="#da70d6"/><rect x="2782.0" y="805.0" width="5.0" height="1.1" fill="#569cd6"/><rect x="2788.0" y="805.0" width="1.0" height="1.1" fill="#da70d6"/><rect x="2789.0" y="805.0" width="5.0" height="1.1" fill="#d4d4d4"/><rect x="2794.0" y="805.0" width="1.0" height="1.1" fill="#da70d6"/><rect x="2796.0" y="805.0" width="1.0" height="1.1" fill="#da70d6"/><rect x="2784.0" y="807.0" width="6.0" height="1.1" fill="#d4d4d4"/><rect x="2790.0" y="807.0" width="1.0" height="1.1" fill="#179fff"/><rect x="2791.0" y="807.0" width="24.0" height="1.1" fill="#ce9178"/><rect x="2816.0" y="807.0" width="1.0" height="1.1" fill="#d4d4d4"/><rect x="2818.0" y="807.0" width="5.0" height="1.1" fill="#d4d4d4"/><rect x="2823.0" y="807.0" width="1.0" height="1.1" fill="#d4d4d4"/><rect x="2824.0" y="807.0" width="7.0" height="1.1" fill="#d4d4d4"/><rect x="2831.0" y="807.0" width="1.0" height="1.1" fill="#179fff"/><rect x="2832.0" y="807.0" width="1.0" height="1.1" fill="#d4d4d4"/><rect x="2780.0" y="809.0" width="1.0" height="1.1" fill="#da70d6"/><rect x="2776.0" y="811.0" width="1.0" height="1.1" fill="#ffd700"/><rect x="2776.0" y="815.0" width="19.0" height="1.1" fill="#d4d4d4"/><rect x="2795.0" y="815.0" width="1.0" height="1.1" fill="#ffd700"/><rect x="2796.0" y="815.0" width="1.0" height="1.1" fill="#ffd700"/><rect x="2797.0" y="815.0" width="1.0" height="1.1" fill="#d4d4d4"/><rect x="2776.0" y="821.0" width="2.0" height="1.1" fill="#6a9955"/><rect x="2779.0" y="821.0" width="26.0" height="1.1" fill="#6a9955"/><rect x="2806.0" y="821.0" width="1.0" height="1.1" fill="#6a9955"/><rect x="2808.0" y="821.0" width="28.0" height="1.1" fill="#6a9955"/><rect x="2776.0" y="823.0" width="2.0" height="1.1" fill="#6a9955"/><rect x="2776.0" y="825.0" width="4.0" height="1.1" fill="#6a9955"/><rect x="2781.0" y="825.0" width="8.0" height="1.1" fill="#6a9955"/><rect x="2776.0" y="827.0" width="8.0" height="1.1" fill="#6a9955"/><rect x="2785.0" y="827.0" width="48.0" height="1.1" fill="#6a9955"/><rect x="2776.0" y="829.0" width="8.0" height="1.1" fill="#6a9955"/><rect x="2785.0" y="829.0" width="8.0" height="1.1" fill="#6a9955"/><rect x="2794.0" y="829.0" width="19.0" height="1.1" fill="#6a9955"/><rect x="2814.0" y="829.0" width="7.0" height="1.1" fill="#6a9955"/><rect x="2822.0" y="829.0" width="7.0" height="1.1" fill="#6a9955"/><rect x="2776.0" y="831.0" width="6.0" height="1.1" fill="#6a9955"/><rect x="2783.0" y="831.0" width="60.0" height="1.1" fill="#6a9955"/><rect x="2776.0" y="833.0" width="4.0" height="1.1" fill="#6a9955"/><rect x="2781.0" y="833.0" width="1.0" height="1.1" fill="#6a9955"/><rect x="2783.0" y="833.0" width="6.0" height="1.1" fill="#6a9955"/><rect x="2790.0" y="833.0" width="28.0" height="1.1" fill="#6a9955"/><rect x="2776.0" y="835.0" width="2.0" height="1.1" fill="#6a9955"/><rect x="2776.0" y="837.0" width="2.0" height="1.1" fill="#6a9955"/><rect x="2779.0" y="837.0" width="20.0" height="1.1" fill="#6a9955"/><rect x="2776.0" y="839.0" width="8.0" height="1.1" fill="#569cd6"/><rect x="2785.0" y="839.0" width="19.0" height="1.1" fill="#d4d4d4"/><rect x="2804.0" y="839.0" width="1.0" height="1.1" fill="#ffd700"/><rect x="2805.0" y="839.0" width="1.0" height="1.1" fill="#ffd700"/><rect x="2807.0" y="839.0" width="1.0" height="1.1" fill="#ffd700"/><rect x="2780.0" y="841.0" width="6.0" height="1.1" fill="#d4d4d4"/><rect x="2786.0" y="841.0" width="1.0" height="1.1" fill="#da70d6"/><rect x="2787.0" y="841.0" width="4.0" height="1.1" fill="#ce9178"/><rect x="2792.0" y="841.0" width="12.0" height="1.1" fill="#ce9178"/><rect x="2805.0" y="841.0" width="8.0" height="1.1" fill="#ce9178"/><rect x="2814.0" y="841.0" width="4.0" height="1.1" fill="#ce9178"/><rect x="2818.0" y="841.0" width="1.0" height="1.1" fill="#da70d6"/><rect x="2819.0" y="841.0" width="1.0" height="1.1" fill="#d4d4d4"/><rect x="2780.0" y="843.0" width="3.0" height="1.1" fill="#569cd6"/><rect x="2784.0" y="843.0" width="1.0" height="1.1" fill="#da70d6"/><rect x="2784.0" y="845.0" width="2.0" height="1.1" fill="#6a9955"/><rect x="2787.0" y="845.0" width="18.0" height="1.1" fill="#6a9955"/><rect x="2784.0" y="847.0" width="3.0" height="1.1" fill="#569cd6"/><rect x="2788.0" y="847.0" width="11.0" height="1.1" fill="#d4d4d4"/><rect x="2800.0" y="847.0" width="1.0" height="1.1" fill="#d4d4d4"/><rect x="2802.0" y="847.0" width="6.0" height="1.1" fill="#d4d4d4"/><rect x="2808.0" y="847.0" width="1.0" height="1.1" fill="#d4d4d4"/><rect x="2809.0" y="847.0" width="12.0" height="1.1" fill="#d4d4d4"/><rect x="2821.0" y="847.0" width="1.0" height="1.1" fill="#179fff"/><rect x="2822.0" y="847.0" width="15.0" height="1.1" fill="#ce9178"/><rect x="2837.0" y="847.0" width="1.0" height="1.1" fill="#179fff"/><rect x="2838.0" y="847.0" width="1.0" height="1.1" fill="#d4d4d4"/><rect x="2784.0" y="853.0" width="2.0" height="1.1" fill="#569cd6"/><rect x="2787.0" y="853.0" width="1.0" height="1.1" fill="#179fff"/><rect x="2788.0" y="853.0" width="11.0" height="1.1" fill="#d4d4d4"/><rect x="2800.0" y="853.0" width="1.0" height="1.1" fill="#d4d4d4"/><rect x="2801.0" y="853.0" width="1.0" height="1.1" fill="#d4d4d4"/><rect x="2803.0" y="853.0" width="11.0" height="1.1" fill="#d4d4d4"/><rect x="2814.0" y="853.0" width="1.0" height="1.1" fill="#d4d4d4"/><rect x="2815.0" y="853.0" width="6.0" height="1.1" fill="#d4d4d4"/><rect x="2822.0" y="853.0" width="1.0" height="1.1" fill="#d4d4d4"/><rect x="2824.0" y="853.0" width="1.0" height="1.1" fill="#b5cea8"/><rect x="2825.0" y="853.0" width="1.0" height="1.1" fill="#179fff"/><rect x="2827.0" y="853.0" width="1.0" height="1.1" fill="#179fff"/><rect x="2788.0" y="855.0" width="6.0" height="1.1" fill="#d4d4d4"/><rect x="2788.0" y="857.0" width="3.0" height="1.1" fill="#569cd6"/><rect x="2792.0" y="857.0" width="1.0" height="1.1" fill="#ffd700"/><rect x="2793.0" y="857.0" width="3.0" height="1.1" fill="#569cd6"/><rect x="2797.0" y="857.0" width="1.0" height="1.1" fill="#d4d4d4"/><rect x="2799.0" y="857.0" width="1.0" height="1.1" fill="#d4d4d4"/><rect x="2801.0" y="857.0" width="1.0" height="1.1" fill="#b5cea8"/><rect x="2802.0" y="857.0" width="1.0" height="1.1" fill="#d4d4d4"/><rect x="2804.0" y="857.0" width="1.0" height="1.1" fill="#d4d4d4"/><rect x="2806.0" y="857.0" width="1.0" height="1.1" fill="#d4d4d4"/><rect x="2808.0" y="857.0" width="11.0" height="1.1" fill="#d4d4d4"/><rect x="2819.0" y="857.0" width="1.0" height="1.1" fill="#d4d4d4"/><rect x="2820.0" y="857.0" width="6.0" height="1.1" fill="#d4d4d4"/><rect x="2826.0" y="857.0" width="1.0" height="1.1" fill="#d4d4d4"/><rect x="2828.0" y="857.0" width="1.0" height="1.1" fill="#d4d4d4"/><rect x="2829.0" y="857.0" width="1.0" height="1.1" fill="#d4d4d4"/><rect x="2830.0" y="857.0" width="1.0" height="1.1" fill="#d4d4d4"/><rect x="2831.0" y="857.0" width="1.0" height="1.1" fill="#ffd700"/><rect x="2833.0" y="857.0" width="1.0" height="1.1" fill="#ffd700"/><rect x="2792.0" y="859.0" width="3.0" height="1.1" fill="#569cd6"/><rect x="2796.0" y="859.0" width="6.0" height="1.1" fill="#d4d4d4"/><rect x="2803.0" y="859.0" width="1.0" height="1.1" fill="#d4d4d4"/><rect x="2805.0" y="859.0" width="11.0" height="1.1" fill="#d4d4d4"/><rect x="2816.0" y="859.0" width="1.0" height="1.1" fill="#da70d6"/><rect x="2817.0" y="859.0" width="1.0" height="1.1" fill="#d4d4d4"/><rect x="2818.0" y="859.0" width="1.0" height="1.1" fill="#da70d6"/><rect x="2819.0" y="859.0" width="1.0" height="1.1" fill="#d4d4d4"/><rect x="2792.0" y="861.0" width="6.0" height="1.1" fill="#d4d4d4"/><rect x="2798.0" y="861.0" width="1.0" height="1.1" fill="#da70d6"/><rect x="2799.0" y="861.0" width="1.0" height="1.1" fill="#ce9178"/><rect x="2802.0" y="861.0" width="5.0" height="1.1" fill="#ce9178"/><rect x="2808.0" y="861.0" width="1.0" height="1.1" fill="#d4d4d4"/><rect x="2810.0" y="861.0" width="1.0" height="1.1" fill="#179fff"/><rect x="2811.0" y="861.0" width="1.0" height="1.1" fill="#d4d4d4"/><rect x="2812.0" y="861.0" width="1.0" height="1.1" fill="#d4d4d4"/><rect x="2813.0" y="861.0" width="1.0" height="1.1" fill="#b5cea8"/><rect x="2814.0" y="861.0" width="1.0" height="1.1" fill="#179fff"/><rect x="2816.0" y="861.0" width="1.0" height="1.1" fill="#d4d4d4"/><rect x="2818.0" y="861.0" width="11.0" height="1.1" fill="#ce9178"/><rect x="2830.0" y="861.0" width="1.0" height="1.1" fill="#d4d4d4"/><rect x="2832.0" y="861.0" width="6.0" height="1.1" fill="#d4d4d4"/><rect x="2838.0" y="861.0" width="1.0" height="1.1" fill="#d4d4d4"/><rect x="2839.0" y="861.0" width="5.0" height="1.1" fill="#d4d4d4"/><rect x="2844.0" y="861.0" width="1.0" height="1.1" fill="#179fff"/><rect x="2845.0" y="861.0" width="1.0" height="1.1" fill="#179fff"/><rect x="2847.0" y="861.0" width="1.0" height="1.1" fill="#d4d4d4"/><rect x="2849.0" y="861.0" width="2.0" height="1.1" fill="#ce9178"/><rect x="2852.0" y="861.0" width="6.0" height="1.1" fill="#ce9178"/><rect x="2859.0" y="861.0" width="1.0" height="1.1" fill="#d4d4d4"/><rect x="2861.0" y="861.0" width="6.0" height="1.1" fill="#d4d4d4"/><rect x="2867.0" y="861.0" width="1.0" height="1.1" fill="#d4d4d4"/><rect x="2868.0" y="861.0" width="7.0" height="1.1" fill="#d4d4d4"/><rect x="2875.0" y="861.0" width="1.0" height="1.1" fill="#179fff"/><rect x="2876.0" y="861.0" width="1.0" height="1.1" fill="#179fff"/><rect x="2877.0" y="861.0" width="1.0" height="1.1" fill="#d4d4d4"/><rect x="2878.0" y="861.0" width="8.0" height="1.1" fill="#d4d4d4"/><rect x="2886.0" y="861.0" width="1.0" height="1.1" fill="#179fff"/><rect x="2788.0" y="863.0" width="1.0" height="1.1" fill="#ffd700"/><rect x="2784.0" y="865.0" width="1.0" height="1.1" fill="#179fff"/><rect x="2786.0" y="865.0" width="4.0" height="1.1" fill="#569cd6"/><rect x="2791.0" y="865.0" width="1.0" height="1.1" fill="#179fff"/><rect x="2788.0" y="867.0" width="6.0" height="1.1" fill="#d4d4d4"/><rect x="2794.0" y="867.0" width="1.0" height="1.1" fill="#ffd700"/><rect x="2795.0" y="867.0" width="16.0" height="1.1" fill="#ce9178"/><rect x="2811.0" y="867.0" width="1.0" height="1.1" fill="#ffd700"/><rect x="2812.0" y="867.0" width="1.0" height="1.1" fill="#d4d4d4"/><rect x="2784.0" y="869.0" width="1.0" height="1.1" fill="#179fff"/><rect x="2784.0" y="871.0" width="3.0" height="1.1" fill="#569cd6"/><rect x="2788.0" y="871.0" width="11.0" height="1.1" fill="#d4d4d4"/><rect x="2800.0" y="871.0" width="1.0" height="1.1" fill="#d4d4d4"/><rect x="2802.0" y="871.0" width="6.0" height="1.1" fill="#d4d4d4"/><rect x="2808.0" y="871.0" width="1.0" height="1.1" fill="#d4d4d4"/><rect x="2809.0" y="871.0" width="12.0" height="1.1" fill="#d4d4d4"/><rect x="2821.0" y="871.0" width="1.0" height="1.1" fill="#179fff"/><rect x="2822.0" y="871.0" width="15.0" height="1.1" fill="#ce9178"/><rect x="2837.0" y="871.0" width="1.0" height="1.1" fill="#179fff"/><rect x="2838.0" y="871.0" width="1.0" height="1.1" fill="#d4d4d4"/><rect x="2784.0" y="873.0" width="6.0" height="1.1" fill="#d4d4d4"/><rect x="2790.0" y="873.0" width="1.0" height="1.1" fill="#179fff"/><rect x="2791.0" y="873.0" width="18.0" height="1.1" fill="#ce9178"/><rect x="2809.0" y="873.0" width="1.0" height="1.1" fill="#d4d4d4"/><rect x="2811.0" y="873.0" width="11.0" height="1.1" fill="#d4d4d4"/><rect x="2822.0" y="873.0" width="1.0" height="1.1" fill="#179fff"/><rect x="2823.0" y="873.0" width="1.0" height="1.1" fill="#d4d4d4"/><rect x="2784.0" y="877.0" width="2.0" height="1.1" fill="#569cd6"/><rect x="2787.0" y="877.0" width="1.0" height="1.1" fill="#179fff"/><rect x="2788.0" y="877.0" width="11.0" height="1.1" fill="#d4d4d4"/><rect x="2800.0" y="877.0" width="1.0" height="1.1" fill="#d4d4d4"/><rect x="2801.0" y="877.0" width="1.0" height="1.1" fill="#d4d4d4"/><rect x="2803.0" y="877.0" width="11.0" height="1.1" fill="#d4d4d4"/><rect x="2814.0" y="877.0" width="1.0" height="1.1" fill="#d4d4d4"/><rect x="2815.0" y="877.0" width="6.0" height="1.1" fill="#d4d4d4"/><rect x="2822.0" y="877.0" width="1.0" height="1.1" fill="#d4d4d4"/><rect x="2824.0" y="877.0" width="1.0" height="1.1" fill="#b5cea8"/><rect x="2825.0" y="877.0" width="1.0" height="1.1" fill="#179fff"/><rect x="2827.0" y="877.0" width="1.0" height="1.1" fill="#179fff"/><rect x="2788.0" y="879.0" width="6.0" height="1.1" fill="#d4d4d4"/><rect x="2794.0" y="879.0" width="1.0" height="1.1" fill="#ffd700"/><rect x="2795.0" y="879.0" width="5.0" height="1.1" fill="#ce9178"/><rect x="2801.0" y="879.0" width="1.0" height="1.1" fill="#ce9178"/><rect x="2803.0" y="879.0" width="1.0" height="1.1" fill="#d4d4d4"/><rect x="2805.0" y="879.0" width="11.0" height="1.1" fill="#d4d4d4"/><rect x="2816.0" y="879.0" width="1.0" height="1.1" fill="#d4d4d4"/><rect x="2817.0" y="879.0" width="6.0" height="1.1" fill="#d4d4d4"/><rect x="2824.0" y="879.0" width="1.0" height="1.1" fill="#d4d4d4"/><rect x="2826.0" y="879.0" width="1.0" height="1.1" fill="#ce9178"/><rect x="2828.0" y="879.0" width="11.0" height="1.1" fill="#ce9178"/><rect x="2839.0" y="879.0" width="1.0" height="1.1" fill="#ffd700"/><rect x="2840.0" y="879.0" width="1.0" height="1.1" fill="#d4d4d4"/><rect x="2788.0" y="881.0" width="3.0" height="1.1" fill="#569cd6"/><rect x="2792.0" y="881.0" width="1.0" height="1.1" fill="#ffd700"/><rect x="2793.0" y="881.0" width="3.0" height="1.1" fill="#569cd6"/><rect x="2797.0" y="881.0" width="1.0" height="1.1" fill="#d4d4d4"/><rect x="2799.0" y="881.0" width="1.0" height="1.1" fill="#d4d4d4"/><rect x="2801.0" y="881.0" width="1.0" height="1.1" fill="#b5cea8"/><rect x="2802.0" y="881.0" width="1.0" height="1.1" fill="#d4d4d4"/><rect x="2804.0" y="881.0" width="1.0" height="1.1" fill="#d4d4d4"/><rect x="2806.0" y="881.0" width="1.0" height="1.1" fill="#d4d4d4"/><rect x="2808.0" y="881.0" width="11.0" height="1.1" fill="#d4d4d4"/><rect x="2819.0" y="881.0" width="1.0" height="1.1" fill="#d4d4d4"/><rect x="2820.0" y="881.0" width="6.0" height="1.1" fill="#d4d4d4"/><rect x="2826.0" y="881.0" width="1.0" height="1.1" fill="#d4d4d4"/><rect x="2828.0" y="881.0" width="1.0" height="1.1" fill="#d4d4d4"/><rect x="2829.0" y="881.0" width="1.0" height="1.1" fill="#d4d4d4"/><rect x="2830.0" y="881.0" width="1.0" height="1.1" fill="#d4d4d4"/><rect x="2831.0" y="881.0" width="1.0" height="1.1" fill="#ffd700"/><rect x="2833.0" y="881.0" width="1.0" height="1.1" fill="#ffd700"/><rect x="2792.0" y="883.0" width="3.0" height="1.1" fill="#569cd6"/><rect x="2796.0" y="883.0" width="6.0" height="1.1" fill="#d4d4d4"/><rect x="2803.0" y="883.0" width="1.0" height="1.1" fill="#d4d4d4"/><rect x="2805.0" y="883.0" width="11.0" height="1.1" fill="#d4d4d4"/><rect x="2816.0" y="883.0" width="1.0" height="1.1" fill="#da70d6"/><rect x="2817.0" y="883.0" width="1.0" height="1.1" fill="#d4d4d4"/><rect x="2818.0" y="883.0" width="1.0" height="1.1" fill="#da70d6"/><rect x="2819.0" y="883.0" width="1.0" height="1.1" fill="#d4d4d4"/><rect x="2792.0" y="885.0" width="6.0" height="1.1" fill="#d4d4d4"/><rect x="2798.0" y="885.0" width="1.0" height="1.1" fill="#da70d6"/><rect x="2799.0" y="885.0" width="1.0" height="1.1" fill="#ce9178"/><rect x="2802.0" y="885.0" width="5.0" height="1.1" fill="#ce9178"/><rect x="2808.0" y="885.0" width="1.0" height="1.1" fill="#d4d4d4"/><rect x="2810.0" y="885.0" width="1.0" height="1.1" fill="#179fff"/><rect x="2811.0" y="885.0" width="1.0" height="1.1" fill="#d4d4d4"/><rect x="2812.0" y="885.0" width="1.0" height="1.1" fill="#d4d4d4"/><rect x="2813.0" y="885.0" width="1.0" height="1.1" fill="#b5cea8"/><rect x="2814.0" y="885.0" width="1.0" height="1.1" fill="#179fff"/><rect x="2788.0" y="887.0" width="1.0" height="1.1" fill="#ffd700"/><rect x="2784.0" y="889.0" width="1.0" height="1.1" fill="#179fff"/><rect x="2786.0" y="889.0" width="4.0" height="1.1" fill="#569cd6"/><rect x="2791.0" y="889.0" width="1.0" height="1.1" fill="#179fff"/><rect x="2788.0" y="891.0" width="6.0" height="1.1" fill="#d4d4d4"/><rect x="2794.0" y="891.0" width="1.0" height="1.1" fill="#ffd700"/><rect x="2795.0" y="891.0" width="16.0" height="1.1" fill="#ce9178"/><rect x="2811.0" y="891.0" width="1.0" height="1.1" fill="#ffd700"/><rect x="2812.0" y="891.0" width="1.0" height="1.1" fill="#d4d4d4"/><rect x="2784.0" y="893.0" width="1.0" height="1.1" fill="#179fff"/><rect x="2780.0" y="895.0" width="1.0" height="1.1" fill="#da70d6"/><rect x="2782.0" y="895.0" width="5.0" height="1.1" fill="#569cd6"/><rect x="2788.0" y="895.0" width="1.0" height="1.1" fill="#da70d6"/><rect x="2789.0" y="895.0" width="5.0" height="1.1" fill="#d4d4d4"/><rect x="2794.0" y="895.0" width="1.0" height="1.1" fill="#da70d6"/><rect x="2796.0" y="895.0" width="1.0" height="1.1" fill="#da70d6"/><rect x="2784.0" y="897.0" width="6.0" height="1.1" fill="#d4d4d4"/><rect x="2790.0" y="897.0" width="1.0" height="1.1" fill="#179fff"/><rect x="2791.0" y="897.0" width="24.0" height="1.1" fill="#ce9178"/><rect x="2816.0" y="897.0" width="1.0" height="1.1" fill="#d4d4d4"/><rect x="2818.0" y="897.0" width="5.0" height="1.1" fill="#d4d4d4"/><rect x="2823.0" y="897.0" width="1.0" height="1.1" fill="#d4d4d4"/><rect x="2824.0" y="897.0" width="7.0" height="1.1" fill="#d4d4d4"/><rect x="2831.0" y="897.0" width="1.0" height="1.1" fill="#179fff"/><rect x="2832.0" y="897.0" width="1.0" height="1.1" fill="#d4d4d4"/><rect x="2780.0" y="899.0" width="1.0" height="1.1" fill="#da70d6"/><rect x="2776.0" y="901.0" width="1.0" height="1.1" fill="#ffd700"/><rect x="2776.0" y="905.0" width="19.0" height="1.1" fill="#d4d4d4"/><rect x="2795.0" y="905.0" width="1.0" height="1.1" fill="#ffd700"/><rect x="2796.0" y="905.0" width="1.0" height="1.1" fill="#ffd700"/><rect x="2797.0" y="905.0" width="1.0" height="1.1" fill="#d4d4d4"/><rect x="2776.0" y="911.0" width="2.0" height="1.1" fill="#6a9955"/><rect x="2779.0" y="911.0" width="26.0" height="1.1" fill="#6a9955"/><rect x="2806.0" y="911.0" width="1.0" height="1.1" fill="#6a9955"/><rect x="2808.0" y="911.0" width="28.0" height="1.1" fill="#6a9955"/><rect x="2776.0" y="913.0" width="2.0" height="1.1" fill="#6a9955"/><rect x="2776.0" y="915.0" width="4.0" height="1.1" fill="#6a9955"/><rect x="2781.0" y="915.0" width="8.0" height="1.1" fill="#6a9955"/><rect x="2776.0" y="917.0" width="8.0" height="1.1" fill="#6a9955"/><rect x="2785.0" y="917.0" width="48.0" height="1.1" fill="#6a9955"/><rect x="2776.0" y="919.0" width="8.0" height="1.1" fill="#6a9955"/><rect x="2785.0" y="919.0" width="8.0" height="1.1" fill="#6a9955"/><rect x="2794.0" y="919.0" width="19.0" height="1.1" fill="#6a9955"/><rect x="2814.0" y="919.0" width="7.0" height="1.1" fill="#6a9955"/><rect x="2822.0" y="919.0" width="7.0" height="1.1" fill="#6a9955"/><rect x="2776.0" y="921.0" width="6.0" height="1.1" fill="#6a9955"/><rect x="2783.0" y="921.0" width="60.0" height="1.1" fill="#6a9955"/><rect x="2776.0" y="923.0" width="4.0" height="1.1" fill="#6a9955"/><rect x="2781.0" y="923.0" width="1.0" height="1.1" fill="#6a9955"/><rect x="2783.0" y="923.0" width="6.0" height="1.1" fill="#6a9955"/><rect x="2790.0" y="923.0" width="28.0" height="1.1" fill="#6a9955"/><rect x="2776.0" y="925.0" width="2.0" height="1.1" fill="#6a9955"/><rect x="2776.0" y="927.0" width="2.0" height="1.1" fill="#6a9955"/><rect x="2779.0" y="927.0" width="20.0" height="1.1" fill="#6a9955"/><rect x="2776.0" y="929.0" width="8.0" height="1.1" fill="#569cd6"/><rect x="2785.0" y="929.0" width="19.0" height="1.1" fill="#d4d4d4"/><rect x="2804.0" y="929.0" width="1.0" height="1.1" fill="#ffd700"/><rect x="2805.0" y="929.0" width="1.0" height="1.1" fill="#ffd700"/><rect x="2807.0" y="929.0" width="1.0" height="1.1" fill="#ffd700"/><rect x="2780.0" y="931.0" width="6.0" height="1.1" fill="#d4d4d4"/><rect x="2786.0" y="931.0" width="1.0" height="1.1" fill="#da70d6"/><rect x="2787.0" y="931.0" width="4.0" height="1.1" fill="#ce9178"/><rect x="2792.0" y="931.0" width="12.0" height="1.1" fill="#ce9178"/><rect x="2805.0" y="931.0" width="8.0" height="1.1" fill="#ce9178"/><rect x="2814.0" y="931.0" width="4.0" height="1.1" fill="#ce9178"/><rect x="2818.0" y="931.0" width="1.0" height="1.1" fill="#da70d6"/><rect x="2819.0" y="931.0" width="1.0" height="1.1" fill="#d4d4d4"/><rect x="2780.0" y="933.0" width="3.0" height="1.1" fill="#569cd6"/><rect x="2784.0" y="933.0" width="1.0" height="1.1" fill="#da70d6"/><rect x="2784.0" y="935.0" width="2.0" height="1.1" fill="#6a9955"/><rect x="2787.0" y="935.0" width="18.0" height="1.1" fill="#6a9955"/><rect x="2784.0" y="937.0" width="3.0" height="1.1" fill="#569cd6"/><rect x="2788.0" y="937.0" width="11.0" height="1.1" fill="#d4d4d4"/><rect x="2800.0" y="937.0" width="1.0" height="1.1" fill="#d4d4d4"/><rect x="2802.0" y="937.0" width="6.0" height="1.1" fill="#d4d4d4"/><rect x="2808.0" y="937.0" width="1.0" height="1.1" fill="#d4d4d4"/><rect x="2809.0" y="937.0" width="12.0" height="1.1" fill="#d4d4d4"/><rect x="2821.0" y="937.0" width="1.0" height="1.1" fill="#179fff"/><rect x="2822.0" y="937.0" width="15.0" height="1.1" fill="#ce9178"/><rect x="2837.0" y="937.0" width="1.0" height="1.1" fill="#179fff"/><rect x="2838.0" y="937.0" width="1.0" height="1.1" fill="#d4d4d4"/><rect x="2784.0" y="939.0" width="6.0" height="1.1" fill="#d4d4d4"/><rect x="2790.0" y="939.0" width="1.0" height="1.1" fill="#179fff"/><rect x="2791.0" y="939.0" width="18.0" height="1.1" fill="#ce9178"/><rect x="2809.0" y="939.0" width="1.0" height="1.1" fill="#d4d4d4"/><rect x="2811.0" y="939.0" width="11.0" height="1.1" fill="#d4d4d4"/><rect x="2822.0" y="939.0" width="1.0" height="1.1" fill="#179fff"/><rect x="2823.0" y="939.0" width="1.0" height="1.1" fill="#d4d4d4"/><rect x="2784.0" y="943.0" width="2.0" height="1.1" fill="#569cd6"/><rect x="2787.0" y="943.0" width="1.0" height="1.1" fill="#179fff"/><rect x="2788.0" y="943.0" width="11.0" height="1.1" fill="#d4d4d4"/><rect x="2800.0" y="943.0" width="1.0" height="1.1" fill="#d4d4d4"/><rect x="2801.0" y="943.0" width="1.0" height="1.1" fill="#d4d4d4"/><rect x="2803.0" y="943.0" width="11.0" height="1.1" fill="#d4d4d4"/><rect x="2814.0" y="943.0" width="1.0" height="1.1" fill="#d4d4d4"/><rect x="2815.0" y="943.0" width="6.0" height="1.1" fill="#d4d4d4"/><rect x="2822.0" y="943.0" width="1.0" height="1.1" fill="#d4d4d4"/><rect x="2824.0" y="943.0" width="1.0" height="1.1" fill="#b5cea8"/><rect x="2825.0" y="943.0" width="1.0" height="1.1" fill="#179fff"/><rect x="2827.0" y="943.0" width="1.0" height="1.1" fill="#179fff"/><rect x="2788.0" y="945.0" width="6.0" height="1.1" fill="#d4d4d4"/><rect x="2794.0" y="945.0" width="1.0" height="1.1" fill="#ffd700"/><rect x="2795.0" y="945.0" width="5.0" height="1.1" fill="#ce9178"/><rect x="2801.0" y="945.0" width="1.0" height="1.1" fill="#ce9178"/><rect x="2803.0" y="945.0" width="1.0" height="1.1" fill="#d4d4d4"/><rect x="2805.0" y="945.0" width="11.0" height="1.1" fill="#d4d4d4"/><rect x="2816.0" y="945.0" width="1.0" height="1.1" fill="#d4d4d4"/><rect x="2817.0" y="945.0" width="6.0" height="1.1" fill="#d4d4d4"/><rect x="2824.0" y="945.0" width="1.0" height="1.1" fill="#d4d4d4"/><rect x="2826.0" y="945.0" width="1.0" height="1.1" fill="#ce9178"/><rect x="2828.0" y="945.0" width="11.0" height="1.1" fill="#ce9178"/><rect x="2839.0" y="945.0" width="1.0" height="1.1" fill="#ffd700"/><rect x="2840.0" y="945.0" width="1.0" height="1.1" fill="#d4d4d4"/><rect x="2788.0" y="947.0" width="3.0" height="1.1" fill="#569cd6"/><rect x="2792.0" y="947.0" width="1.0" height="1.1" fill="#ffd700"/><rect x="2793.0" y="947.0" width="3.0" height="1.1" fill="#569cd6"/><rect x="2797.0" y="947.0" width="1.0" height="1.1" fill="#d4d4d4"/><rect x="2799.0" y="947.0" width="1.0" height="1.1" fill="#d4d4d4"/><rect x="2801.0" y="947.0" width="1.0" height="1.1" fill="#b5cea8"/><rect x="2802.0" y="947.0" width="1.0" height="1.1" fill="#d4d4d4"/><rect x="2804.0" y="947.0" width="1.0" height="1.1" fill="#d4d4d4"/><rect x="2806.0" y="947.0" width="1.0" height="1.1" fill="#d4d4d4"/><rect x="2808.0" y="947.0" width="11.0" height="1.1" fill="#d4d4d4"/><rect x="2819.0" y="947.0" width="1.0" height="1.1" fill="#d4d4d4"/><rect x="2820.0" y="947.0" width="6.0" height="1.1" fill="#d4d4d4"/><rect x="2826.0" y="947.0" width="1.0" height="1.1" fill="#d4d4d4"/><rect x="2828.0" y="947.0" width="1.0" height="1.1" fill="#d4d4d4"/><rect x="2829.0" y="947.0" width="1.0" height="1.1" fill="#d4d4d4"/><rect x="2830.0" y="947.0" width="1.0" height="1.1" fill="#d4d4d4"/><rect x="2831.0" y="947.0" width="1.0" height="1.1" fill="#ffd700"/><rect x="2833.0" y="947.0" width="1.0" height="1.1" fill="#ffd700"/><rect x="2792.0" y="949.0" width="3.0" height="1.1" fill="#569cd6"/><rect x="2796.0" y="949.0" width="6.0" height="1.1" fill="#d4d4d4"/><rect x="2803.0" y="949.0" width="1.0" height="1.1" fill="#d4d4d4"/><rect x="2805.0" y="949.0" width="11.0" height="1.1" fill="#d4d4d4"/><rect x="2816.0" y="949.0" width="1.0" height="1.1" fill="#da70d6"/><rect x="2817.0" y="949.0" width="1.0" height="1.1" fill="#d4d4d4"/><rect x="2818.0" y="949.0" width="1.0" height="1.1" fill="#da70d6"/><rect x="2819.0" y="949.0" width="1.0" height="1.1" fill="#d4d4d4"/><rect x="2792.0" y="951.0" width="6.0" height="1.1" fill="#d4d4d4"/><rect x="2798.0" y="951.0" width="1.0" height="1.1" fill="#da70d6"/><rect x="2799.0" y="951.0" width="1.0" height="1.1" fill="#ce9178"/><rect x="2802.0" y="951.0" width="5.0" height="1.1" fill="#ce9178"/><rect x="2808.0" y="951.0" width="1.0" height="1.1" fill="#d4d4d4"/><rect x="2810.0" y="951.0" width="1.0" height="1.1" fill="#179fff"/><rect x="2811.0" y="951.0" width="1.0" height="1.1" fill="#d4d4d4"/><rect x="2812.0" y="951.0" width="1.0" height="1.1" fill="#d4d4d4"/><rect x="2813.0" y="951.0" width="1.0" height="1.1" fill="#b5cea8"/><rect x="2814.0" y="951.0" width="1.0" height="1.1" fill="#179fff"/><rect x="2816.0" y="951.0" width="1.0" height="1.1" fill="#d4d4d4"/><rect x="2818.0" y="951.0" width="11.0" height="1.1" fill="#ce9178"/><rect x="2830.0" y="951.0" width="1.0" height="1.1" fill="#d4d4d4"/><rect x="2832.0" y="951.0" width="6.0" height="1.1" fill="#d4d4d4"/><rect x="2838.0" y="951.0" width="1.0" height="1.1" fill="#d4d4d4"/><rect x="2839.0" y="951.0" width="5.0" height="1.1" fill="#d4d4d4"/><rect x="2844.0" y="951.0" width="1.0" height="1.1" fill="#179fff"/><rect x="2845.0" y="951.0" width="1.0" height="1.1" fill="#179fff"/><rect x="2847.0" y="951.0" width="1.0" height="1.1" fill="#d4d4d4"/><rect x="2849.0" y="951.0" width="2.0" height="1.1" fill="#ce9178"/><rect x="2852.0" y="951.0" width="6.0" height="1.1" fill="#ce9178"/><rect x="2859.0" y="951.0" width="1.0" height="1.1" fill="#d4d4d4"/><rect x="2861.0" y="951.0" width="6.0" height="1.1" fill="#d4d4d4"/><rect x="2867.0" y="951.0" width="1.0" height="1.1" fill="#d4d4d4"/><rect x="2868.0" y="951.0" width="7.0" height="1.1" fill="#d4d4d4"/><rect x="2875.0" y="951.0" width="1.0" height="1.1" fill="#179fff"/><rect x="2876.0" y="951.0" width="1.0" height="1.1" fill="#179fff"/><rect x="2877.0" y="951.0" width="1.0" height="1.1" fill="#d4d4d4"/><rect x="2878.0" y="951.0" width="8.0" height="1.1" fill="#d4d4d4"/><rect x="2886.0" y="951.0" width="1.0" height="1.1" fill="#179fff"/><rect x="2788.0" y="953.0" width="1.0" height="1.1" fill="#ffd700"/><rect x="2784.0" y="955.0" width="1.0" height="1.1" fill="#179fff"/><rect x="2786.0" y="955.0" width="4.0" height="1.1" fill="#569cd6"/><rect x="2791.0" y="955.0" width="1.0" height="1.1" fill="#179fff"/><rect x="2788.0" y="957.0" width="6.0" height="1.1" fill="#d4d4d4"/><rect x="2794.0" y="957.0" width="1.0" height="1.1" fill="#ffd700"/><rect x="2795.0" y="957.0" width="16.0" height="1.1" fill="#ce9178"/><rect x="2811.0" y="957.0" width="1.0" height="1.1" fill="#ffd700"/><rect x="2812.0" y="957.0" width="1.0" height="1.1" fill="#d4d4d4"/><rect x="2784.0" y="959.0" width="1.0" height="1.1" fill="#179fff"/><rect x="2784.0" y="961.0" width="3.0" height="1.1" fill="#569cd6"/><rect x="2788.0" y="961.0" width="11.0" height="1.1" fill="#d4d4d4"/><rect x="2800.0" y="961.0" width="1.0" height="1.1" fill="#d4d4d4"/><rect x="2802.0" y="961.0" width="6.0" height="1.1" fill="#d4d4d4"/><rect x="2808.0" y="961.0" width="1.0" height="1.1" fill="#d4d4d4"/><rect x="2809.0" y="961.0" width="12.0" height="1.1" fill="#d4d4d4"/><rect x="2821.0" y="961.0" width="1.0" height="1.1" fill="#179fff"/><rect x="2822.0" y="961.0" width="15.0" height="1.1" fill="#ce9178"/><rect x="2837.0" y="961.0" width="1.0" height="1.1" fill="#179fff"/><rect x="2838.0" y="961.0" width="1.0" height="1.1" fill="#d4d4d4"/><rect x="2784.0" y="967.0" width="2.0" height="1.1" fill="#569cd6"/><rect x="2787.0" y="967.0" width="1.0" height="1.1" fill="#179fff"/><rect x="2788.0" y="967.0" width="11.0" height="1.1" fill="#d4d4d4"/><rect x="2800.0" y="967.0" width="1.0" height="1.1" fill="#d4d4d4"/><rect x="2801.0" y="967.0" width="1.0" height="1.1" fill="#d4d4d4"/><rect x="2803.0" y="967.0" width="11.0" height="1.1" fill="#d4d4d4"/><rect x="2814.0" y="967.0" width="1.0" height="1.1" fill="#d4d4d4"/><rect x="2815.0" y="967.0" width="6.0" height="1.1" fill="#d4d4d4"/><rect x="2822.0" y="967.0" width="1.0" height="1.1" fill="#d4d4d4"/><rect x="2824.0" y="967.0" width="1.0" height="1.1" fill="#b5cea8"/><rect x="2825.0" y="967.0" width="1.0" height="1.1" fill="#179fff"/><rect x="2827.0" y="967.0" width="1.0" height="1.1" fill="#179fff"/><rect x="2788.0" y="969.0" width="6.0" height="1.1" fill="#d4d4d4"/><rect x="2788.0" y="971.0" width="3.0" height="1.1" fill="#569cd6"/><rect x="2792.0" y="971.0" width="1.0" height="1.1" fill="#ffd700"/><rect x="2793.0" y="971.0" width="3.0" height="1.1" fill="#569cd6"/><rect x="2797.0" y="971.0" width="1.0" height="1.1" fill="#d4d4d4"/><rect x="2799.0" y="971.0" width="1.0" height="1.1" fill="#d4d4d4"/><rect x="2801.0" y="971.0" width="1.0" height="1.1" fill="#b5cea8"/><rect x="2802.0" y="971.0" width="1.0" height="1.1" fill="#d4d4d4"/><rect x="2804.0" y="971.0" width="1.0" height="1.1" fill="#d4d4d4"/><rect x="2806.0" y="971.0" width="1.0" height="1.1" fill="#d4d4d4"/><rect x="2808.0" y="971.0" width="11.0" height="1.1" fill="#d4d4d4"/><rect x="2819.0" y="971.0" width="1.0" height="1.1" fill="#d4d4d4"/><rect x="2820.0" y="971.0" width="6.0" height="1.1" fill="#d4d4d4"/><rect x="2826.0" y="971.0" width="1.0" height="1.1" fill="#d4d4d4"/><rect x="2828.0" y="971.0" width="1.0" height="1.1" fill="#d4d4d4"/><rect x="2829.0" y="971.0" width="1.0" height="1.1" fill="#d4d4d4"/><rect x="2830.0" y="971.0" width="1.0" height="1.1" fill="#d4d4d4"/><rect x="2831.0" y="971.0" width="1.0" height="1.1" fill="#ffd700"/><rect x="2833.0" y="971.0" width="1.0" height="1.1" fill="#ffd700"/><rect x="2792.0" y="973.0" width="3.0" height="1.1" fill="#569cd6"/><rect x="2796.0" y="973.0" width="6.0" height="1.1" fill="#d4d4d4"/><rect x="2803.0" y="973.0" width="1.0" height="1.1" fill="#d4d4d4"/><rect x="2805.0" y="973.0" width="11.0" height="1.1" fill="#d4d4d4"/><rect x="2816.0" y="973.0" width="1.0" height="1.1" fill="#da70d6"/><rect x="2817.0" y="973.0" width="1.0" height="1.1" fill="#d4d4d4"/><rect x="2818.0" y="973.0" width="1.0" height="1.1" fill="#da70d6"/><rect x="2819.0" y="973.0" width="1.0" height="1.1" fill="#d4d4d4"/><rect x="2792.0" y="975.0" width="6.0" height="1.1" fill="#d4d4d4"/><rect x="2798.0" y="975.0" width="1.0" height="1.1" fill="#da70d6"/><rect x="2799.0" y="975.0" width="1.0" height="1.1" fill="#ce9178"/><rect x="2802.0" y="975.0" width="5.0" height="1.1" fill="#ce9178"/><rect x="2808.0" y="975.0" width="1.0" height="1.1" fill="#d4d4d4"/><rect x="2810.0" y="975.0" width="1.0" height="1.1" fill="#179fff"/><rect x="2811.0" y="975.0" width="1.0" height="1.1" fill="#d4d4d4"/><rect x="2812.0" y="975.0" width="1.0" height="1.1" fill="#d4d4d4"/><rect x="2813.0" y="975.0" width="1.0" height="1.1" fill="#b5cea8"/><rect x="2814.0" y="975.0" width="1.0" height="1.1" fill="#179fff"/><rect x="2816.0" y="975.0" width="1.0" height="1.1" fill="#d4d4d4"/><rect x="2818.0" y="975.0" width="11.0" height="1.1" fill="#ce9178"/><rect x="2830.0" y="975.0" width="1.0" height="1.1" fill="#d4d4d4"/><rect x="2832.0" y="975.0" width="6.0" height="1.1" fill="#d4d4d4"/><rect x="2838.0" y="975.0" width="1.0" height="1.1" fill="#d4d4d4"/><rect x="2839.0" y="975.0" width="5.0" height="1.1" fill="#d4d4d4"/><rect x="2844.0" y="975.0" width="1.0" height="1.1" fill="#179fff"/><rect x="2845.0" y="975.0" width="1.0" height="1.1" fill="#179fff"/><rect x="2847.0" y="975.0" width="1.0" height="1.1" fill="#d4d4d4"/><rect x="2849.0" y="975.0" width="2.0" height="1.1" fill="#ce9178"/><rect x="2852.0" y="975.0" width="6.0" height="1.1" fill="#ce9178"/><rect x="2859.0" y="975.0" width="1.0" height="1.1" fill="#d4d4d4"/><rect x="2861.0" y="975.0" width="6.0" height="1.1" fill="#d4d4d4"/><rect x="2867.0" y="975.0" width="1.0" height="1.1" fill="#d4d4d4"/><rect x="2868.0" y="975.0" width="7.0" height="1.1" fill="#d4d4d4"/><rect x="2875.0" y="975.0" width="1.0" height="1.1" fill="#179fff"/><rect x="2876.0" y="975.0" width="1.0" height="1.1" fill="#179fff"/><rect x="2877.0" y="975.0" width="1.0" height="1.1" fill="#d4d4d4"/><rect x="2878.0" y="975.0" width="8.0" height="1.1" fill="#d4d4d4"/><rect x="2886.0" y="975.0" width="1.0" height="1.1" fill="#179fff"/><rect x="2788.0" y="977.0" width="1.0" height="1.1" fill="#ffd700"/><rect x="2784.0" y="979.0" width="1.0" height="1.1" fill="#179fff"/><rect x="2786.0" y="979.0" width="4.0" height="1.1" fill="#569cd6"/><rect x="2791.0" y="979.0" width="1.0" height="1.1" fill="#179fff"/><rect x="2788.0" y="981.0" width="6.0" height="1.1" fill="#d4d4d4"/><rect x="2794.0" y="981.0" width="1.0" height="1.1" fill="#ffd700"/><rect x="2795.0" y="981.0" width="16.0" height="1.1" fill="#ce9178"/><rect x="2811.0" y="981.0" width="1.0" height="1.1" fill="#ffd700"/><rect x="2812.0" y="981.0" width="1.0" height="1.1" fill="#d4d4d4"/><rect x="2784.0" y="983.0" width="1.0" height="1.1" fill="#179fff"/><rect x="2780.0" y="985.0" width="1.0" height="1.1" fill="#da70d6"/><rect x="2782.0" y="985.0" width="5.0" height="1.1" fill="#569cd6"/><rect x="2788.0" y="985.0" width="1.0" height="1.1" fill="#da70d6"/><rect x="2789.0" y="985.0" width="5.0" height="1.1" fill="#d4d4d4"/><rect x="2794.0" y="985.0" width="1.0" height="1.1" fill="#da70d6"/><rect x="2796.0" y="985.0" width="1.0" height="1.1" fill="#da70d6"/><rect x="2784.0" y="987.0" width="6.0" height="1.1" fill="#d4d4d4"/><rect x="2790.0" y="987.0" width="1.0" height="1.1" fill="#179fff"/><rect x="2791.0" y="987.0" width="24.0" height="1.1" fill="#ce9178"/><rect x="2816.0" y="987.0" width="1.0" height="1.1" fill="#d4d4d4"/><rect x="2818.0" y="987.0" width="5.0" height="1.1" fill="#d4d4d4"/><rect x="2823.0" y="987.0" width="1.0" height="1.1" fill="#d4d4d4"/><rect x="2824.0" y="987.0" width="7.0" height="1.1" fill="#d4d4d4"/><rect x="2831.0" y="987.0" width="1.0" height="1.1" fill="#179fff"/><rect x="2832.0" y="987.0" width="1.0" height="1.1" fill="#d4d4d4"/><rect x="2780.0" y="989.0" width="1.0" height="1.1" fill="#da70d6"/><rect x="2776.0" y="991.0" width="1.0" height="1.1" fill="#ffd700"/><rect x="2776.0" y="995.0" width="19.0" height="1.1" fill="#d4d4d4"/><rect x="2795.0" y="995.0" width="1.0" height="1.1" fill="#ffd700"/><rect x="2796.0" y="995.0" width="1.0" height="1.1" fill="#ffd700"/><rect x="2797.0" y="995.0" width="1.0" height="1.1" fill="#d4d4d4"/><rect x="2776.0" y="1001.0" width="2.0" height="1.1" fill="#6a9955"/><rect x="2779.0" y="1001.0" width="26.0" height="1.1" fill="#6a9955"/><rect x="2806.0" y="1001.0" width="1.0" height="1.1" fill="#6a9955"/><rect x="2808.0" y="1001.0" width="28.0" height="1.1" fill="#6a9955"/><rect x="2776.0" y="1003.0" width="2.0" height="1.1" fill="#6a9955"/><rect x="2776.0" y="1005.0" width="4.0" height="1.1" fill="#6a9955"/><rect x="2781.0" y="1005.0" width="8.0" height="1.1" fill="#6a9955"/><rect x="2776.0" y="1007.0" width="8.0" height="1.1" fill="#6a9955"/><rect x="2785.0" y="1007.0" width="48.0" height="1.1" fill="#6a9955"/><rect x="2776.0" y="1009.0" width="8.0" height="1.1" fill="#6a9955"/><rect x="2785.0" y="1009.0" width="8.0" height="1.1" fill="#6a9955"/><rect x="2794.0" y="1009.0" width="19.0" height="1.1" fill="#6a9955"/><rect x="2814.0" y="1009.0" width="7.0" height="1.1" fill="#6a9955"/><rect x="2822.0" y="1009.0" width="7.0" height="1.1" fill="#6a9955"/><rect x="2776.0" y="1011.0" width="6.0" height="1.1" fill="#6a9955"/><rect x="2783.0" y="1011.0" width="60.0" height="1.1" fill="#6a9955"/><rect x="2776.0" y="1013.0" width="4.0" height="1.1" fill="#6a9955"/><rect x="2781.0" y="1013.0" width="1.0" height="1.1" fill="#6a9955"/><rect x="2783.0" y="1013.0" width="6.0" height="1.1" fill="#6a9955"/><rect x="2790.0" y="1013.0" width="28.0" height="1.1" fill="#6a9955"/><rect x="2776.0" y="1015.0" width="2.0" height="1.1" fill="#6a9955"/><rect x="2776.0" y="1017.0" width="2.0" height="1.1" fill="#6a9955"/><rect x="2779.0" y="1017.0" width="20.0" height="1.1" fill="#6a9955"/><rect x="2776.0" y="1019.0" width="8.0" height="1.1" fill="#569cd6"/><rect x="2785.0" y="1019.0" width="19.0" height="1.1" fill="#d4d4d4"/><rect x="2804.0" y="1019.0" width="1.0" height="1.1" fill="#ffd700"/><rect x="2805.0" y="1019.0" width="1.0" height="1.1" fill="#ffd700"/><rect x="2807.0" y="1019.0" width="1.0" height="1.1" fill="#ffd700"/><rect x="2780.0" y="1021.0" width="6.0" height="1.1" fill="#d4d4d4"/><rect x="2786.0" y="1021.0" width="1.0" height="1.1" fill="#da70d6"/><rect x="2787.0" y="1021.0" width="4.0" height="1.1" fill="#ce9178"/><rect x="2792.0" y="1021.0" width="12.0" height="1.1" fill="#ce9178"/><rect x="2805.0" y="1021.0" width="8.0" height="1.1" fill="#ce9178"/><rect x="2814.0" y="1021.0" width="4.0" height="1.1" fill="#ce9178"/><rect x="2818.0" y="1021.0" width="1.0" height="1.1" fill="#da70d6"/><rect x="2819.0" y="1021.0" width="1.0" height="1.1" fill="#d4d4d4"/><rect x="2780.0" y="1023.0" width="3.0" height="1.1" fill="#569cd6"/><rect x="2784.0" y="1023.0" width="1.0" height="1.1" fill="#da70d6"/><rect x="2784.0" y="1025.0" width="2.0" height="1.1" fill="#6a9955"/><rect x="2787.0" y="1025.0" width="18.0" height="1.1" fill="#6a9955"/><rect x="2784.0" y="1027.0" width="3.0" height="1.1" fill="#569cd6"/><rect x="2788.0" y="1027.0" width="11.0" height="1.1" fill="#d4d4d4"/><rect x="2800.0" y="1027.0" width="1.0" height="1.1" fill="#d4d4d4"/><rect x="2802.0" y="1027.0" width="6.0" height="1.1" fill="#d4d4d4"/><rect x="2808.0" y="1027.0" width="1.0" height="1.1" fill="#d4d4d4"/><rect x="2809.0" y="1027.0" width="12.0" height="1.1" fill="#d4d4d4"/><rect x="2821.0" y="1027.0" width="1.0" height="1.1" fill="#179fff"/><rect x="2822.0" y="1027.0" width="15.0" height="1.1" fill="#ce9178"/><rect x="2837.0" y="1027.0" width="1.0" height="1.1" fill="#179fff"/><rect x="2838.0" y="1027.0" width="1.0" height="1.1" fill="#d4d4d4"/><rect x="2784.0" y="1033.0" width="2.0" height="1.1" fill="#569cd6"/><rect x="2787.0" y="1033.0" width="1.0" height="1.1" fill="#179fff"/><rect x="2788.0" y="1033.0" width="11.0" height="1.1" fill="#d4d4d4"/><rect x="2800.0" y="1033.0" width="1.0" height="1.1" fill="#d4d4d4"/><rect x="2801.0" y="1033.0" width="1.0" height="1.1" fill="#d4d4d4"/><rect x="2803.0" y="1033.0" width="11.0" height="1.1" fill="#d4d4d4"/><rect x="2814.0" y="1033.0" width="1.0" height="1.1" fill="#d4d4d4"/><rect x="2815.0" y="1033.0" width="6.0" height="1.1" fill="#d4d4d4"/><rect x="2822.0" y="1033.0" width="1.0" height="1.1" fill="#d4d4d4"/><rect x="2824.0" y="1033.0" width="1.0" height="1.1" fill="#b5cea8"/><rect x="2825.0" y="1033.0" width="1.0" height="1.1" fill="#179fff"/><rect x="2827.0" y="1033.0" width="1.0" height="1.1" fill="#179fff"/><rect x="2788.0" y="1035.0" width="6.0" height="1.1" fill="#d4d4d4"/><rect x="2788.0" y="1037.0" width="3.0" height="1.1" fill="#569cd6"/><rect x="2792.0" y="1037.0" width="1.0" height="1.1" fill="#ffd700"/><rect x="2793.0" y="1037.0" width="3.0" height="1.1" fill="#569cd6"/><rect x="2797.0" y="1037.0" width="1.0" height="1.1" fill="#d4d4d4"/><rect x="2799.0" y="1037.0" width="1.0" height="1.1" fill="#d4d4d4"/><rect x="2801.0" y="1037.0" width="1.0" height="1.1" fill="#b5cea8"/><rect x="2802.0" y="1037.0" width="1.0" height="1.1" fill="#d4d4d4"/><rect x="2804.0" y="1037.0" width="1.0" height="1.1" fill="#d4d4d4"/><rect x="2806.0" y="1037.0" width="1.0" height="1.1" fill="#d4d4d4"/><rect x="2808.0" y="1037.0" width="11.0" height="1.1" fill="#d4d4d4"/><rect x="2819.0" y="1037.0" width="1.0" height="1.1" fill="#d4d4d4"/><rect x="2820.0" y="1037.0" width="6.0" height="1.1" fill="#d4d4d4"/><rect x="2826.0" y="1037.0" width="1.0" height="1.1" fill="#d4d4d4"/><rect x="2828.0" y="1037.0" width="1.0" height="1.1" fill="#d4d4d4"/><rect x="2829.0" y="1037.0" width="1.0" height="1.1" fill="#d4d4d4"/><rect x="2830.0" y="1037.0" width="1.0" height="1.1" fill="#d4d4d4"/><rect x="2831.0" y="1037.0" width="1.0" height="1.1" fill="#ffd700"/><rect x="2833.0" y="1037.0" width="1.0" height="1.1" fill="#ffd700"/><rect x="2792.0" y="1039.0" width="3.0" height="1.1" fill="#569cd6"/><rect x="2796.0" y="1039.0" width="6.0" height="1.1" fill="#d4d4d4"/><rect x="2803.0" y="1039.0" width="1.0" height="1.1" fill="#d4d4d4"/><rect x="2805.0" y="1039.0" width="11.0" height="1.1" fill="#d4d4d4"/><rect x="2816.0" y="1039.0" width="1.0" height="1.1" fill="#da70d6"/><rect x="2817.0" y="1039.0" width="1.0" height="1.1" fill="#d4d4d4"/><rect x="2818.0" y="1039.0" width="1.0" height="1.1" fill="#da70d6"/><rect x="2819.0" y="1039.0" width="1.0" height="1.1" fill="#d4d4d4"/><rect x="2792.0" y="1041.0" width="6.0" height="1.1" fill="#d4d4d4"/><rect x="2798.0" y="1041.0" width="1.0" height="1.1" fill="#da70d6"/><rect x="2799.0" y="1041.0" width="1.0" height="1.1" fill="#ce9178"/><rect x="2802.0" y="1041.0" width="5.0" height="1.1" fill="#ce9178"/><rect x="2808.0" y="1041.0" width="1.0" height="1.1" fill="#d4d4d4"/><rect x="2810.0" y="1041.0" width="1.0" height="1.1" fill="#179fff"/><rect x="2811.0" y="1041.0" width="1.0" height="1.1" fill="#d4d4d4"/><rect x="2812.0" y="1041.0" width="1.0" height="1.1" fill="#d4d4d4"/><rect x="2813.0" y="1041.0" width="1.0" height="1.1" fill="#b5cea8"/><rect x="2814.0" y="1041.0" width="1.0" height="1.1" fill="#179fff"/><rect x="2816.0" y="1041.0" width="1.0" height="1.1" fill="#d4d4d4"/><rect x="2818.0" y="1041.0" width="11.0" height="1.1" fill="#ce9178"/><rect x="2830.0" y="1041.0" width="1.0" height="1.1" fill="#d4d4d4"/><rect x="2832.0" y="1041.0" width="6.0" height="1.1" fill="#d4d4d4"/><rect x="2838.0" y="1041.0" width="1.0" height="1.1" fill="#d4d4d4"/><rect x="2839.0" y="1041.0" width="5.0" height="1.1" fill="#d4d4d4"/><rect x="2844.0" y="1041.0" width="1.0" height="1.1" fill="#179fff"/><rect x="2845.0" y="1041.0" width="1.0" height="1.1" fill="#179fff"/><rect x="2847.0" y="1041.0" width="1.0" height="1.1" fill="#d4d4d4"/><rect x="2849.0" y="1041.0" width="2.0" height="1.1" fill="#ce9178"/><rect x="2852.0" y="1041.0" width="6.0" height="1.1" fill="#ce9178"/><rect x="2859.0" y="1041.0" width="1.0" height="1.1" fill="#d4d4d4"/><rect x="2861.0" y="1041.0" width="6.0" height="1.1" fill="#d4d4d4"/><rect x="2867.0" y="1041.0" width="1.0" height="1.1" fill="#d4d4d4"/><rect x="2868.0" y="1041.0" width="7.0" height="1.1" fill="#d4d4d4"/><rect x="2875.0" y="1041.0" width="1.0" height="1.1" fill="#179fff"/><rect x="2876.0" y="1041.0" width="1.0" height="1.1" fill="#179fff"/><rect x="2877.0" y="1041.0" width="1.0" height="1.1" fill="#d4d4d4"/><rect x="2878.0" y="1041.0" width="8.0" height="1.1" fill="#d4d4d4"/><rect x="2886.0" y="1041.0" width="1.0" height="1.1" fill="#179fff"/><rect x="2788.0" y="1043.0" width="1.0" height="1.1" fill="#ffd700"/></g></svg>
</body></html>
